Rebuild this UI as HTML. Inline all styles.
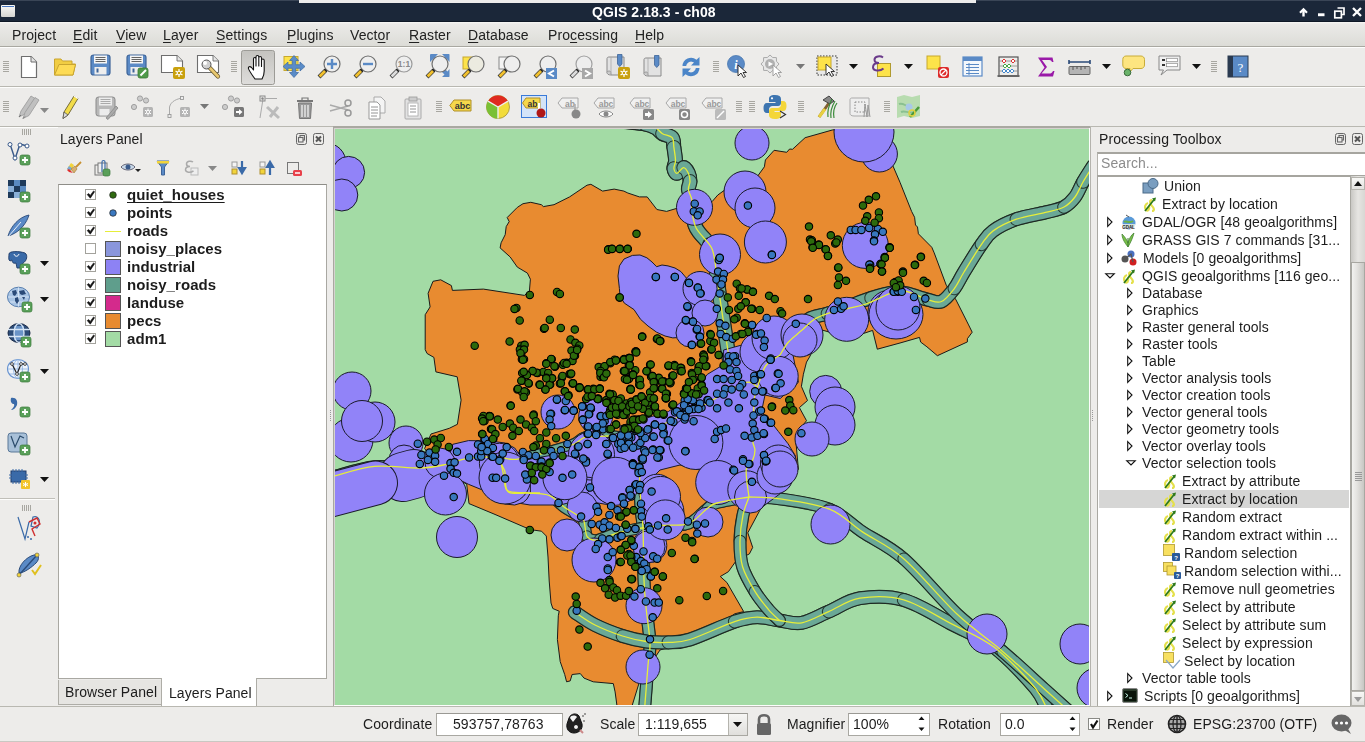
<!DOCTYPE html>
<html><head><meta charset="utf-8">
<style>
*{box-sizing:border-box;margin:0;padding:0}
html,body{width:1365px;height:742px;overflow:hidden;background:#edecea;font-family:"Liberation Sans",sans-serif;font-size:14px;color:#1c1c1c}
.a,.t,.i{position:absolute}
.t{white-space:nowrap;line-height:16px;letter-spacing:0.08px;will-change:transform}
svg.i{overflow:visible}
#map svg{position:absolute}
.u{text-decoration:underline;text-underline-offset:2px}
</style></head><body>
<div class="a" style="left:0;top:0;width:1365px;height:22px;background:#1b2739"></div>
<div class="a" style="left:0;top:21px;width:1365px;height:1px;background:#0e1726"></div>
<div class="a" style="left:0;top:0;width:299px;height:1px;background:#3a4556"></div>
<div class="a" style="left:976px;top:0;width:389px;height:1px;background:#3a4556"></div>
<div class="a" style="left:299px;top:0;width:677px;height:3px;background:#edeceb"></div>
<div class="a" style="left:1px;top:5px;width:14px;height:12px;background:linear-gradient(#fafaf8,#d4d4d0);border-radius:1px"></div>
<div class="a" style="left:2px;top:6px;width:12px;height:1px;background:#4a78c0"></div>
<div class="t" style="left:592px;top:4px;font-weight:bold;color:#fff;font-size:14px">QGIS 2.18.3 - ch08</div>
<svg class="i" style="left:1299px;top:8px" width="9" height="9" viewBox="0 0 9 9"><path d="M1,4.8 L4.5,1.3 L8,4.8" stroke="#fff" stroke-width="2.2" fill="none"/><path d="M4.5,2 V8.5" stroke="#fff" stroke-width="2.4"/></svg>
<svg class="i" style="left:1318px;top:13px" width="7" height="4" viewBox="0 0 7 4"><rect x="0" y="0.3" width="6.5" height="2.9" fill="#fff"/></svg>
<svg class="i" style="left:1333px;top:6px" width="13" height="13" viewBox="0 0 13 13"><path d="M4.5,2 H11 V8.5 H9" fill="none" stroke="#fff" stroke-width="1.7"/><rect x="1.8" y="5.2" width="6.6" height="6.6" fill="#1b2739" stroke="#fff" stroke-width="1.7"/></svg>
<svg class="i" style="left:1352px;top:7px" width="10" height="10" viewBox="0 0 10 10"><path d="M1,1 L9,9 M9,1 L1,9" stroke="#fff" stroke-width="2.3"/></svg>
<div class="a" style="left:0;top:22px;width:1365px;height:24px;background:linear-gradient(#f7f7f5 0px,#ebeae8 2px,#dcdcd7 100%)"></div>
<div class="a" style="left:0;top:46px;width:1365px;height:1px;background:#a9a8a1"></div>
<div class="a" style="left:0;top:47px;width:1365px;height:1px;background:#fdfdfc"></div>
<div class="t" style="left:12px;top:27px;font-size:14px;color:#222">Pro<span class="u">j</span>ect</div>
<div class="t" style="left:73px;top:27px;font-size:14px;color:#222"><span class="u">E</span>dit</div>
<div class="t" style="left:116px;top:27px;font-size:14px;color:#222"><span class="u">V</span>iew</div>
<div class="t" style="left:163px;top:27px;font-size:14px;color:#222"><span class="u">L</span>ayer</div>
<div class="t" style="left:216px;top:27px;font-size:14px;color:#222"><span class="u">S</span>ettings</div>
<div class="t" style="left:287px;top:27px;font-size:14px;color:#222"><span class="u">P</span>lugins</div>
<div class="t" style="left:350px;top:27px;font-size:14px;color:#222">Vect<span class="u">o</span>r</div>
<div class="t" style="left:409px;top:27px;font-size:14px;color:#222"><span class="u">R</span>aster</div>
<div class="t" style="left:468px;top:27px;font-size:14px;color:#222"><span class="u">D</span>atabase</div>
<div class="t" style="left:548px;top:27px;font-size:14px;color:#222">Pro<span class="u">c</span>essing</div>
<div class="t" style="left:635px;top:27px;font-size:14px;color:#222"><span class="u">H</span>elp</div>
<div class="a" style="left:0;top:48px;width:1365px;height:38px;background:#edecea"></div>
<div class="a" style="left:0;top:86px;width:1365px;height:1px;background:#b9b8b1"></div>
<div class="a" style="left:0;top:87px;width:1365px;height:1px;background:#fdfdfc"></div>
<div class="a" style="left:0;top:126px;width:1365px;height:1px;background:#b9b8b1"></div>
<div class="a" style="left:0;top:127px;width:58px;height:1px;background:#fdfdfc"></div>
<svg class="i" style="left:3px;top:61px" width="6" height="12" viewBox="0 0 6 12"><rect x="0" y="0" width="6" height="1" fill="#a8a7a1"/><rect x="0" y="2" width="6" height="1" fill="#a8a7a1"/><rect x="0" y="4" width="6" height="1" fill="#a8a7a1"/><rect x="0" y="6" width="6" height="1" fill="#a8a7a1"/><rect x="0" y="8" width="6" height="1" fill="#a8a7a1"/><rect x="0" y="10" width="6" height="1" fill="#a8a7a1"/></svg>
<svg class="i" style="left:20px;top:55px" width="18" height="24" viewBox="0 0 18 24"><path d="M1.5,1.5 H11 L16.5,7 V22.5 H1.5 Z" fill="#fff" stroke="#6e6e6e" stroke-width="1.2" stroke-linejoin="round"/><path d="M11,1.5 V7 H16.5" fill="#e4e4e4" stroke="#6e6e6e" stroke-width="1"/></svg>
<svg class="i" style="left:53px;top:57px" width="24" height="20" viewBox="0 0 24 20"><path d="M1.5,3 V18 H20 L22.5,7 H6 L3,18" fill="#f7d44a" stroke="#c9a530" stroke-width="1"/><path d="M1.5,18 V2 H8 L9.5,4 H19 V7" fill="#f1cd43" stroke="#c9a530" stroke-width="1"/><path d="M6,7.5 H22.5 L20,18 H1.5 Z" fill="#fddb55" stroke="#c9a530" stroke-width="1"/></svg>
<svg class="i" style="left:90px;top:54px" width="24" height="25" viewBox="0 0 24 25"><rect x="1" y="1" width="19" height="20" rx="2.5" fill="#5b8ac6" stroke="#3e6498" stroke-width="1.2"/><rect x="4" y="1.5" width="13" height="8" fill="#f4f4f4"/><path d="M5.5,3.5 H15.5 M5.5,5.5 H15.5 M5.5,7.5 H15.5" stroke="#555" stroke-width="0.9"/><rect x="4.5" y="13" width="12" height="7.5" fill="#eee"/><rect x="6.5" y="14.5" width="2" height="4" fill="#3e6498"/></svg>
<svg class="i" style="left:126px;top:54px" width="24" height="25" viewBox="0 0 24 25"><rect x="1" y="1" width="19" height="20" rx="2.5" fill="#5b8ac6" stroke="#3e6498" stroke-width="1.2"/><rect x="4" y="1.5" width="13" height="8" fill="#f4f4f4"/><path d="M5.5,3.5 H15.5 M5.5,5.5 H15.5 M5.5,7.5 H15.5" stroke="#555" stroke-width="0.9"/><rect x="4.5" y="13" width="12" height="7.5" fill="#eee"/><rect x="6.5" y="14.5" width="2" height="4" fill="#3e6498"/><rect x="12" y="14" width="10" height="10" rx="2" fill="#4f9a4a" stroke="#3a7a36" stroke-width="0.8"/><path d="M14.5,21.5 L20,16" stroke="#fff" stroke-width="2"/></svg>
<svg class="i" style="left:160px;top:54px" width="26" height="26" viewBox="0 0 26 26"><path d="M1.5,1.5 H17 L22.5,7 V18.5 H1.5 Z" fill="#fff" stroke="#6e6e6e" stroke-width="1.1"/><path d="M17,1.5 V7 H22.5" fill="#e6e6e6" stroke="#6e6e6e" stroke-width="0.9"/><rect x="13" y="13" width="12" height="12" rx="2" fill="#c9a10e"/><g stroke="#fff" stroke-width="1.2"><path d="M19,15 V23 M15.5,17 L22.5,21 M15.5,21 L22.5,17"/></g><circle cx="19" cy="19" r="1.8" fill="#c9a10e" stroke="#fff" stroke-width="1"/></svg>
<svg class="i" style="left:196px;top:54px" width="26" height="26" viewBox="0 0 26 26"><path d="M1.5,1.5 H17 L22.5,7 V18.5 H1.5 Z" fill="#fff" stroke="#6e6e6e" stroke-width="1.1"/><path d="M17,1.5 V7 H22.5" fill="#e6e6e6" stroke="#6e6e6e" stroke-width="0.9"/><path d="M13,13 L22,22.5" stroke="#6a5a30" stroke-width="4.2" stroke-linecap="round"/><path d="M13,13 L22,22.5" stroke="#e8c870" stroke-width="2.6" stroke-linecap="round"/><circle cx="10.5" cy="10.5" r="4.5" fill="#d0d0d0" stroke="#555" stroke-width="1"/><circle cx="9" cy="9" r="2" fill="#fff"/></svg>
<svg class="i" style="left:231px;top:61px" width="6" height="12" viewBox="0 0 6 12"><rect x="0" y="0" width="6" height="1" fill="#a8a7a1"/><rect x="0" y="2" width="6" height="1" fill="#a8a7a1"/><rect x="0" y="4" width="6" height="1" fill="#a8a7a1"/><rect x="0" y="6" width="6" height="1" fill="#a8a7a1"/><rect x="0" y="8" width="6" height="1" fill="#a8a7a1"/><rect x="0" y="10" width="6" height="1" fill="#a8a7a1"/></svg>
<svg class="i" style="left:241px;top:50px" width="34" height="35" viewBox="0 0 34 35"><defs><linearGradient id="pg" x1="0" y1="0" x2="0" y2="1"><stop offset="0" stop-color="#c4c3bf"/><stop offset="1" stop-color="#dedddb"/></linearGradient></defs><rect x="0.5" y="0.5" width="33" height="34" rx="2" fill="url(#pg)" stroke="#9c9b96"/><path d="M14,29 C12,26 8,21 7.5,18.5 C7,16.5 9,16 10.5,17.5 L12.5,20 V9 C12.5,7 15,7 15,9 V16 V7 C15,5 17.8,5 17.8,7 V16 V8 C17.8,6 20.5,6 20.5,8 V16.5 V10.5 C20.5,8.5 23.2,8.5 23.2,10.5 V21 C23.2,25 22,27 21,29 Z" fill="#fff" stroke="#111" stroke-width="1.1" stroke-linejoin="round"/></svg>
<svg class="i" style="left:282px;top:54px" width="24" height="25" viewBox="0 0 24 25"><rect x="2" y="2.5" width="14" height="14" fill="#fde34a" stroke="#c8a82c"/><path d="M12,1.5 L16.5,6.5 H13.8 V10.7 H18 V8.0 L23,12.5 L18,17.0 V14.3 H13.8 V18.5 H16.5 L12,23.5 L7.5,18.5 H10.2 V14.3 H6 V17.0 L1,12.5 L6,8.0 V10.7 H10.2 V6.5 H7.5 Z" fill="#5a8cc8" stroke="#3e6aa0" stroke-width="0.7"/></svg>
<svg class="i" style="left:317px;top:55px" width="26" height="24" viewBox="0 0 26 24"><path d="M2,22 L9,15" stroke="#333" stroke-width="4" stroke-linecap="butt"/><path d="M2.6,21.4 L8,16" stroke="#f2c12e" stroke-width="2.8"/><path d="M8.5,15.5 L10.5,13.5" stroke="#111" stroke-width="3"/><circle cx="15" cy="9" r="8" fill="#eeeeee" stroke="#6f6f6f" stroke-width="1.2"/><path d="M15,4 V14 M10,9 H20" stroke="#5a8ac6" stroke-width="2.4"/></svg>
<svg class="i" style="left:353px;top:55px" width="26" height="24" viewBox="0 0 26 24"><path d="M2,22 L9,15" stroke="#333" stroke-width="4" stroke-linecap="butt"/><path d="M2.6,21.4 L8,16" stroke="#f2c12e" stroke-width="2.8"/><path d="M8.5,15.5 L10.5,13.5" stroke="#111" stroke-width="3"/><circle cx="15" cy="9" r="8" fill="#eeeeee" stroke="#6f6f6f" stroke-width="1.2"/><path d="M10,9 H20" stroke="#5a8ac6" stroke-width="2.4"/></svg>
<svg class="i" style="left:389px;top:55px" width="26" height="24" viewBox="0 0 26 24"><path d="M2,22 L9,15" stroke="#333" stroke-width="4" stroke-linecap="butt"/><path d="M2.6,21.4 L8,16" stroke="#dddddd" stroke-width="2.8"/><path d="M8.5,15.5 L10.5,13.5" stroke="#111" stroke-width="3"/><circle cx="15" cy="9" r="8" fill="#eeeeee" stroke="#9a9a9a" stroke-width="1.2"/><text x="15" y="12.3" font-size="8.5" font-weight="bold" text-anchor="middle" fill="#8a8a8a" font-family="Liberation Sans">1:1</text></svg>
<svg class="i" style="left:425px;top:53px" width="26" height="26" viewBox="0 0 26 26"><path d="M6,1 H13 L10.5,3.5 L13,6 L10,9 L7.5,6.5 L5,9 V1.5 Z" fill="#5a8ac6"/><path d="M24,1 H17 L19.5,3.5 L17,6 L20,9 L22.5,6.5 L24.5,9 V1.5 Z" fill="#5a8ac6"/><path d="M24,24 H17 L19.5,21.5 L17,19 L20,16 L22.5,18.5 L24.5,16 V23.5 Z" fill="#5a8ac6"/><g transform="translate(0,2)"><path d="M2,22 L9,15" stroke="#333" stroke-width="4" stroke-linecap="butt"/><path d="M2.6,21.4 L8,16" stroke="#f2c12e" stroke-width="2.8"/><path d="M8.5,15.5 L10.5,13.5" stroke="#111" stroke-width="3"/><circle cx="15" cy="9" r="8" fill="#eeeeee" stroke="#6f6f6f" stroke-width="1.2"/></g></svg>
<svg class="i" style="left:461px;top:55px" width="26" height="24" viewBox="0 0 26 24"><rect x="2" y="2" width="10" height="12" fill="#fde34a" stroke="#c8a82c"/><path d="M2,22 L9,15" stroke="#333" stroke-width="4" stroke-linecap="butt"/><path d="M2.6,21.4 L8,16" stroke="#f2c12e" stroke-width="2.8"/><path d="M8.5,15.5 L10.5,13.5" stroke="#111" stroke-width="3"/><circle cx="15" cy="9" r="8" fill="#ecebe0" stroke="#6f6f6f" stroke-width="1.2"/></svg>
<svg class="i" style="left:497px;top:55px" width="26" height="24" viewBox="0 0 26 24"><rect x="2" y="2" width="10" height="12" fill="#f4f4f4" stroke="#888"/><path d="M2,22 L9,15" stroke="#333" stroke-width="4" stroke-linecap="butt"/><path d="M2.6,21.4 L8,16" stroke="#f2c12e" stroke-width="2.8"/><path d="M8.5,15.5 L10.5,13.5" stroke="#111" stroke-width="3"/><circle cx="15" cy="9" r="8" fill="#eeeeee" stroke="#6f6f6f" stroke-width="1.2"/></svg>
<svg class="i" style="left:533px;top:55px" width="26" height="26" viewBox="0 0 26 26"><path d="M2,22 L9,15" stroke="#333" stroke-width="4" stroke-linecap="butt"/><path d="M2.6,21.4 L8,16" stroke="#f2c12e" stroke-width="2.8"/><path d="M8.5,15.5 L10.5,13.5" stroke="#111" stroke-width="3"/><circle cx="15" cy="9" r="8" fill="#eeeeee" stroke="#6f6f6f" stroke-width="1.2"/><rect x="13" y="13" width="11" height="11" fill="#5a8ac6"/><path d="M21,15.5 L16,18.5 L21,21.5" stroke="#fff" stroke-width="2" fill="none"/></svg>
<svg class="i" style="left:569px;top:55px" width="26" height="26" viewBox="0 0 26 26"><path d="M2,22 L9,15" stroke="#333" stroke-width="4" stroke-linecap="butt"/><path d="M2.6,21.4 L8,16" stroke="#dddddd" stroke-width="2.8"/><path d="M8.5,15.5 L10.5,13.5" stroke="#111" stroke-width="3"/><circle cx="15" cy="9" r="8" fill="#eeeeee" stroke="#a0a0a0" stroke-width="1.2"/><rect x="13" y="13" width="11" height="11" fill="#a8a8a8"/><path d="M16,15.5 L21,18.5 L16,21.5" stroke="#fff" stroke-width="2" fill="none"/></svg>
<svg class="i" style="left:605px;top:54px" width="26" height="26" viewBox="0 0 26 26"><path d="M4,3 H19 V21 H6 C3,21 2,19.5 2,18.5 V4.5 C2,3.5 3,3 4,3 Z" fill="#e2e2e2" stroke="#8a8a8a"/><path d="M2,18.5 C2,16.5 6,16.5 6,18.5 V21" fill="#c8c8c8" stroke="#8a8a8a" stroke-width="0.8"/><path d="M6,3 V18" stroke="#aaa" stroke-width="0.8"/><path d="M12.5,0.5 H17 V10 L14.75,12.5 L12.5,10 Z" fill="#5a8ac6" stroke="#3e6498" stroke-width="0.8"/><rect x="13" y="13" width="12" height="12" rx="2" fill="#c9a10e"/><g stroke="#fff" stroke-width="1.2"><path d="M19,15 V23 M15.5,17 L22.5,21 M15.5,21 L22.5,17"/></g><circle cx="19" cy="19" r="1.8" fill="#c9a10e" stroke="#fff" stroke-width="1"/></svg>
<svg class="i" style="left:642px;top:55px" width="24" height="24" viewBox="0 0 24 24"><path d="M4,3 H19 V21 H6 C3,21 2,19.5 2,18.5 V4.5 C2,3.5 3,3 4,3 Z" fill="#e2e2e2" stroke="#8a8a8a"/><path d="M2,18.5 C2,16.5 6,16.5 6,18.5 V21" fill="#c8c8c8" stroke="#8a8a8a" stroke-width="0.8"/><path d="M6,3 V18" stroke="#aaa" stroke-width="0.8"/><path d="M12.5,0.5 H17 V10 L14.75,12.5 L12.5,10 Z" fill="#5a8ac6" stroke="#3e6498" stroke-width="0.8"/></svg>
<svg class="i" style="left:679px;top:55px" width="24" height="24" viewBox="0 0 24 24"><path d="M3.5,11 A8.5,8.5 0 0 1 17.5,4.8 L20.5,2 V10.5 H12 L15,7.5 A5,5 0 0 0 7.2,11 Z" fill="#4b85c8"/><path d="M20.5,13 A8.5,8.5 0 0 1 6.5,19.2 L3.5,22 V13.5 H12 L9,16.5 A5,5 0 0 0 16.8,13 Z" fill="#4b85c8"/></svg>
<svg class="i" style="left:713px;top:61px" width="6" height="12" viewBox="0 0 6 12"><rect x="0" y="0" width="6" height="1" fill="#a8a7a1"/><rect x="0" y="2" width="6" height="1" fill="#a8a7a1"/><rect x="0" y="4" width="6" height="1" fill="#a8a7a1"/><rect x="0" y="6" width="6" height="1" fill="#a8a7a1"/><rect x="0" y="8" width="6" height="1" fill="#a8a7a1"/><rect x="0" y="10" width="6" height="1" fill="#a8a7a1"/></svg>
<svg class="i" style="left:727px;top:55px" width="26" height="26" viewBox="0 0 26 26"><circle cx="9" cy="9" r="8.5" fill="#5a8ac6" stroke="#4a78b0" stroke-width="0.8"/><text x="9" y="14" font-size="12" font-style="italic" font-weight="bold" text-anchor="middle" fill="#fff" font-family="Liberation Serif">i</text><path d="M11,10 L11,21 L14,18 L16.5,22.5 L18.5,21.5 L16,17.5 H19.5 Z" fill="#fff" stroke="#222" stroke-width="0.9" stroke-linejoin="round"/></svg>
<svg class="i" style="left:761px;top:55px" width="24" height="26" viewBox="0 0 24 26"><polygon points="18.0,9.0 15.5,11.7 15.4,15.4 11.7,15.5 9.0,18.0 6.3,15.5 2.6,15.4 2.5,11.7 0.0,9.0 2.5,6.3 2.6,2.6 6.3,2.5 9.0,0.0 11.7,2.5 15.4,2.6 15.5,6.3" fill="#e8e8e8" stroke="#aaa"/><circle cx="9" cy="9" r="5" fill="#b0b0b0"/><path d="M7.5,6.5 L12,9 L7.5,11.5 Z" fill="#fff"/><path d="M12,10 L12,21 L15,18 L17.5,22.5 L19.5,21.5 L17,17.5 H20.5 Z" fill="#fff" stroke="#999" stroke-width="0.9" stroke-linejoin="round"/></svg>
<svg class="i" style="left:796px;top:64px" width="10" height="6" viewBox="0 0 10 6"><path d="M0,0 H9 L4.5,5 Z" fill="#777"/></svg>
<svg class="i" style="left:816px;top:55px" width="26" height="26" viewBox="0 0 26 26"><rect x="1" y="1" width="20" height="19" fill="#e8e8e8" stroke="#333" stroke-dasharray="1.5,1.5"/><rect x="2" y="2" width="13" height="13" fill="#fde34a" stroke="#c8a82c"/><path d="M10,9 L10,20 L13,17 L15.5,21.5 L17.5,20.5 L15,16.5 H18.5 Z" fill="#fff" stroke="#222" stroke-width="0.9" stroke-linejoin="round"/></svg>
<svg class="i" style="left:849px;top:64px" width="10" height="6" viewBox="0 0 10 6"><path d="M0,0 H9 L4.5,5 Z" fill="#111"/></svg>
<svg class="i" style="left:871px;top:55px" width="22" height="24" viewBox="0 0 22 24"><rect x="6.5" y="8.5" width="13" height="13" fill="#fde34a" stroke="#b09a30"/><path d="M12,2.5 C9.5,0.5 3.5,1 3.5,4.8 C3.5,6.8 5.5,8 8,8 C4.5,8 2,9.5 2,12.2 C2,16 9,16.5 12.5,13.5" fill="none" stroke="#6a3a8a" stroke-width="2"/></svg>
<svg class="i" style="left:904px;top:64px" width="10" height="6" viewBox="0 0 10 6"><path d="M0,0 H9 L4.5,5 Z" fill="#111"/></svg>
<svg class="i" style="left:926px;top:55px" width="24" height="24" viewBox="0 0 24 24"><rect x="1" y="1" width="13" height="13" fill="#fde34a" stroke="#c8a82c"/><rect x="12" y="12" width="11" height="11" rx="2" fill="#dd2a2a"/><circle cx="17.5" cy="17.5" r="3.5" fill="none" stroke="#fff" stroke-width="1.3"/><path d="M15,20 L20,15" stroke="#fff" stroke-width="1.3"/></svg>
<svg class="i" style="left:962px;top:56px" width="22" height="22" viewBox="0 0 22 22"><rect x="1" y="1" width="19" height="19" fill="#f4f8fc" stroke="#5a8ac6" stroke-width="1.2"/><rect x="1" y="1" width="19" height="4" fill="#5a8ac6"/><path d="M4,8.5 H17 M4,11.5 H17 M4,14.5 H17 M4,17.5 H17 M7,7 V19" stroke="#5a8ac6" stroke-width="1"/></svg>
<svg class="i" style="left:997px;top:56px" width="24" height="22" viewBox="0 0 24 22"><rect x="2" y="1" width="19" height="19" fill="none" stroke="#555" stroke-width="1.2"/><rect x="0.5" y="19" width="22" height="2" fill="#666"/><path d="M2,5 H21 M2,10 H21 M2,15 H21" stroke="#888" stroke-width="0.8"/><g fill="#fff" stroke-width="1"><path d="M7,3 L9,5 L7,7 L5,5 Z M16,3 L18,5 L16,7 L14,5 Z" stroke="#d33"/><path d="M8,8 L10,10 L8,12 L6,10 Z M12,8 L14,10 L12,12 L10,10 Z" stroke="#4a4"/><path d="M7,13 L9,15 L7,17 L5,15 Z M11,13 L13,15 L11,17 L9,15 Z M15,13 L17,15 L15,17 L13,15 Z" stroke="#48c"/></g></svg>
<svg class="i" style="left:1037px;top:56px" width="18" height="22" viewBox="0 0 18 22"><path d="M1,1.5 H15.5 L16.5,6 L15,6 C14,4 13,4 11,4 H5 L10,11 L4.5,17.5 H12 C14,17.5 15,17 16,15 L17.5,15 L16,20.5 H1 L7.5,11.5 Z" fill="#9a1aa8"/></svg>
<svg class="i" style="left:1068px;top:59px" width="24" height="18" viewBox="0 0 24 18"><path d="M1,3 H22 M1,1 V5 M22,1 V5" stroke="#2a4a78" stroke-width="1.6"/><rect x="1" y="7.5" width="21" height="8" rx="1" fill="#b4b4b4" stroke="#666"/><path d="M5,7.5 V11 M9,7.5 V10 M13,7.5 V11 M17,7.5 V10" stroke="#555"/></svg>
<svg class="i" style="left:1102px;top:64px" width="10" height="6" viewBox="0 0 10 6"><path d="M0,0 H9 L4.5,5 Z" fill="#111"/></svg>
<svg class="i" style="left:1122px;top:55px" width="24" height="24" viewBox="0 0 24 24"><path d="M4,1 H19 C21,1 22.5,2.5 22.5,4.5 V10 C22.5,12 21,13.5 19,13.5 H11 L7,18 L8,13.5 H4 C2,13.5 0.8,12 0.8,10 V4.5 C0.8,2.5 2,1 4,1 Z" fill="#fde580" stroke="#c8ac38"/><circle cx="5.5" cy="17.5" r="3.3" fill="#6ab36a" stroke="#3a6a3a"/></svg>
<svg class="i" style="left:1158px;top:55px" width="24" height="24" viewBox="0 0 24 24"><path d="M1,1 H22 V15 H9 L3,20 L5.5,15 H1 Z" fill="#f0f0f0" stroke="#888"/><rect x="4" y="4" width="3" height="2" fill="#333"/><rect x="4" y="9" width="3" height="2" fill="#333"/><rect x="8.5" y="3.3" width="11" height="3.4" fill="#fff" stroke="#888" stroke-width="0.7"/><rect x="8.5" y="8.3" width="11" height="3.4" fill="#fff" stroke="#888" stroke-width="0.7"/></svg>
<svg class="i" style="left:1192px;top:64px" width="10" height="6" viewBox="0 0 10 6"><path d="M0,0 H9 L4.5,5 Z" fill="#111"/></svg>
<svg class="i" style="left:1211px;top:61px" width="6" height="12" viewBox="0 0 6 12"><rect x="0" y="0" width="6" height="1" fill="#a8a7a1"/><rect x="0" y="2" width="6" height="1" fill="#a8a7a1"/><rect x="0" y="4" width="6" height="1" fill="#a8a7a1"/><rect x="0" y="6" width="6" height="1" fill="#a8a7a1"/><rect x="0" y="8" width="6" height="1" fill="#a8a7a1"/><rect x="0" y="10" width="6" height="1" fill="#a8a7a1"/></svg>
<svg class="i" style="left:1227px;top:55px" width="22" height="24" viewBox="0 0 22 24"><rect x="1" y="1" width="20" height="21" fill="#5a8ac6" stroke="#2a3a50"/><rect x="1" y="1" width="5" height="21" fill="#2a3a50"/><text x="13.5" y="16.5" font-size="13" text-anchor="middle" fill="#fff" font-family="Liberation Serif">?</text></svg>
<svg class="i" style="left:3px;top:101px" width="6" height="12" viewBox="0 0 6 12"><rect x="0" y="0" width="6" height="1" fill="#a8a7a1"/><rect x="0" y="2" width="6" height="1" fill="#a8a7a1"/><rect x="0" y="4" width="6" height="1" fill="#a8a7a1"/><rect x="0" y="6" width="6" height="1" fill="#a8a7a1"/><rect x="0" y="8" width="6" height="1" fill="#a8a7a1"/><rect x="0" y="10" width="6" height="1" fill="#a8a7a1"/></svg>
<svg class="i" style="left:17px;top:94px" width="24" height="26" viewBox="0 0 24 26"><g fill="#c0c0c0" stroke="#999" stroke-width="0.8"><path d="M2,23 L4,17 L14,2 L18,4.5 L8,20 Z"/><path d="M6,24.5 L8,18.5 L18,3.5 L22,6 L12,21.5 Z"/></g><path d="M2,23 L4,21 M6,24.5 L8,22.5" stroke="#777"/></svg>
<svg class="i" style="left:40px;top:108px" width="10" height="6" viewBox="0 0 10 6"><path d="M0,0 H9 L4.5,5 Z" fill="#888"/></svg>
<svg class="i" style="left:61px;top:94px" width="18" height="26" viewBox="0 0 18 26"><path d="M2,24.5 L3,18 L13,2 L17,4.5 L7,21 Z" fill="#f2dc4a" stroke="#6a6030" stroke-width="0.9"/><path d="M2,24.5 L3,18 L7,21 Z" fill="#ddd" stroke="#555" stroke-width="0.8"/><path d="M13,2 L17,4.5" stroke="#fff" stroke-width="1.2"/></svg>
<svg class="i" style="left:95px;top:96px" width="24" height="24" viewBox="0 0 24 24"><rect x="1" y="1" width="19" height="19" rx="2.5" fill="#b8b8b8" stroke="#8a8a8a" stroke-width="1"/><rect x="4" y="1.5" width="13" height="8" fill="#ececec"/><path d="M5.5,3.5 H15.5 M5.5,5.5 H15.5 M5.5,7.5 H15.5" stroke="#999" stroke-width="0.8"/><rect x="4.5" y="13" width="10" height="6.5" fill="#ececec"/><path d="M11,22 L21,10 L23,12 L13,23.5 Z" fill="#aaa" stroke="#888" stroke-width="0.8"/></svg>
<svg class="i" style="left:130px;top:95px" width="24" height="24" viewBox="0 0 24 24"><g fill="#ccc" stroke="#999" stroke-width="0.9"><circle cx="4" cy="12" r="2.6"/><circle cx="10" cy="3.5" r="2.6"/><circle cx="16" cy="5.5" r="2.6"/></g><rect x="13" y="12" width="10" height="10" rx="1.5" fill="#b4b4b4"/><g stroke="#fff" stroke-width="1"><path d="M18,13.5 V20.5 M15,15.2 L21,18.8 M15,18.8 L21,15.2"/></g><circle cx="18" cy="17" r="1.6" fill="#b4b4b4" stroke="#fff" stroke-width="0.9"/></svg>
<svg class="i" style="left:167px;top:95px" width="24" height="24" viewBox="0 0 24 24"><path d="M2.5,21 V12 C4,6 10,4 15,3" fill="none" stroke="#aaa" stroke-width="1"/><g fill="#eee" stroke="#999" stroke-width="0.9"><rect x="1" y="19.5" width="3" height="3"/><rect x="13.5" y="1.5" width="3" height="3"/></g><rect x="13" y="12" width="10" height="10" rx="1.5" fill="#b4b4b4"/><g stroke="#fff" stroke-width="1"><path d="M18,13.5 V20.5 M15,15.2 L21,18.8 M15,18.8 L21,15.2"/></g><circle cx="18" cy="17" r="1.6" fill="#b4b4b4" stroke="#fff" stroke-width="0.9"/></svg>
<svg class="i" style="left:200px;top:104px" width="10" height="6" viewBox="0 0 10 6"><path d="M0,0 H9 L4.5,5 Z" fill="#777"/></svg>
<svg class="i" style="left:221px;top:95px" width="24" height="24" viewBox="0 0 24 24"><g fill="#ccc" stroke="#999" stroke-width="0.9"><circle cx="4" cy="12" r="2.6"/><circle cx="10" cy="3.5" r="2.6"/><circle cx="16" cy="5.5" r="2.6"/></g><rect x="13" y="12" width="10" height="10" rx="1.5" fill="#777"/><path d="M15,16 H18 V14 L21.5,17 L18,20 V18 H15 Z" fill="#fff"/></svg>
<svg class="i" style="left:257px;top:95px" width="26" height="24" viewBox="0 0 26 24"><path d="M3,23 L6,4" stroke="#aaa" stroke-width="1"/><rect x="3" y="1" width="5" height="5" fill="none" stroke="#888"/><circle cx="5.5" cy="3.5" r="1.2" fill="#888"/><path d="M8,3.5 H20" stroke="#aaa"/><path d="M10,12 L22,23 M13,22 L21,12" stroke="#bbb" stroke-width="3"/></svg>
<svg class="i" style="left:296px;top:96px" width="18" height="24" viewBox="0 0 18 24"><path d="M1,5 H17" stroke="#777" stroke-width="2"/><path d="M6,4.5 V2 H12 V4.5" fill="none" stroke="#777" stroke-width="1.2"/><path d="M2.5,7 H15.5 L14.5,22.5 H3.5 Z" fill="#9a9a9a" stroke="#777"/><path d="M6,9 V21 M9,9 V21 M12,9 V21" stroke="#fff" stroke-width="1.1"/></svg>
<svg class="i" style="left:329px;top:98px" width="24" height="20" viewBox="0 0 24 20"><path d="M1,7 L19,12 M1,13 L19,8" stroke="#aaa" stroke-width="1.5"/><circle cx="19" cy="5" r="3" fill="none" stroke="#999" stroke-width="1.5"/><circle cx="19" cy="15" r="3" fill="none" stroke="#999" stroke-width="1.5"/></svg>
<svg class="i" style="left:368px;top:96px" width="18" height="24" viewBox="0 0 18 24"><path d="M6,1 H13 L17,5 V17 H6 Z" fill="#f4f4f4" stroke="#aaa"/><path d="M1,6 H9 L12,9 V23 H1 Z" fill="#fff" stroke="#999"/><path d="M3,11 H10 M3,14 H10 M3,17 H10 M3,20 H9" stroke="#888" stroke-width="0.9"/></svg>
<svg class="i" style="left:404px;top:96px" width="18" height="24" viewBox="0 0 18 24"><rect x="1" y="3" width="16" height="20" rx="1" fill="#e2e2e2" stroke="#aaa"/><rect x="5" y="1" width="8" height="4" fill="#ccc" stroke="#999" stroke-width="0.8"/><rect x="4" y="7" width="10" height="13" fill="#fff" stroke="#aaa" stroke-width="0.8"/><path d="M6,10 H12 M6,13 H12 M6,16 H12" stroke="#888" stroke-width="0.9"/></svg>
<svg class="i" style="left:436px;top:101px" width="6" height="12" viewBox="0 0 6 12"><rect x="0" y="0" width="6" height="1" fill="#a8a7a1"/><rect x="0" y="2" width="6" height="1" fill="#a8a7a1"/><rect x="0" y="4" width="6" height="1" fill="#a8a7a1"/><rect x="0" y="6" width="6" height="1" fill="#a8a7a1"/><rect x="0" y="8" width="6" height="1" fill="#a8a7a1"/><rect x="0" y="10" width="6" height="1" fill="#a8a7a1"/></svg>
<svg class="i" style="left:449px;top:99px" width="24" height="14" viewBox="0 0 24 14"><path d="M5,1 H22 V12 H5 L0.8,6.5 Z" fill="#f6d84a" stroke="#b0902a"/><text x="13.5" y="10" font-size="9" font-weight="bold" text-anchor="middle" fill="#333" font-family="Liberation Sans">abc</text></svg>
<svg class="i" style="left:485px;top:94px" width="26" height="26" viewBox="0 0 26 26"><circle cx="13" cy="13" r="11.5" fill="#f2dc3a" stroke="#a09040" stroke-width="0.8"/><path d="M13,13 L13,24.5 A11.5,11.5 0 0 1 3,7.2 Z" fill="#7ac035"/><path d="M13,13 L3,7.2 A11.5,11.5 0 0 1 23,7.2 Z" fill="#e02a20"/><path d="M13,13 L13,24.5 M13,13 L3,7.2 M13,13 L23,7.2" stroke="#eee" stroke-width="1.4"/></svg>
<svg class="i" style="left:521px;top:95px" width="26" height="24" viewBox="0 0 26 24"><rect x="0.5" y="0.5" width="25" height="22" fill="#d4e4f8" stroke="#3a7ad8"/><path d="M5,3 H19 V13 H5 L1.5,8 Z" fill="#f6d84a" stroke="#b0902a"/><text x="11.5" y="11.5" font-size="8.5" font-weight="bold" text-anchor="middle" fill="#333" font-family="Liberation Sans">ab</text><path d="M18,8 V15" stroke="#fff" stroke-width="2"/><circle cx="20" cy="18" r="4.5" fill="#b01818"/></svg>
<svg class="i" style="left:557px;top:95px" width="26" height="26" viewBox="0 0 26 26"><path d="M5,3 H21 V13 H5 L1,8 Z" fill="#f0f0f0" stroke="#a8a8a8"/><text x="13" y="11.5" font-size="8.5" font-weight="bold" text-anchor="middle" fill="#999" font-family="Liberation Sans">ab</text><path d="M18,9 V15" stroke="#aaa" stroke-width="1.5"/><circle cx="19" cy="19" r="4.5" fill="#888"/></svg>
<svg class="i" style="left:593px;top:95px" width="26" height="26" viewBox="0 0 26 26"><path d="M5,3 H21 V13 H5 L1,8 Z" fill="#f0f0f0" stroke="#a8a8a8"/><text x="13" y="11.5" font-size="8.5" font-weight="bold" text-anchor="middle" fill="#999" font-family="Liberation Sans">abc</text><path d="M6,19 C9,15 17,15 20,19 C17,23 9,23 6,19 Z" fill="#fff" stroke="#888"/><circle cx="13" cy="19" r="2.5" fill="#888"/></svg>
<svg class="i" style="left:629px;top:95px" width="26" height="26" viewBox="0 0 26 26"><path d="M5,3 H21 V13 H5 L1,8 Z" fill="#f0f0f0" stroke="#a8a8a8"/><text x="13" y="11.5" font-size="8.5" font-weight="bold" text-anchor="middle" fill="#999" font-family="Liberation Sans">abc</text><rect x="14" y="14" width="11" height="11" rx="1.5" fill="#888"/><path d="M16,18 H19 V16 L23,19.5 L19,23 V21 H16 Z" fill="#fff"/></svg>
<svg class="i" style="left:665px;top:95px" width="26" height="26" viewBox="0 0 26 26"><path d="M5,3 H21 V13 H5 L1,8 Z" fill="#f0f0f0" stroke="#a8a8a8"/><text x="13" y="11.5" font-size="8.5" font-weight="bold" text-anchor="middle" fill="#999" font-family="Liberation Sans">abc</text><rect x="14" y="14" width="11" height="11" rx="1.5" fill="#888"/><circle cx="19.5" cy="19.5" r="3" fill="none" stroke="#fff" stroke-width="1.5"/></svg>
<svg class="i" style="left:701px;top:95px" width="26" height="26" viewBox="0 0 26 26"><path d="M5,3 H21 V13 H5 L1,8 Z" fill="#f0f0f0" stroke="#a8a8a8"/><text x="13" y="11.5" font-size="8.5" font-weight="bold" text-anchor="middle" fill="#999" font-family="Liberation Sans">abc</text><rect x="14" y="14" width="11" height="11" rx="1.5" fill="#bbb"/><path d="M16,23 L23,16" stroke="#fff" stroke-width="1.5"/></svg>
<svg class="i" style="left:736px;top:101px" width="6" height="12" viewBox="0 0 6 12"><rect x="0" y="0" width="6" height="1" fill="#a8a7a1"/><rect x="0" y="2" width="6" height="1" fill="#a8a7a1"/><rect x="0" y="4" width="6" height="1" fill="#a8a7a1"/><rect x="0" y="6" width="6" height="1" fill="#a8a7a1"/><rect x="0" y="8" width="6" height="1" fill="#a8a7a1"/><rect x="0" y="10" width="6" height="1" fill="#a8a7a1"/></svg>
<svg class="i" style="left:749px;top:101px" width="6" height="12" viewBox="0 0 6 12"><rect x="0" y="0" width="6" height="1" fill="#a8a7a1"/><rect x="0" y="2" width="6" height="1" fill="#a8a7a1"/><rect x="0" y="4" width="6" height="1" fill="#a8a7a1"/><rect x="0" y="6" width="6" height="1" fill="#a8a7a1"/><rect x="0" y="8" width="6" height="1" fill="#a8a7a1"/><rect x="0" y="10" width="6" height="1" fill="#a8a7a1"/></svg>
<svg class="i" style="left:763px;top:94px" width="26" height="26" viewBox="0 0 26 26"><path d="M12,1 C7,1 6,3 6,5 V8 H12.5 V9 H4 C1.5,9 0.5,11 0.5,14 C0.5,17.5 1.5,19 4,19 H6 V15.5 C6,13.5 7.5,12 9.5,12 H15 C17,12 18,10.5 18,9 V5 C18,2.5 16,1 12,1 Z" fill="#3d75b0"/><circle cx="9" cy="4.3" r="1.1" fill="#fff"/><path d="M12,25 C17,25 18,23 18,21 V18 H11.5 V17 H20 C22.5,17 23.5,15 23.5,12 C23.5,8.5 22.5,7 20,7 H18 V10.5 C18,12.5 16.5,14 14.5,14 H9 C7,14 6,15.5 6,17 V21 C6,23.5 8,25 12,25 Z" fill="#f4d63a"/><path d="M17,17 L22.5,20.5 L17,24" stroke="#333" stroke-width="1.2" fill="none"/></svg>
<svg class="i" style="left:798px;top:101px" width="6" height="12" viewBox="0 0 6 12"><rect x="0" y="0" width="6" height="1" fill="#a8a7a1"/><rect x="0" y="2" width="6" height="1" fill="#a8a7a1"/><rect x="0" y="4" width="6" height="1" fill="#a8a7a1"/><rect x="0" y="6" width="6" height="1" fill="#a8a7a1"/><rect x="0" y="8" width="6" height="1" fill="#a8a7a1"/><rect x="0" y="10" width="6" height="1" fill="#a8a7a1"/></svg>
<svg class="i" style="left:815px;top:95px" width="24" height="24" viewBox="0 0 24 24"><path d="M4,22 L14,8" stroke="#806030" stroke-width="3"/><path d="M4,22 L10,14" stroke="#e8d040" stroke-width="3"/><path d="M8,5 L14,1 L19,6 L15,9 Z" fill="#888" stroke="#444"/><path d="M13,22 C12,15 14,10 17,4 M16,23 C15,16 17,11 20,6 M19,23 C18,17 19,12 22,8" stroke="#3a8a3a" stroke-width="1.2" fill="none"/></svg>
<svg class="i" style="left:848px;top:95px" width="24" height="24" viewBox="0 0 24 24"><path d="M4,3 H21 V21 H6 C3,21 2,19.5 2,18.5 V4.5 C2,3.5 3,3 4,3 Z" fill="#eee" stroke="#aaa"/><rect x="7" y="7" width="10" height="10" fill="none" stroke="#888" stroke-dasharray="1.5,1.5"/><path d="M16,22 L17,9 L19,22 L20,10 L22,22" stroke="#999" fill="none"/></svg>
<svg class="i" style="left:884px;top:101px" width="6" height="12" viewBox="0 0 6 12"><rect x="0" y="0" width="6" height="1" fill="#a8a7a1"/><rect x="0" y="2" width="6" height="1" fill="#a8a7a1"/><rect x="0" y="4" width="6" height="1" fill="#a8a7a1"/><rect x="0" y="6" width="6" height="1" fill="#a8a7a1"/><rect x="0" y="8" width="6" height="1" fill="#a8a7a1"/><rect x="0" y="10" width="6" height="1" fill="#a8a7a1"/></svg>
<svg class="i" style="left:896px;top:94px" width="26" height="26" viewBox="0 0 26 26"><path d="M1,3 L8,1 L16,3 L24,1 V22 L16,24 L8,22 L1,24 Z" fill="#b8dcb0"/><path d="M3,10 C8,8 10,14 15,12 M5,18 C9,16 12,20 20,18" stroke="#8ac090" stroke-width="2" fill="none"/><circle cx="13" cy="13" r="3.5" fill="#a8c8e8"/><path d="M14,23 L23,13" stroke="#4a9a3a" stroke-width="2.5"/><circle cx="16" cy="19" r="3" fill="none" stroke="#e0d040" stroke-width="1.5"/></svg>
<div class="a" style="left:0;top:498px;width:55px;height:1px;background:#c0bfb9"></div>
<div class="a" style="left:0;top:499px;width:55px;height:1px;background:#fdfdfc"></div>
<svg class="i" style="left:22px;top:129px" width="10" height="6" viewBox="0 0 10 6"><rect x="0" y="0" width="1" height="6" fill="#a8a7a1"/><rect x="2" y="0" width="1" height="6" fill="#a8a7a1"/><rect x="4" y="0" width="1" height="6" fill="#a8a7a1"/><rect x="6" y="0" width="1" height="6" fill="#a8a7a1"/><rect x="8" y="0" width="1" height="6" fill="#a8a7a1"/></svg>
<svg class="i" style="left:7px;top:142px" width="24" height="24" viewBox="0 0 24 24"><path d="M3,2 L8,17 L13,2 M13,2 L20,4" stroke="#3a5a8a" stroke-width="1.4" fill="none"/><circle cx="3" cy="2.5" r="2" fill="#fff" stroke="#3a5a8a"/><circle cx="13" cy="3" r="2" fill="#fff" stroke="#3a5a8a"/><circle cx="20" cy="4" r="2" fill="#fff" stroke="#3a5a8a"/><circle cx="8" cy="16" r="2" fill="#fff" stroke="#3a5a8a"/><rect x="13" y="13" width="10" height="10" rx="2" fill="#5aa05a" stroke="#3a7a3a" stroke-width="0.7"/><path d="M18,15 V21 M15,18 H21" stroke="#fff" stroke-width="1.8"/></svg>
<svg class="i" style="left:7px;top:179px" width="24" height="24" viewBox="0 0 24 24"><rect x="1" y="1" width="6" height="6" fill="#1e3a5a"/><rect x="7" y="1" width="6" height="6" fill="#5a8ac0"/><rect x="13" y="1" width="6" height="6" fill="#1e3a5a"/><rect x="1" y="7" width="6" height="6" fill="#8ab0d8"/><rect x="7" y="7" width="6" height="6" fill="#1e3a5a"/><rect x="13" y="7" width="6" height="6" fill="#5a8ac0"/><rect x="1" y="13" width="6" height="6" fill="#1e3a5a"/><rect x="7" y="13" width="6" height="6" fill="#8ab0d8"/><rect x="13" y="13" width="6" height="6" fill="#5a8ac0"/><rect x="13" y="13" width="10" height="10" rx="2" fill="#5aa05a" stroke="#3a7a3a" stroke-width="0.7"/><path d="M18,15 V21 M15,18 H21" stroke="#fff" stroke-width="1.8"/></svg>
<svg class="i" style="left:7px;top:214px" width="24" height="26" viewBox="0 0 24 26"><path d="M1,22 C4,12 12,3 22,1 C20,8 14,17 4,21 Z" fill="#5a8ac6" stroke="#2a4a78" stroke-width="0.9"/><path d="M1,23 L14,8" stroke="#e8eef8" stroke-width="1"/><rect x="13" y="14" width="10" height="10" rx="2" fill="#5aa05a" stroke="#3a7a3a" stroke-width="0.7"/><path d="M18,16 V22 M15,19 H21" stroke="#fff" stroke-width="1.8"/></svg>
<svg class="i" style="left:7px;top:251px" width="24" height="24" viewBox="0 0 24 24"><path d="M2,3 C2,0 12,0 18,2 C21,4 20,10 16,12 L14,17 H10 L9,12 C6,13 5,11 5,9 L3,10 C1,9 2,5 2,3 Z" fill="#3a6aa8" stroke="#1e3a68" stroke-width="0.9"/><path d="M7,3 C8,6 11,6 12,3" stroke="#fff" fill="none"/><rect x="13" y="13" width="10" height="10" rx="2" fill="#5aa05a" stroke="#3a7a3a" stroke-width="0.7"/><path d="M18,15 V21 M15,18 H21" stroke="#fff" stroke-width="1.8"/></svg>
<svg class="i" style="left:40px;top:261px" width="10" height="6" viewBox="0 0 10 6"><path d="M0,0 H9 L4.5,5 Z" fill="#111"/></svg>
<svg class="i" style="left:7px;top:287px" width="26" height="26" viewBox="0 0 26 26"><ellipse cx="11.5" cy="10" rx="11" ry="9.8" fill="#a8c4e4" stroke="#5a80b0" stroke-width="1"/><path d="M1,10 H22 M11.5,0.5 V19.5 M3,5 H20 M3,15 H20" stroke="#dce8f6" stroke-width="0.8"/><path d="M5,4 L9,3 L10,6 L8,9 L6,8 Z M12,4 L17,3 L19,7 L15,8 L13,7 Z M8,11 L11,10 L12,14 L10,17 L8,14 Z M15,10 L18,10 L17,13 Z" fill="#2a4a78"/><rect x="15" y="15" width="10" height="10" rx="2" fill="#5aa05a" stroke="#3a7a3a" stroke-width="0.7"/><path d="M20,17 V23 M17,20 H23" stroke="#fff" stroke-width="1.8"/></svg>
<svg class="i" style="left:40px;top:297px" width="10" height="6" viewBox="0 0 10 6"><path d="M0,0 H9 L4.5,5 Z" fill="#111"/></svg>
<svg class="i" style="left:7px;top:323px" width="26" height="24" viewBox="0 0 26 24"><ellipse cx="12" cy="10" rx="11" ry="9.5" fill="#2c4c78" stroke="#1a2a48"/><rect x="7" y="3" width="10" height="14" fill="#6a94c8"/><path d="M1,6.5 H23 M1,13.5 H23" stroke="#d8e6f6" stroke-width="1.6"/><ellipse cx="12" cy="10" rx="5" ry="9.5" fill="none" stroke="#d8e6f6" stroke-width="1.3"/><rect x="14" y="14" width="10" height="10" rx="2" fill="#5aa05a" stroke="#3a7a3a" stroke-width="0.7"/><path d="M19,16 V22 M16,19 H22" stroke="#fff" stroke-width="1.8"/></svg>
<svg class="i" style="left:7px;top:359px" width="24" height="24" viewBox="0 0 24 24"><ellipse cx="11" cy="10" rx="10.5" ry="9.5" fill="#eef4fb" stroke="#6a94d0" stroke-width="1.1"/><path d="M1,10 H21 M11,1 V19 M3,5 H19 M3,15 H19" stroke="#8ab0e0" stroke-width="0.8"/><ellipse cx="11" cy="10" rx="4.5" ry="9.5" fill="none" stroke="#8ab0e0" stroke-width="0.8"/><path d="M5,5 L10,15 L14,5 L18,5" stroke="#222" stroke-width="1.2" fill="none"/><circle cx="5" cy="5" r="1.4" fill="#fff" stroke="#222" stroke-width="0.8"/><circle cx="14" cy="5" r="1.4" fill="#fff" stroke="#222" stroke-width="0.8"/><circle cx="18" cy="5" r="1.4" fill="#fff" stroke="#222" stroke-width="0.8"/><circle cx="10" cy="15" r="1.4" fill="#fff" stroke="#222" stroke-width="0.8"/><rect x="13" y="13" width="10" height="10" rx="2" fill="#5aa05a" stroke="#3a7a3a" stroke-width="0.7"/><path d="M18,15 V21 M15,18 H21" stroke="#fff" stroke-width="1.8"/></svg>
<svg class="i" style="left:40px;top:369px" width="10" height="6" viewBox="0 0 10 6"><path d="M0,0 H9 L4.5,5 Z" fill="#111"/></svg>
<svg class="i" style="left:9px;top:396px" width="22" height="22" viewBox="0 0 22 22"><path d="M2,2 C7,1 9,5 8,9 C7,12 4,14 2,14 C4,12 6,10 5,8 C3,8 1,6 2,2 Z" fill="#3a6aa8"/><rect x="11" y="11" width="10" height="10" rx="2" fill="#5aa05a" stroke="#3a7a3a" stroke-width="0.7"/><path d="M16,13 V19 M13,16 H19" stroke="#fff" stroke-width="1.8"/></svg>
<svg class="i" style="left:7px;top:432px" width="24" height="24" viewBox="0 0 24 24"><rect x="1" y="1" width="19" height="19" rx="3" fill="#a8c0d8" stroke="#5a7898"/><path d="M4,4 L8,15 L13,4 L17,6" stroke="#2a4a6a" stroke-width="1.2" fill="none"/><rect x="13" y="13" width="10" height="10" rx="2" fill="#5aa05a" stroke="#3a7a3a" stroke-width="0.7"/><path d="M18,15 V21 M15,18 H21" stroke="#fff" stroke-width="1.8"/></svg>
<svg class="i" style="left:8px;top:467px" width="24" height="24" viewBox="0 0 24 24"><rect x="3" y="4" width="15" height="11" fill="#3a6aa8" stroke="#1e3a68"/><path d="M5,2 V17 M8,2 V17 M11,2 V17 M14,2 V17 M1,8 H20 M1,11 H20" stroke="#3a6aa8" stroke-width="1"/><rect x="5" y="6" width="11" height="7" fill="#3a6aa8"/><rect x="13" y="13" width="9" height="9" rx="1" fill="#f2c42a"/><path d="M17.5,15 V20 M15,16.5 L20,18.5 M15,18.5 L20,16.5" stroke="#fff" stroke-width="1"/></svg>
<svg class="i" style="left:40px;top:477px" width="10" height="6" viewBox="0 0 10 6"><path d="M0,0 H9 L4.5,5 Z" fill="#111"/></svg>
<svg class="i" style="left:22px;top:505px" width="10" height="6" viewBox="0 0 10 6"><rect x="0" y="0" width="1" height="6" fill="#a8a7a1"/><rect x="2" y="0" width="1" height="6" fill="#a8a7a1"/><rect x="4" y="0" width="1" height="6" fill="#a8a7a1"/><rect x="6" y="0" width="1" height="6" fill="#a8a7a1"/><rect x="8" y="0" width="1" height="6" fill="#a8a7a1"/></svg>
<svg class="i" style="left:16px;top:514px" width="26" height="28" viewBox="0 0 26 28"><path d="M2,3 L9,25 L13,8 M17,3 C24,1 25,9 21,14 L15,12 Z" stroke="#3a6aa8" stroke-width="1.2" fill="none"/><path d="M13,8 L21,4 L24,10 L16,15 L19,22" stroke="#d03030" stroke-width="1.4" fill="none"/><circle cx="19" cy="9" r="1.5" fill="#d03030"/><circle cx="12" cy="23" r="1" fill="#3a6aa8"/><circle cx="15" cy="25" r="1" fill="#3a6aa8"/></svg>
<svg class="i" style="left:16px;top:551px" width="26" height="28" viewBox="0 0 26 28"><path d="M3,22 C2,15 10,6 18,4 C23,3 24,8 20,12 C16,16 8,22 3,22 Z" fill="#5a8ac6" stroke="#2a4a78"/><path d="M3,24 L21,4" stroke="#2a4a78" stroke-width="1.3"/><circle cx="3" cy="24" r="2" fill="#f2d43a" stroke="#555" stroke-width="0.6"/><circle cx="21" cy="4" r="2" fill="#f2d43a" stroke="#555" stroke-width="0.6"/><path d="M16,19 L19,23 L25,14" stroke="#e0c020" stroke-width="2" fill="none"/></svg>
<div class="t" style="left:60px;top:131px;">Layers Panel</div>
<svg class="i" style="left:296px;top:133px" width="11" height="12" viewBox="0 0 11 12"><rect x="0.5" y="0.5" width="10" height="11" rx="2" fill="none" stroke="#666"/><rect x="4" y="2.5" width="4.5" height="4.5" fill="none" stroke="#666" stroke-width="1.1"/><rect x="2.5" y="4.5" width="4.5" height="4.5" fill="#edecea" stroke="#666" stroke-width="1.1"/></svg>
<svg class="i" style="left:313px;top:133px" width="11" height="12" viewBox="0 0 11 12"><rect x="0.5" y="0.5" width="10" height="11" rx="2" fill="none" stroke="#666"/><path d="M3,3.5 L8,8.5 M8,3.5 L3,8.5" stroke="#555" stroke-width="2"/></svg>
<svg class="i" style="left:66px;top:161px" width="16" height="14" viewBox="0 0 16 14"><path d="M1,8 L5,2 L8,4 L5,10 Z" fill="#f2d43a"/><path d="M1,8 L3,5 L6,7 L4,10 Z" fill="#7aa8d8"/><path d="M1,9 L3,11 L7,12 L3,8 Z" fill="#e03030"/><path d="M5,8 L9,5 L11,8 L8,12 Z" fill="#d8b070" stroke="#a07830" stroke-width="0.6"/><path d="M10,6 L15,1" stroke="#c89030" stroke-width="1.8"/></svg>
<svg class="i" style="left:94px;top:160px" width="16" height="16" viewBox="0 0 16 16"><rect x="1" y="5" width="9" height="10" fill="none" stroke="#777"/><rect x="4" y="3" width="9" height="10" fill="#f0f0f0" stroke="#777"/><path d="M8,12 V2 C8,0 11,0 11,2 V10" stroke="#3a6aa8" stroke-width="1.2" fill="none"/><rect x="9" y="9" width="7" height="7" rx="2" fill="#5aa05a" stroke="#3a7a3a" stroke-width="0.7"/><path d="M14,11 V17 M11,14 H17" stroke="#fff" stroke-width="0"/></svg>
<svg class="i" style="left:120px;top:162px" width="22" height="12" viewBox="0 0 22 12"><path d="M1,5 C4,1 12,1 15,5 C12,9 4,9 1,5 Z" fill="#c8d8e8" stroke="#667"/><circle cx="8" cy="5" r="2.5" fill="#3a5a8a"/><path d="M15,7 H21 L18,10 Z" fill="#222"/></svg>
<svg class="i" style="left:156px;top:160px" width="14" height="16" viewBox="0 0 14 16"><path d="M1,1 H13 L8.5,7 V15 H5.5 V7 Z" fill="#5a8ac6" stroke="#3e6498"/><rect x="1" y="1" width="12" height="2.5" fill="#f2d43a"/></svg>
<svg class="i" style="left:184px;top:160px" width="16" height="16" viewBox="0 0 16 16"><rect x="7" y="8" width="7" height="7" fill="#eee" stroke="#bbb"/><path d="M9,2 C7,0.5 2.5,1 2.5,4 C2.5,5.5 4,6.5 6,6.5 C3.5,6.5 1.5,7.5 1.5,9.8 C1.5,12.5 6.5,13 9.5,10.8" fill="none" stroke="#aaa" stroke-width="1.5"/></svg>
<svg class="i" style="left:208px;top:166px" width="10" height="6" viewBox="0 0 10 6"><path d="M0,0 H9 L4.5,5 Z" fill="#888"/></svg>
<svg class="i" style="left:231px;top:160px" width="16" height="16" viewBox="0 0 16 16"><rect x="1" y="2" width="5" height="5" fill="#f4f4f4" stroke="#999"/><rect x="1" y="9" width="5" height="5" fill="#f2d43a" stroke="#b09030"/><path d="M11,1 V10 M8,8 L11,13 L14,8 Z" stroke="#3a6aa8" stroke-width="2.2" fill="#3a6aa8"/></svg>
<svg class="i" style="left:259px;top:160px" width="16" height="16" viewBox="0 0 16 16"><rect x="1" y="2" width="5" height="5" fill="#f4f4f4" stroke="#999"/><rect x="1" y="9" width="5" height="5" fill="#f2d43a" stroke="#b09030"/><path d="M11,15 V6 M8,7 L11,2 L14,7 Z" stroke="#3a6aa8" stroke-width="2.2" fill="#3a6aa8"/></svg>
<svg class="i" style="left:287px;top:162px" width="15" height="14" viewBox="0 0 15 14"><rect x="0.5" y="0.5" width="11" height="11" fill="none" stroke="#777"/><rect x="6" y="8" width="9" height="6" rx="1.5" fill="#e8404a"/><path d="M8,11 H13" stroke="#fff" stroke-width="1.5"/></svg>
<div class="a" style="left:58px;top:184px;width:269px;height:495px;background:#fff;border:1px solid #a9a8a2;border-top-color:#8e8d88"></div>
<div class="a" style="left:85px;top:189px;width:11px;height:11px;background:#fff;border:1px solid #a3a29c"></div>
<svg class="i" style="left:86px;top:190px" width="9" height="9" viewBox="0 0 9 9"><path d="M1.2,4.6 L2.8,3.6 L4.2,5.4 L7.6,0.9 L8.6,1.7 L4.3,8.2 Z" fill="#111" stroke="#111" stroke-width="0.6" stroke-linejoin="round"/></svg>
<svg class="i" style="left:109px;top:191px" width="8" height="8" viewBox="0 0 8 8"><circle cx="4" cy="4" r="3.3" fill="#2f6a10" stroke="#222" stroke-width="0.7"/></svg>
<div class="t" style="left:127px;top:187px;font-weight:bold;font-size:15px;text-decoration:underline;text-underline-offset:2px;text-decoration-skip-ink:none">quiet_houses</div>
<div class="a" style="left:85px;top:207px;width:11px;height:11px;background:#fff;border:1px solid #a3a29c"></div>
<svg class="i" style="left:86px;top:208px" width="9" height="9" viewBox="0 0 9 9"><path d="M1.2,4.6 L2.8,3.6 L4.2,5.4 L7.6,0.9 L8.6,1.7 L4.3,8.2 Z" fill="#111" stroke="#111" stroke-width="0.6" stroke-linejoin="round"/></svg>
<svg class="i" style="left:109px;top:209px" width="8" height="8" viewBox="0 0 8 8"><circle cx="4" cy="4" r="3.3" fill="#3a78c0" stroke="#222" stroke-width="0.7"/></svg>
<div class="t" style="left:127px;top:205px;font-weight:bold;font-size:15px">points</div>
<div class="a" style="left:85px;top:225px;width:11px;height:11px;background:#fff;border:1px solid #a3a29c"></div>
<svg class="i" style="left:86px;top:226px" width="9" height="9" viewBox="0 0 9 9"><path d="M1.2,4.6 L2.8,3.6 L4.2,5.4 L7.6,0.9 L8.6,1.7 L4.3,8.2 Z" fill="#111" stroke="#111" stroke-width="0.6" stroke-linejoin="round"/></svg>
<div class="a" style="left:105px;top:231px;width:16px;height:1px;background:#e6ee3a"></div>
<div class="t" style="left:127px;top:223px;font-weight:bold;font-size:15px">roads</div>
<div class="a" style="left:85px;top:243px;width:11px;height:11px;background:#fff;border:1px solid #a3a29c"></div>
<div class="a" style="left:105px;top:241px;width:16px;height:16px;background:#8a96dc;border:1px solid #555"></div>
<div class="t" style="left:127px;top:241px;font-weight:bold;font-size:15px">noisy_places</div>
<div class="a" style="left:85px;top:261px;width:11px;height:11px;background:#fff;border:1px solid #a3a29c"></div>
<svg class="i" style="left:86px;top:262px" width="9" height="9" viewBox="0 0 9 9"><path d="M1.2,4.6 L2.8,3.6 L4.2,5.4 L7.6,0.9 L8.6,1.7 L4.3,8.2 Z" fill="#111" stroke="#111" stroke-width="0.6" stroke-linejoin="round"/></svg>
<div class="a" style="left:105px;top:259px;width:16px;height:16px;background:#8d82f4;border:1px solid #555"></div>
<div class="t" style="left:127px;top:259px;font-weight:bold;font-size:15px">industrial</div>
<div class="a" style="left:85px;top:279px;width:11px;height:11px;background:#fff;border:1px solid #a3a29c"></div>
<svg class="i" style="left:86px;top:280px" width="9" height="9" viewBox="0 0 9 9"><path d="M1.2,4.6 L2.8,3.6 L4.2,5.4 L7.6,0.9 L8.6,1.7 L4.3,8.2 Z" fill="#111" stroke="#111" stroke-width="0.6" stroke-linejoin="round"/></svg>
<div class="a" style="left:105px;top:277px;width:16px;height:16px;background:#5f9e8c;border:1px solid #555"></div>
<div class="t" style="left:127px;top:277px;font-weight:bold;font-size:15px">noisy_roads</div>
<div class="a" style="left:85px;top:297px;width:11px;height:11px;background:#fff;border:1px solid #a3a29c"></div>
<svg class="i" style="left:86px;top:298px" width="9" height="9" viewBox="0 0 9 9"><path d="M1.2,4.6 L2.8,3.6 L4.2,5.4 L7.6,0.9 L8.6,1.7 L4.3,8.2 Z" fill="#111" stroke="#111" stroke-width="0.6" stroke-linejoin="round"/></svg>
<div class="a" style="left:105px;top:295px;width:16px;height:16px;background:#d42a8c;border:1px solid #555"></div>
<div class="t" style="left:127px;top:295px;font-weight:bold;font-size:15px">landuse</div>
<div class="a" style="left:85px;top:315px;width:11px;height:11px;background:#fff;border:1px solid #a3a29c"></div>
<svg class="i" style="left:86px;top:316px" width="9" height="9" viewBox="0 0 9 9"><path d="M1.2,4.6 L2.8,3.6 L4.2,5.4 L7.6,0.9 L8.6,1.7 L4.3,8.2 Z" fill="#111" stroke="#111" stroke-width="0.6" stroke-linejoin="round"/></svg>
<div class="a" style="left:105px;top:313px;width:16px;height:16px;background:#e88b30;border:1px solid #555"></div>
<div class="t" style="left:127px;top:313px;font-weight:bold;font-size:15px">pecs</div>
<div class="a" style="left:85px;top:333px;width:11px;height:11px;background:#fff;border:1px solid #a3a29c"></div>
<svg class="i" style="left:86px;top:334px" width="9" height="9" viewBox="0 0 9 9"><path d="M1.2,4.6 L2.8,3.6 L4.2,5.4 L7.6,0.9 L8.6,1.7 L4.3,8.2 Z" fill="#111" stroke="#111" stroke-width="0.6" stroke-linejoin="round"/></svg>
<div class="a" style="left:105px;top:331px;width:16px;height:16px;background:#a3dba5;border:1px solid #555"></div>
<div class="t" style="left:127px;top:331px;font-weight:bold;font-size:15px">adm1</div>
<div class="a" style="left:58px;top:680px;width:104px;height:25px;background:#e6e5e2;border:1px solid #aeada7;border-top:none"></div>
<div class="t" style="left:65px;top:684px;">Browser Panel</div>
<div class="a" style="left:161px;top:678px;width:96px;height:29px;background:#fff;border:1px solid #aeada7;border-top:none"></div>
<div class="t" style="left:169px;top:685px;">Layers Panel</div>
<div class="a" style="left:330px;top:410px;width:1px;height:12px;background:repeating-linear-gradient(#999 0 1px,transparent 1px 2px)"></div>
<div class="a" style="left:1090px;top:127px;width:1px;height:580px;background:#b4b3ad"></div>
<div class="a" style="left:1092px;top:410px;width:1px;height:12px;background:repeating-linear-gradient(#999 0 1px,transparent 1px 2px)"></div>
<div class="a" style="left:333px;top:126px;width:757px;height:580px;background:#fdfdfc;border-left:1px solid #a9a8a1;border-top:2px solid #a9a8a1"></div>
<div class="a" style="left:334px;top:128px;width:755px;height:577px;background:#d5d2cf"></div>
<div id="map" class="a" style="left:335px;top:129px;width:754px;height:576px;background:#a3dba5;overflow:hidden"><!--MAP--><svg width="754" height="576" viewBox="0 0 754 576" style="left:0;top:0">
<rect width="754" height="576" fill="#a3dba5"/>
<path d="M525.0,-2.0 L497.3,1.0 L470.1,8.7 L457.5,20.3 L454.6,20.0 L451.7,23.3 L439.1,21.3 L430.4,31.0 L429.4,37.8 L421.6,48.5 L395.4,51.4 L391.6,57.2 L389.6,61.1 L382.8,66.0 L377.0,72.7 L341.3,79.5 L331.6,82.4 L321.9,80.5 L312.2,67.9 L304.4,67.9 L292.8,64.0 L288.9,62.1 L279.2,60.1 L267.6,62.1 L255.9,55.3 L252.0,56.2 L234.6,67.9 L219.0,75.7 L208.4,77.6 L206.4,75.7 L195.8,73.3 L188.0,74.7 L182.3,78.4 L172.2,88.5 L174.2,92.6 L171.2,97.6 L170.2,105.7 L166.1,113.8 L165.1,118.9 L175.2,128.0 L182.3,138.1 L192.4,144.1 L195.4,150.2 L194.4,162.3 L189.4,166.4 L148.4,160.1 L117.4,161.4 L116.4,156.6 L105.7,150.8 L98.0,152.3 L93.1,164.3 L95.1,177.9 L90.2,185.7 L90.2,220.6 L92.1,224.5 L98.9,228.4 L100.9,242.9 L122.2,247.8 L126.1,271.1 L122.4,295.3 L114.3,299.3 L96.0,305.0 L89.6,319.5 L105.0,341.0 L131.7,355.1 L134.0,374.6 L159.0,385.0 L195.2,400.6 L206.5,402.2 L211.3,407.0 L213.0,428.0 L214.2,452.0 L216.0,474.0 L217.8,479.5 L224.2,482.2 L223.3,486.8 L222.4,510.6 L225.2,532.6 L229.7,545.5 L231.6,552.8 L235.2,551.9 L237.1,545.5 L245.3,544.6 L249.0,549.1 L258.2,552.8 L278.3,554.6 L280.1,562.9 L282.0,577.0 L297.0,577.0 L305.0,551.0 L325.0,521.0 L365.0,509.0 L399.7,484.8 L408.7,482.6 L391.9,453.5 L385.3,447.5 L393.4,442.7 L401.5,431.3 L414.4,424.9 L417.7,418.4 L412.8,403.8 L425.0,381.0 L455.0,351.0 L463.4,340.2 L461.4,318.0 L460.4,305.8 L471.5,291.7 L464.4,278.6 L472.5,271.5 L466.4,257.4 L468.4,245.2 L471.5,233.1 L474.5,228.1 L483.0,211.0 L487.0,201.0 L515.0,209.0 L537.6,201.4 L542.3,220.2 L565.0,214.0 L584.5,208.4 L585.7,213.1 L591.9,217.8 L602.4,226.7 L632.4,212.9 L632.4,209.7 L637.2,203.2 L633.2,195.1 L621.0,170.9 L611.3,156.3 L599.2,123.9 L596.8,118.3 L583.4,104.8 L582.5,98.0 L580.5,96.0 L579.6,88.3 L576.6,82.4 L565.0,53.3 L557.5,35.9 L545.0,11.0 L535.0,-2.0 Z" fill="#e88b30" stroke="#1a1a1a" stroke-width="1"/>
<path d="M255.0,-12.0 C260.0,-11.3 275.8,-9.2 285.0,-8.0 C294.2,-6.8 304.0,-6.2 310.0,-5.0 C316.0,-3.8 318.1,-2.6 321.0,-1.0 C323.9,0.6 324.8,3.1 327.5,4.7 C330.2,6.3 335.3,6.4 337.2,8.7 C339.1,11.0 338.3,14.6 338.9,18.4 C339.4,22.2 340.5,27.9 340.5,31.4 C340.5,34.9 338.6,37.4 338.9,39.5 C339.2,41.6 340.5,44.5 342.1,44.3 C343.7,44.2 346.7,38.6 348.6,38.6 C350.5,38.6 352.3,42.0 353.4,44.3 C354.5,46.6 355.0,49.7 355.0,52.4 C355.0,55.1 353.1,57.5 353.4,60.5 C353.7,63.5 356.2,67.0 356.7,70.2 C357.3,73.4 356.2,75.6 356.7,79.9 C357.2,84.2 358.6,92.0 359.9,96.1 C361.2,100.1 362.3,101.0 364.7,104.2 C367.1,107.4 372.0,111.7 374.4,115.5 C376.8,119.3 377.3,118.3 379.0,127.0 C380.7,135.7 382.9,155.4 384.7,167.6 C386.5,179.8 388.0,189.4 389.6,200.0 C391.2,210.6 393.6,225.8 394.4,231.0" fill="none" stroke="#1e2a24" stroke-width="15" stroke-linecap="round" stroke-linejoin="round"/>
<path d="M255.0,-12.0 C260.0,-11.3 275.8,-9.2 285.0,-8.0 C294.2,-6.8 304.0,-6.2 310.0,-5.0 C316.0,-3.8 318.1,-2.6 321.0,-1.0 C323.9,0.6 324.8,3.1 327.5,4.7 C330.2,6.3 335.3,6.4 337.2,8.7 C339.1,11.0 338.3,14.6 338.9,18.4 C339.4,22.2 340.5,27.9 340.5,31.4 C340.5,34.9 338.6,37.4 338.9,39.5 C339.2,41.6 340.5,44.5 342.1,44.3 C343.7,44.2 346.7,38.6 348.6,38.6 C350.5,38.6 352.3,42.0 353.4,44.3 C354.5,46.6 355.0,49.7 355.0,52.4 C355.0,55.1 353.1,57.5 353.4,60.5 C353.7,63.5 356.2,67.0 356.7,70.2 C357.3,73.4 356.2,75.6 356.7,79.9 C357.2,84.2 358.6,92.0 359.9,96.1 C361.2,100.1 362.3,101.0 364.7,104.2 C367.1,107.4 372.0,111.7 374.4,115.5 C376.8,119.3 377.3,118.3 379.0,127.0 C380.7,135.7 382.9,155.4 384.7,167.6 C386.5,179.8 388.0,189.4 389.6,200.0 C391.2,210.6 393.6,225.8 394.4,231.0" fill="none" stroke="#6aa896" stroke-width="13" stroke-linecap="round" stroke-linejoin="round"/>
<path d="M255.0,-12.0 C260.0,-11.3 275.8,-9.2 285.0,-8.0 M285.0,-8.0 C294.2,-6.8 304.0,-6.2 310.0,-5.0" fill="none" stroke="#1e2a24" stroke-width="14.6" stroke-linecap="round" opacity="0.9"/>
<path d="M255.0,-12.0 C260.0,-11.3 275.8,-9.2 285.0,-8.0 M285.0,-8.0 C294.2,-6.8 304.0,-6.2 310.0,-5.0" fill="none" stroke="#6aa896" stroke-width="12.6" stroke-linecap="round"/>
<path d="M310.0,-5.0 C316.0,-3.8 318.1,-2.6 321.0,-1.0 M321.0,-1.0 C323.9,0.6 324.8,3.1 327.5,4.7" fill="none" stroke="#1e2a24" stroke-width="14.6" stroke-linecap="round" opacity="0.9"/>
<path d="M310.0,-5.0 C316.0,-3.8 318.1,-2.6 321.0,-1.0 M321.0,-1.0 C323.9,0.6 324.8,3.1 327.5,4.7" fill="none" stroke="#6aa896" stroke-width="12.6" stroke-linecap="round"/>
<path d="M327.5,4.7 C330.2,6.3 335.3,6.4 337.2,8.7 M337.2,8.7 C339.1,11.0 338.3,14.6 338.9,18.4" fill="none" stroke="#1e2a24" stroke-width="14.6" stroke-linecap="round" opacity="0.9"/>
<path d="M327.5,4.7 C330.2,6.3 335.3,6.4 337.2,8.7 M337.2,8.7 C339.1,11.0 338.3,14.6 338.9,18.4" fill="none" stroke="#6aa896" stroke-width="12.6" stroke-linecap="round"/>
<path d="M338.9,18.4 C339.4,22.2 340.5,27.9 340.5,31.4 M340.5,31.4 C340.5,34.9 338.6,37.4 338.9,39.5" fill="none" stroke="#1e2a24" stroke-width="14.6" stroke-linecap="round" opacity="0.9"/>
<path d="M338.9,18.4 C339.4,22.2 340.5,27.9 340.5,31.4 M340.5,31.4 C340.5,34.9 338.6,37.4 338.9,39.5" fill="none" stroke="#6aa896" stroke-width="12.6" stroke-linecap="round"/>
<path d="M338.9,39.5 C339.2,41.6 340.5,44.5 342.1,44.3 M342.1,44.3 C343.7,44.2 346.7,38.6 348.6,38.6" fill="none" stroke="#1e2a24" stroke-width="14.6" stroke-linecap="round" opacity="0.9"/>
<path d="M338.9,39.5 C339.2,41.6 340.5,44.5 342.1,44.3 M342.1,44.3 C343.7,44.2 346.7,38.6 348.6,38.6" fill="none" stroke="#6aa896" stroke-width="12.6" stroke-linecap="round"/>
<path d="M348.6,38.6 C350.5,38.6 352.3,42.0 353.4,44.3 M353.4,44.3 C354.5,46.6 355.0,49.7 355.0,52.4" fill="none" stroke="#1e2a24" stroke-width="14.6" stroke-linecap="round" opacity="0.9"/>
<path d="M348.6,38.6 C350.5,38.6 352.3,42.0 353.4,44.3 M353.4,44.3 C354.5,46.6 355.0,49.7 355.0,52.4" fill="none" stroke="#6aa896" stroke-width="12.6" stroke-linecap="round"/>
<path d="M355.0,52.4 C355.0,55.1 353.1,57.5 353.4,60.5 M353.4,60.5 C353.7,63.5 356.2,67.0 356.7,70.2" fill="none" stroke="#1e2a24" stroke-width="14.6" stroke-linecap="round" opacity="0.9"/>
<path d="M355.0,52.4 C355.0,55.1 353.1,57.5 353.4,60.5 M353.4,60.5 C353.7,63.5 356.2,67.0 356.7,70.2" fill="none" stroke="#6aa896" stroke-width="12.6" stroke-linecap="round"/>
<path d="M356.7,70.2 C357.3,73.4 356.2,75.6 356.7,79.9 M356.7,79.9 C357.2,84.2 358.6,92.0 359.9,96.1" fill="none" stroke="#1e2a24" stroke-width="14.6" stroke-linecap="round" opacity="0.9"/>
<path d="M356.7,70.2 C357.3,73.4 356.2,75.6 356.7,79.9 M356.7,79.9 C357.2,84.2 358.6,92.0 359.9,96.1" fill="none" stroke="#6aa896" stroke-width="12.6" stroke-linecap="round"/>
<path d="M359.9,96.1 C361.2,100.1 362.3,101.0 364.7,104.2 M364.7,104.2 C367.1,107.4 372.0,111.7 374.4,115.5" fill="none" stroke="#1e2a24" stroke-width="14.6" stroke-linecap="round" opacity="0.9"/>
<path d="M359.9,96.1 C361.2,100.1 362.3,101.0 364.7,104.2 M364.7,104.2 C367.1,107.4 372.0,111.7 374.4,115.5" fill="none" stroke="#6aa896" stroke-width="12.6" stroke-linecap="round"/>
<path d="M374.4,115.5 C376.8,119.3 377.3,118.3 379.0,127.0 M379.0,127.0 C380.7,135.7 382.9,155.4 384.7,167.6" fill="none" stroke="#1e2a24" stroke-width="14.6" stroke-linecap="round" opacity="0.9"/>
<path d="M374.4,115.5 C376.8,119.3 377.3,118.3 379.0,127.0 M379.0,127.0 C380.7,135.7 382.9,155.4 384.7,167.6" fill="none" stroke="#6aa896" stroke-width="12.6" stroke-linecap="round"/>
<path d="M384.7,167.6 C386.5,179.8 388.0,189.4 389.6,200.0 M389.6,200.0 C391.2,210.6 393.6,225.8 394.4,231.0" fill="none" stroke="#1e2a24" stroke-width="14.6" stroke-linecap="round" opacity="0.9"/>
<path d="M384.7,167.6 C386.5,179.8 388.0,189.4 389.6,200.0 M389.6,200.0 C391.2,210.6 393.6,225.8 394.4,231.0" fill="none" stroke="#6aa896" stroke-width="12.6" stroke-linecap="round"/>
<path d="M439.0,227.5 C441.4,225.1 448.9,217.3 453.5,213.0 C458.1,208.7 463.1,205.4 466.5,201.6 C469.9,197.8 469.7,192.8 474.0,190.0 C478.3,187.2 486.1,186.6 492.4,184.6 C498.7,182.6 504.5,180.6 511.8,178.0 C519.1,175.4 528.0,171.5 536.0,169.0 C544.0,166.5 554.5,163.8 560.0,163.0 C565.5,162.2 566.4,163.5 569.3,164.0 C572.2,164.5 573.4,164.8 577.4,166.0 C581.4,167.2 588.6,169.8 593.5,170.9 C598.4,172.0 602.2,174.4 606.5,172.5 C610.8,170.6 615.6,164.4 619.4,159.5 C623.1,154.6 624.5,150.3 629.0,143.0 C633.5,135.7 641.6,122.2 646.5,115.4 C651.4,108.6 652.3,106.1 658.1,101.9 C663.9,97.7 672.7,93.3 681.4,90.2 C690.1,87.1 702.6,85.4 710.5,83.4 C718.4,81.4 724.1,80.6 729.0,78.0 C733.9,75.4 736.8,72.2 740.0,68.0 C743.2,63.8 745.0,58.2 748.0,53.0 C751.0,47.8 756.3,39.7 758.0,37.0" fill="none" stroke="#1e2a24" stroke-width="14" stroke-linecap="round" stroke-linejoin="round"/>
<path d="M439.0,227.5 C441.4,225.1 448.9,217.3 453.5,213.0 C458.1,208.7 463.1,205.4 466.5,201.6 C469.9,197.8 469.7,192.8 474.0,190.0 C478.3,187.2 486.1,186.6 492.4,184.6 C498.7,182.6 504.5,180.6 511.8,178.0 C519.1,175.4 528.0,171.5 536.0,169.0 C544.0,166.5 554.5,163.8 560.0,163.0 C565.5,162.2 566.4,163.5 569.3,164.0 C572.2,164.5 573.4,164.8 577.4,166.0 C581.4,167.2 588.6,169.8 593.5,170.9 C598.4,172.0 602.2,174.4 606.5,172.5 C610.8,170.6 615.6,164.4 619.4,159.5 C623.1,154.6 624.5,150.3 629.0,143.0 C633.5,135.7 641.6,122.2 646.5,115.4 C651.4,108.6 652.3,106.1 658.1,101.9 C663.9,97.7 672.7,93.3 681.4,90.2 C690.1,87.1 702.6,85.4 710.5,83.4 C718.4,81.4 724.1,80.6 729.0,78.0 C733.9,75.4 736.8,72.2 740.0,68.0 C743.2,63.8 745.0,58.2 748.0,53.0 C751.0,47.8 756.3,39.7 758.0,37.0" fill="none" stroke="#6aa896" stroke-width="12" stroke-linecap="round" stroke-linejoin="round"/>
<path d="M439.0,227.5 C441.4,225.1 448.9,217.3 453.5,213.0 M453.5,213.0 C458.1,208.7 463.1,205.4 466.5,201.6" fill="none" stroke="#1e2a24" stroke-width="13.6" stroke-linecap="round" opacity="0.9"/>
<path d="M439.0,227.5 C441.4,225.1 448.9,217.3 453.5,213.0 M453.5,213.0 C458.1,208.7 463.1,205.4 466.5,201.6" fill="none" stroke="#6aa896" stroke-width="11.6" stroke-linecap="round"/>
<path d="M466.5,201.6 C469.9,197.8 469.7,192.8 474.0,190.0 M474.0,190.0 C478.3,187.2 486.1,186.6 492.4,184.6" fill="none" stroke="#1e2a24" stroke-width="13.6" stroke-linecap="round" opacity="0.9"/>
<path d="M466.5,201.6 C469.9,197.8 469.7,192.8 474.0,190.0 M474.0,190.0 C478.3,187.2 486.1,186.6 492.4,184.6" fill="none" stroke="#6aa896" stroke-width="11.6" stroke-linecap="round"/>
<path d="M492.4,184.6 C498.7,182.6 504.5,180.6 511.8,178.0 M511.8,178.0 C519.1,175.4 528.0,171.5 536.0,169.0" fill="none" stroke="#1e2a24" stroke-width="13.6" stroke-linecap="round" opacity="0.9"/>
<path d="M492.4,184.6 C498.7,182.6 504.5,180.6 511.8,178.0 M511.8,178.0 C519.1,175.4 528.0,171.5 536.0,169.0" fill="none" stroke="#6aa896" stroke-width="11.6" stroke-linecap="round"/>
<path d="M536.0,169.0 C544.0,166.5 554.5,163.8 560.0,163.0 M560.0,163.0 C565.5,162.2 566.4,163.5 569.3,164.0" fill="none" stroke="#1e2a24" stroke-width="13.6" stroke-linecap="round" opacity="0.9"/>
<path d="M536.0,169.0 C544.0,166.5 554.5,163.8 560.0,163.0 M560.0,163.0 C565.5,162.2 566.4,163.5 569.3,164.0" fill="none" stroke="#6aa896" stroke-width="11.6" stroke-linecap="round"/>
<path d="M569.3,164.0 C572.2,164.5 573.4,164.8 577.4,166.0 M577.4,166.0 C581.4,167.2 588.6,169.8 593.5,170.9" fill="none" stroke="#1e2a24" stroke-width="13.6" stroke-linecap="round" opacity="0.9"/>
<path d="M569.3,164.0 C572.2,164.5 573.4,164.8 577.4,166.0 M577.4,166.0 C581.4,167.2 588.6,169.8 593.5,170.9" fill="none" stroke="#6aa896" stroke-width="11.6" stroke-linecap="round"/>
<path d="M593.5,170.9 C598.4,172.0 602.2,174.4 606.5,172.5 M606.5,172.5 C610.8,170.6 615.6,164.4 619.4,159.5" fill="none" stroke="#1e2a24" stroke-width="13.6" stroke-linecap="round" opacity="0.9"/>
<path d="M593.5,170.9 C598.4,172.0 602.2,174.4 606.5,172.5 M606.5,172.5 C610.8,170.6 615.6,164.4 619.4,159.5" fill="none" stroke="#6aa896" stroke-width="11.6" stroke-linecap="round"/>
<path d="M619.4,159.5 C623.1,154.6 624.5,150.3 629.0,143.0 M629.0,143.0 C633.5,135.7 641.6,122.2 646.5,115.4" fill="none" stroke="#1e2a24" stroke-width="13.6" stroke-linecap="round" opacity="0.9"/>
<path d="M619.4,159.5 C623.1,154.6 624.5,150.3 629.0,143.0 M629.0,143.0 C633.5,135.7 641.6,122.2 646.5,115.4" fill="none" stroke="#6aa896" stroke-width="11.6" stroke-linecap="round"/>
<path d="M646.5,115.4 C651.4,108.6 652.3,106.1 658.1,101.9 M658.1,101.9 C663.9,97.7 672.7,93.3 681.4,90.2" fill="none" stroke="#1e2a24" stroke-width="13.6" stroke-linecap="round" opacity="0.9"/>
<path d="M646.5,115.4 C651.4,108.6 652.3,106.1 658.1,101.9 M658.1,101.9 C663.9,97.7 672.7,93.3 681.4,90.2" fill="none" stroke="#6aa896" stroke-width="11.6" stroke-linecap="round"/>
<path d="M681.4,90.2 C690.1,87.1 702.6,85.4 710.5,83.4 M710.5,83.4 C718.4,81.4 724.1,80.6 729.0,78.0" fill="none" stroke="#1e2a24" stroke-width="13.6" stroke-linecap="round" opacity="0.9"/>
<path d="M681.4,90.2 C690.1,87.1 702.6,85.4 710.5,83.4 M710.5,83.4 C718.4,81.4 724.1,80.6 729.0,78.0" fill="none" stroke="#6aa896" stroke-width="11.6" stroke-linecap="round"/>
<path d="M729.0,78.0 C733.9,75.4 736.8,72.2 740.0,68.0 M740.0,68.0 C743.2,63.8 745.0,58.2 748.0,53.0" fill="none" stroke="#1e2a24" stroke-width="13.6" stroke-linecap="round" opacity="0.9"/>
<path d="M729.0,78.0 C733.9,75.4 736.8,72.2 740.0,68.0 M740.0,68.0 C743.2,63.8 745.0,58.2 748.0,53.0" fill="none" stroke="#6aa896" stroke-width="11.6" stroke-linecap="round"/>
<path d="M748.0,53.0 C751.0,47.8 756.3,39.7 758.0,37.0" fill="none" stroke="#1e2a24" stroke-width="13.6" stroke-linecap="round" opacity="0.9"/>
<path d="M748.0,53.0 C751.0,47.8 756.3,39.7 758.0,37.0" fill="none" stroke="#6aa896" stroke-width="11.6" stroke-linecap="round"/>
<path d="M304.0,331.0 C304.3,339.0 305.3,367.7 306.0,379.0 C306.7,390.3 307.5,387.0 308.0,399.0 C308.5,411.0 308.5,437.8 309.0,451.0 C309.5,464.2 310.0,467.5 311.0,478.0 C312.0,488.5 314.7,504.3 315.0,514.0 C315.3,523.7 313.9,524.8 313.0,536.0 C312.1,547.2 310.1,573.5 309.5,581.0" fill="none" stroke="#1e2a24" stroke-width="13" stroke-linecap="round" stroke-linejoin="round"/>
<path d="M304.0,331.0 C304.3,339.0 305.3,367.7 306.0,379.0 C306.7,390.3 307.5,387.0 308.0,399.0 C308.5,411.0 308.5,437.8 309.0,451.0 C309.5,464.2 310.0,467.5 311.0,478.0 C312.0,488.5 314.7,504.3 315.0,514.0 C315.3,523.7 313.9,524.8 313.0,536.0 C312.1,547.2 310.1,573.5 309.5,581.0" fill="none" stroke="#6aa896" stroke-width="11" stroke-linecap="round" stroke-linejoin="round"/>
<path d="M304.0,331.0 C304.3,339.0 305.3,367.7 306.0,379.0 M306.0,379.0 C306.7,390.3 307.5,387.0 308.0,399.0" fill="none" stroke="#1e2a24" stroke-width="12.6" stroke-linecap="round" opacity="0.9"/>
<path d="M304.0,331.0 C304.3,339.0 305.3,367.7 306.0,379.0 M306.0,379.0 C306.7,390.3 307.5,387.0 308.0,399.0" fill="none" stroke="#6aa896" stroke-width="10.6" stroke-linecap="round"/>
<path d="M308.0,399.0 C308.5,411.0 308.5,437.8 309.0,451.0 M309.0,451.0 C309.5,464.2 310.0,467.5 311.0,478.0" fill="none" stroke="#1e2a24" stroke-width="12.6" stroke-linecap="round" opacity="0.9"/>
<path d="M308.0,399.0 C308.5,411.0 308.5,437.8 309.0,451.0 M309.0,451.0 C309.5,464.2 310.0,467.5 311.0,478.0" fill="none" stroke="#6aa896" stroke-width="10.6" stroke-linecap="round"/>
<path d="M311.0,478.0 C312.0,488.5 314.7,504.3 315.0,514.0 M315.0,514.0 C315.3,523.7 313.9,524.8 313.0,536.0" fill="none" stroke="#1e2a24" stroke-width="12.6" stroke-linecap="round" opacity="0.9"/>
<path d="M311.0,478.0 C312.0,488.5 314.7,504.3 315.0,514.0 M315.0,514.0 C315.3,523.7 313.9,524.8 313.0,536.0" fill="none" stroke="#6aa896" stroke-width="10.6" stroke-linecap="round"/>
<path d="M313.0,536.0 C312.1,547.2 310.1,573.5 309.5,581.0" fill="none" stroke="#1e2a24" stroke-width="12.6" stroke-linecap="round" opacity="0.9"/>
<path d="M313.0,536.0 C312.1,547.2 310.1,573.5 309.5,581.0" fill="none" stroke="#6aa896" stroke-width="10.6" stroke-linecap="round"/>
<path d="M239.8,483.2 C243.2,485.3 252.0,492.0 260.0,496.0 C267.9,500.0 278.9,504.2 287.5,507.0 C296.1,509.8 303.7,511.4 311.3,512.5 C318.9,513.6 326.0,513.7 333.3,513.4 C340.6,513.1 343.9,514.0 355.0,510.5 C366.1,507.0 388.5,496.3 399.7,492.6 C410.9,488.9 414.6,488.4 422.1,488.2 C429.6,488.0 437.1,490.6 444.5,491.5 C451.9,492.4 458.6,495.3 466.8,493.8 C475.0,492.3 484.0,486.7 493.7,482.6 C503.4,478.5 512.5,471.2 525.0,469.2 C537.5,467.3 553.2,466.5 568.7,470.9 C584.2,475.3 603.0,487.8 618.1,495.7 C633.2,503.6 645.5,507.7 659.3,518.3 C673.0,528.9 691.6,548.7 700.6,559.5 C709.5,570.3 710.9,579.1 713.0,583.0" fill="none" stroke="#1e2a24" stroke-width="14" stroke-linecap="round" stroke-linejoin="round"/>
<path d="M239.8,483.2 C243.2,485.3 252.0,492.0 260.0,496.0 C267.9,500.0 278.9,504.2 287.5,507.0 C296.1,509.8 303.7,511.4 311.3,512.5 C318.9,513.6 326.0,513.7 333.3,513.4 C340.6,513.1 343.9,514.0 355.0,510.5 C366.1,507.0 388.5,496.3 399.7,492.6 C410.9,488.9 414.6,488.4 422.1,488.2 C429.6,488.0 437.1,490.6 444.5,491.5 C451.9,492.4 458.6,495.3 466.8,493.8 C475.0,492.3 484.0,486.7 493.7,482.6 C503.4,478.5 512.5,471.2 525.0,469.2 C537.5,467.3 553.2,466.5 568.7,470.9 C584.2,475.3 603.0,487.8 618.1,495.7 C633.2,503.6 645.5,507.7 659.3,518.3 C673.0,528.9 691.6,548.7 700.6,559.5 C709.5,570.3 710.9,579.1 713.0,583.0" fill="none" stroke="#6aa896" stroke-width="12" stroke-linecap="round" stroke-linejoin="round"/>
<path d="M239.8,483.2 C243.2,485.3 252.0,492.0 260.0,496.0 M260.0,496.0 C267.9,500.0 278.9,504.2 287.5,507.0" fill="none" stroke="#1e2a24" stroke-width="13.6" stroke-linecap="round" opacity="0.9"/>
<path d="M239.8,483.2 C243.2,485.3 252.0,492.0 260.0,496.0 M260.0,496.0 C267.9,500.0 278.9,504.2 287.5,507.0" fill="none" stroke="#6aa896" stroke-width="11.6" stroke-linecap="round"/>
<path d="M287.5,507.0 C296.1,509.8 303.7,511.4 311.3,512.5 M311.3,512.5 C318.9,513.6 326.0,513.7 333.3,513.4" fill="none" stroke="#1e2a24" stroke-width="13.6" stroke-linecap="round" opacity="0.9"/>
<path d="M287.5,507.0 C296.1,509.8 303.7,511.4 311.3,512.5 M311.3,512.5 C318.9,513.6 326.0,513.7 333.3,513.4" fill="none" stroke="#6aa896" stroke-width="11.6" stroke-linecap="round"/>
<path d="M333.3,513.4 C340.6,513.1 343.9,514.0 355.0,510.5 M355.0,510.5 C366.1,507.0 388.5,496.3 399.7,492.6" fill="none" stroke="#1e2a24" stroke-width="13.6" stroke-linecap="round" opacity="0.9"/>
<path d="M333.3,513.4 C340.6,513.1 343.9,514.0 355.0,510.5 M355.0,510.5 C366.1,507.0 388.5,496.3 399.7,492.6" fill="none" stroke="#6aa896" stroke-width="11.6" stroke-linecap="round"/>
<path d="M399.7,492.6 C410.9,488.9 414.6,488.4 422.1,488.2 M422.1,488.2 C429.6,488.0 437.1,490.6 444.5,491.5" fill="none" stroke="#1e2a24" stroke-width="13.6" stroke-linecap="round" opacity="0.9"/>
<path d="M399.7,492.6 C410.9,488.9 414.6,488.4 422.1,488.2 M422.1,488.2 C429.6,488.0 437.1,490.6 444.5,491.5" fill="none" stroke="#6aa896" stroke-width="11.6" stroke-linecap="round"/>
<path d="M444.5,491.5 C451.9,492.4 458.6,495.3 466.8,493.8 M466.8,493.8 C475.0,492.3 484.0,486.7 493.7,482.6" fill="none" stroke="#1e2a24" stroke-width="13.6" stroke-linecap="round" opacity="0.9"/>
<path d="M444.5,491.5 C451.9,492.4 458.6,495.3 466.8,493.8 M466.8,493.8 C475.0,492.3 484.0,486.7 493.7,482.6" fill="none" stroke="#6aa896" stroke-width="11.6" stroke-linecap="round"/>
<path d="M493.7,482.6 C503.4,478.5 512.5,471.2 525.0,469.2 M525.0,469.2 C537.5,467.3 553.2,466.5 568.7,470.9" fill="none" stroke="#1e2a24" stroke-width="13.6" stroke-linecap="round" opacity="0.9"/>
<path d="M493.7,482.6 C503.4,478.5 512.5,471.2 525.0,469.2 M525.0,469.2 C537.5,467.3 553.2,466.5 568.7,470.9" fill="none" stroke="#6aa896" stroke-width="11.6" stroke-linecap="round"/>
<path d="M568.7,470.9 C584.2,475.3 603.0,487.8 618.1,495.7 M618.1,495.7 C633.2,503.6 645.5,507.7 659.3,518.3" fill="none" stroke="#1e2a24" stroke-width="13.6" stroke-linecap="round" opacity="0.9"/>
<path d="M568.7,470.9 C584.2,475.3 603.0,487.8 618.1,495.7 M618.1,495.7 C633.2,503.6 645.5,507.7 659.3,518.3" fill="none" stroke="#6aa896" stroke-width="11.6" stroke-linecap="round"/>
<path d="M659.3,518.3 C673.0,528.9 691.6,548.7 700.6,559.5 M700.6,559.5 C709.5,570.3 710.9,579.1 713.0,583.0" fill="none" stroke="#1e2a24" stroke-width="13.6" stroke-linecap="round" opacity="0.9"/>
<path d="M659.3,518.3 C673.0,528.9 691.6,548.7 700.6,559.5 M700.6,559.5 C709.5,570.3 710.9,579.1 713.0,583.0" fill="none" stroke="#6aa896" stroke-width="11.6" stroke-linecap="round"/>
<path d="M414.0,368.0 C413.0,371.0 409.5,378.7 408.0,386.0 C406.5,393.3 405.1,403.4 405.0,412.0 C404.9,420.6 405.1,429.4 407.6,437.8 C410.1,446.2 415.6,455.3 419.9,462.4 C424.2,469.5 429.2,475.4 433.3,480.3 C437.4,485.1 442.6,489.6 444.5,491.5" fill="none" stroke="#1e2a24" stroke-width="13" stroke-linecap="round" stroke-linejoin="round"/>
<path d="M414.0,368.0 C413.0,371.0 409.5,378.7 408.0,386.0 C406.5,393.3 405.1,403.4 405.0,412.0 C404.9,420.6 405.1,429.4 407.6,437.8 C410.1,446.2 415.6,455.3 419.9,462.4 C424.2,469.5 429.2,475.4 433.3,480.3 C437.4,485.1 442.6,489.6 444.5,491.5" fill="none" stroke="#6aa896" stroke-width="11" stroke-linecap="round" stroke-linejoin="round"/>
<path d="M414.0,368.0 C413.0,371.0 409.5,378.7 408.0,386.0 M408.0,386.0 C406.5,393.3 405.1,403.4 405.0,412.0" fill="none" stroke="#1e2a24" stroke-width="12.6" stroke-linecap="round" opacity="0.9"/>
<path d="M414.0,368.0 C413.0,371.0 409.5,378.7 408.0,386.0 M408.0,386.0 C406.5,393.3 405.1,403.4 405.0,412.0" fill="none" stroke="#6aa896" stroke-width="10.6" stroke-linecap="round"/>
<path d="M405.0,412.0 C404.9,420.6 405.1,429.4 407.6,437.8 M407.6,437.8 C410.1,446.2 415.6,455.3 419.9,462.4" fill="none" stroke="#1e2a24" stroke-width="12.6" stroke-linecap="round" opacity="0.9"/>
<path d="M405.0,412.0 C404.9,420.6 405.1,429.4 407.6,437.8 M407.6,437.8 C410.1,446.2 415.6,455.3 419.9,462.4" fill="none" stroke="#6aa896" stroke-width="10.6" stroke-linecap="round"/>
<path d="M419.9,462.4 C424.2,469.5 429.2,475.4 433.3,480.3 M433.3,480.3 C437.4,485.1 442.6,489.6 444.5,491.5" fill="none" stroke="#1e2a24" stroke-width="12.6" stroke-linecap="round" opacity="0.9"/>
<path d="M419.9,462.4 C424.2,469.5 429.2,475.4 433.3,480.3 M433.3,480.3 C437.4,485.1 442.6,489.6 444.5,491.5" fill="none" stroke="#6aa896" stroke-width="10.6" stroke-linecap="round"/>
<path d="M414.0,368.0 C419.2,368.3 431.6,367.9 445.0,369.9 C458.4,371.9 480.8,374.7 494.5,380.2 C508.2,385.7 515.0,394.6 527.4,402.9 C539.8,411.1 552.9,416.0 568.7,429.7 C584.5,443.4 605.7,469.8 622.2,485.3 C638.7,500.7 653.2,510.0 667.6,522.4 C682.0,534.8 697.6,549.4 708.8,559.5 C720.0,569.6 730.6,579.1 735.0,583.0" fill="none" stroke="#1e2a24" stroke-width="13" stroke-linecap="round" stroke-linejoin="round"/>
<path d="M414.0,368.0 C419.2,368.3 431.6,367.9 445.0,369.9 C458.4,371.9 480.8,374.7 494.5,380.2 C508.2,385.7 515.0,394.6 527.4,402.9 C539.8,411.1 552.9,416.0 568.7,429.7 C584.5,443.4 605.7,469.8 622.2,485.3 C638.7,500.7 653.2,510.0 667.6,522.4 C682.0,534.8 697.6,549.4 708.8,559.5 C720.0,569.6 730.6,579.1 735.0,583.0" fill="none" stroke="#6aa896" stroke-width="11" stroke-linecap="round" stroke-linejoin="round"/>
<path d="M414.0,368.0 C419.2,368.3 431.6,367.9 445.0,369.9 M445.0,369.9 C458.4,371.9 480.8,374.7 494.5,380.2" fill="none" stroke="#1e2a24" stroke-width="12.6" stroke-linecap="round" opacity="0.9"/>
<path d="M414.0,368.0 C419.2,368.3 431.6,367.9 445.0,369.9 M445.0,369.9 C458.4,371.9 480.8,374.7 494.5,380.2" fill="none" stroke="#6aa896" stroke-width="10.6" stroke-linecap="round"/>
<path d="M494.5,380.2 C508.2,385.7 515.0,394.6 527.4,402.9 M527.4,402.9 C539.8,411.1 552.9,416.0 568.7,429.7" fill="none" stroke="#1e2a24" stroke-width="12.6" stroke-linecap="round" opacity="0.9"/>
<path d="M494.5,380.2 C508.2,385.7 515.0,394.6 527.4,402.9 M527.4,402.9 C539.8,411.1 552.9,416.0 568.7,429.7" fill="none" stroke="#6aa896" stroke-width="10.6" stroke-linecap="round"/>
<path d="M568.7,429.7 C584.5,443.4 605.7,469.8 622.2,485.3 M622.2,485.3 C638.7,500.7 653.2,510.0 667.6,522.4" fill="none" stroke="#1e2a24" stroke-width="12.6" stroke-linecap="round" opacity="0.9"/>
<path d="M568.7,429.7 C584.5,443.4 605.7,469.8 622.2,485.3 M622.2,485.3 C638.7,500.7 653.2,510.0 667.6,522.4" fill="none" stroke="#6aa896" stroke-width="10.6" stroke-linecap="round"/>
<path d="M667.6,522.4 C682.0,534.8 697.6,549.4 708.8,559.5 M708.8,559.5 C720.0,569.6 730.6,579.1 735.0,583.0" fill="none" stroke="#1e2a24" stroke-width="12.6" stroke-linecap="round" opacity="0.9"/>
<path d="M667.6,522.4 C682.0,534.8 697.6,549.4 708.8,559.5 M708.8,559.5 C720.0,569.6 730.6,579.1 735.0,583.0" fill="none" stroke="#6aa896" stroke-width="10.6" stroke-linecap="round"/>
<path d="M307.0,399.0 C310.3,398.6 319.9,397.1 327.0,396.5 C334.1,395.9 344.3,396.6 349.7,395.7 C355.1,394.8 355.6,393.7 359.4,391.0 C363.2,388.3 368.6,382.3 372.4,379.5 C376.2,376.7 375.1,375.9 382.0,374.0 C388.9,372.1 408.7,369.0 414.0,368.0" fill="none" stroke="#1e2a24" stroke-width="12" stroke-linecap="round" stroke-linejoin="round"/>
<path d="M307.0,399.0 C310.3,398.6 319.9,397.1 327.0,396.5 C334.1,395.9 344.3,396.6 349.7,395.7 C355.1,394.8 355.6,393.7 359.4,391.0 C363.2,388.3 368.6,382.3 372.4,379.5 C376.2,376.7 375.1,375.9 382.0,374.0 C388.9,372.1 408.7,369.0 414.0,368.0" fill="none" stroke="#6aa896" stroke-width="10" stroke-linecap="round" stroke-linejoin="round"/>
<path d="M307.0,399.0 C310.3,398.6 319.9,397.1 327.0,396.5 M327.0,396.5 C334.1,395.9 344.3,396.6 349.7,395.7" fill="none" stroke="#1e2a24" stroke-width="11.6" stroke-linecap="round" opacity="0.9"/>
<path d="M307.0,399.0 C310.3,398.6 319.9,397.1 327.0,396.5 M327.0,396.5 C334.1,395.9 344.3,396.6 349.7,395.7" fill="none" stroke="#6aa896" stroke-width="9.6" stroke-linecap="round"/>
<path d="M349.7,395.7 C355.1,394.8 355.6,393.7 359.4,391.0 M359.4,391.0 C363.2,388.3 368.6,382.3 372.4,379.5" fill="none" stroke="#1e2a24" stroke-width="11.6" stroke-linecap="round" opacity="0.9"/>
<path d="M349.7,395.7 C355.1,394.8 355.6,393.7 359.4,391.0 M359.4,391.0 C363.2,388.3 368.6,382.3 372.4,379.5" fill="none" stroke="#6aa896" stroke-width="9.6" stroke-linecap="round"/>
<path d="M372.4,379.5 C376.2,376.7 375.1,375.9 382.0,374.0 M382.0,374.0 C388.9,372.1 408.7,369.0 414.0,368.0" fill="none" stroke="#1e2a24" stroke-width="11.6" stroke-linecap="round" opacity="0.9"/>
<path d="M372.4,379.5 C376.2,376.7 375.1,375.9 382.0,374.0 M382.0,374.0 C388.9,372.1 408.7,369.0 414.0,368.0" fill="none" stroke="#6aa896" stroke-width="9.6" stroke-linecap="round"/>
<path d="M174.0,363.4 C177.2,363.5 186.7,363.7 193.5,364.2 C200.3,364.7 208.7,364.3 214.6,366.6 C220.5,368.9 224.5,374.8 229.1,378.0 C233.7,381.2 238.8,383.8 242.0,386.0 C245.2,388.2 247.0,387.5 248.6,391.0 C250.2,394.5 250.2,403.7 251.8,407.0 C253.4,410.3 256.1,410.4 258.3,411.0 C260.4,411.6 260.1,411.6 264.7,410.3 C269.3,409.0 278.7,404.9 285.8,403.0 C292.8,401.1 303.5,399.7 307.0,399.0" fill="none" stroke="#1e2a24" stroke-width="12" stroke-linecap="round" stroke-linejoin="round"/>
<path d="M174.0,363.4 C177.2,363.5 186.7,363.7 193.5,364.2 C200.3,364.7 208.7,364.3 214.6,366.6 C220.5,368.9 224.5,374.8 229.1,378.0 C233.7,381.2 238.8,383.8 242.0,386.0 C245.2,388.2 247.0,387.5 248.6,391.0 C250.2,394.5 250.2,403.7 251.8,407.0 C253.4,410.3 256.1,410.4 258.3,411.0 C260.4,411.6 260.1,411.6 264.7,410.3 C269.3,409.0 278.7,404.9 285.8,403.0 C292.8,401.1 303.5,399.7 307.0,399.0" fill="none" stroke="#6aa896" stroke-width="10" stroke-linecap="round" stroke-linejoin="round"/>
<path d="M174.0,363.4 C177.2,363.5 186.7,363.7 193.5,364.2 M193.5,364.2 C200.3,364.7 208.7,364.3 214.6,366.6" fill="none" stroke="#1e2a24" stroke-width="11.6" stroke-linecap="round" opacity="0.9"/>
<path d="M174.0,363.4 C177.2,363.5 186.7,363.7 193.5,364.2 M193.5,364.2 C200.3,364.7 208.7,364.3 214.6,366.6" fill="none" stroke="#6aa896" stroke-width="9.6" stroke-linecap="round"/>
<path d="M214.6,366.6 C220.5,368.9 224.5,374.8 229.1,378.0 M229.1,378.0 C233.7,381.2 238.8,383.8 242.0,386.0" fill="none" stroke="#1e2a24" stroke-width="11.6" stroke-linecap="round" opacity="0.9"/>
<path d="M214.6,366.6 C220.5,368.9 224.5,374.8 229.1,378.0 M229.1,378.0 C233.7,381.2 238.8,383.8 242.0,386.0" fill="none" stroke="#6aa896" stroke-width="9.6" stroke-linecap="round"/>
<path d="M242.0,386.0 C245.2,388.2 247.0,387.5 248.6,391.0 M248.6,391.0 C250.2,394.5 250.2,403.7 251.8,407.0" fill="none" stroke="#1e2a24" stroke-width="11.6" stroke-linecap="round" opacity="0.9"/>
<path d="M242.0,386.0 C245.2,388.2 247.0,387.5 248.6,391.0 M248.6,391.0 C250.2,394.5 250.2,403.7 251.8,407.0" fill="none" stroke="#6aa896" stroke-width="9.6" stroke-linecap="round"/>
<path d="M251.8,407.0 C253.4,410.3 256.1,410.4 258.3,411.0 M258.3,411.0 C260.4,411.6 260.1,411.6 264.7,410.3" fill="none" stroke="#1e2a24" stroke-width="11.6" stroke-linecap="round" opacity="0.9"/>
<path d="M251.8,407.0 C253.4,410.3 256.1,410.4 258.3,411.0 M258.3,411.0 C260.4,411.6 260.1,411.6 264.7,410.3" fill="none" stroke="#6aa896" stroke-width="9.6" stroke-linecap="round"/>
<path d="M264.7,410.3 C269.3,409.0 278.7,404.9 285.8,403.0 M285.8,403.0 C292.8,401.1 303.5,399.7 307.0,399.0" fill="none" stroke="#1e2a24" stroke-width="11.6" stroke-linecap="round" opacity="0.9"/>
<path d="M264.7,410.3 C269.3,409.0 278.7,404.9 285.8,403.0 M285.8,403.0 C292.8,401.1 303.5,399.7 307.0,399.0" fill="none" stroke="#6aa896" stroke-width="9.6" stroke-linecap="round"/>
<path d="M-1.0,347.0 C5.8,345.4 26.0,338.6 39.5,337.3 C53.0,336.0 67.9,339.3 80.0,339.0 C92.1,338.7 104.2,337.0 112.3,335.7 C120.4,334.4 121.9,332.4 128.4,331.0 C134.8,329.6 141.8,327.9 151.0,327.6 C160.2,327.3 169.7,331.2 183.8,329.4 C197.9,327.5 224.6,320.0 235.6,316.5 C246.6,313.0 243.5,310.0 250.0,308.4 C256.5,306.8 267.6,307.1 274.4,307.0 C281.2,306.9 284.2,309.3 291.0,308.0 C297.8,306.7 308.3,301.3 315.0,299.0 C321.7,296.7 326.0,296.0 331.0,294.0 C336.0,292.0 338.7,290.0 345.0,287.0 C351.3,284.0 362.8,279.2 369.0,276.0 C375.2,272.8 375.0,271.8 382.0,268.0 C389.0,264.2 406.2,255.5 411.0,253.0" fill="none" stroke="#1e2a24" stroke-width="12" stroke-linecap="round" stroke-linejoin="round"/>
<path d="M-1.0,347.0 C5.8,345.4 26.0,338.6 39.5,337.3 C53.0,336.0 67.9,339.3 80.0,339.0 C92.1,338.7 104.2,337.0 112.3,335.7 C120.4,334.4 121.9,332.4 128.4,331.0 C134.8,329.6 141.8,327.9 151.0,327.6 C160.2,327.3 169.7,331.2 183.8,329.4 C197.9,327.5 224.6,320.0 235.6,316.5 C246.6,313.0 243.5,310.0 250.0,308.4 C256.5,306.8 267.6,307.1 274.4,307.0 C281.2,306.9 284.2,309.3 291.0,308.0 C297.8,306.7 308.3,301.3 315.0,299.0 C321.7,296.7 326.0,296.0 331.0,294.0 C336.0,292.0 338.7,290.0 345.0,287.0 C351.3,284.0 362.8,279.2 369.0,276.0 C375.2,272.8 375.0,271.8 382.0,268.0 C389.0,264.2 406.2,255.5 411.0,253.0" fill="none" stroke="#6aa896" stroke-width="10" stroke-linecap="round" stroke-linejoin="round"/>
<path d="M-1.0,347.0 C5.8,345.4 26.0,338.6 39.5,337.3 M39.5,337.3 C53.0,336.0 67.9,339.3 80.0,339.0" fill="none" stroke="#1e2a24" stroke-width="11.6" stroke-linecap="round" opacity="0.9"/>
<path d="M-1.0,347.0 C5.8,345.4 26.0,338.6 39.5,337.3 M39.5,337.3 C53.0,336.0 67.9,339.3 80.0,339.0" fill="none" stroke="#6aa896" stroke-width="9.6" stroke-linecap="round"/>
<path d="M80.0,339.0 C92.1,338.7 104.2,337.0 112.3,335.7 M112.3,335.7 C120.4,334.4 121.9,332.4 128.4,331.0" fill="none" stroke="#1e2a24" stroke-width="11.6" stroke-linecap="round" opacity="0.9"/>
<path d="M80.0,339.0 C92.1,338.7 104.2,337.0 112.3,335.7 M112.3,335.7 C120.4,334.4 121.9,332.4 128.4,331.0" fill="none" stroke="#6aa896" stroke-width="9.6" stroke-linecap="round"/>
<path d="M128.4,331.0 C134.8,329.6 141.8,327.9 151.0,327.6 M151.0,327.6 C160.2,327.3 169.7,331.2 183.8,329.4" fill="none" stroke="#1e2a24" stroke-width="11.6" stroke-linecap="round" opacity="0.9"/>
<path d="M128.4,331.0 C134.8,329.6 141.8,327.9 151.0,327.6 M151.0,327.6 C160.2,327.3 169.7,331.2 183.8,329.4" fill="none" stroke="#6aa896" stroke-width="9.6" stroke-linecap="round"/>
<path d="M183.8,329.4 C197.9,327.5 224.6,320.0 235.6,316.5 M235.6,316.5 C246.6,313.0 243.5,310.0 250.0,308.4" fill="none" stroke="#1e2a24" stroke-width="11.6" stroke-linecap="round" opacity="0.9"/>
<path d="M183.8,329.4 C197.9,327.5 224.6,320.0 235.6,316.5 M235.6,316.5 C246.6,313.0 243.5,310.0 250.0,308.4" fill="none" stroke="#6aa896" stroke-width="9.6" stroke-linecap="round"/>
<path d="M250.0,308.4 C256.5,306.8 267.6,307.1 274.4,307.0 M274.4,307.0 C281.2,306.9 284.2,309.3 291.0,308.0" fill="none" stroke="#1e2a24" stroke-width="11.6" stroke-linecap="round" opacity="0.9"/>
<path d="M250.0,308.4 C256.5,306.8 267.6,307.1 274.4,307.0 M274.4,307.0 C281.2,306.9 284.2,309.3 291.0,308.0" fill="none" stroke="#6aa896" stroke-width="9.6" stroke-linecap="round"/>
<path d="M291.0,308.0 C297.8,306.7 308.3,301.3 315.0,299.0 M315.0,299.0 C321.7,296.7 326.0,296.0 331.0,294.0" fill="none" stroke="#1e2a24" stroke-width="11.6" stroke-linecap="round" opacity="0.9"/>
<path d="M291.0,308.0 C297.8,306.7 308.3,301.3 315.0,299.0 M315.0,299.0 C321.7,296.7 326.0,296.0 331.0,294.0" fill="none" stroke="#6aa896" stroke-width="9.6" stroke-linecap="round"/>
<path d="M331.0,294.0 C336.0,292.0 338.7,290.0 345.0,287.0 M345.0,287.0 C351.3,284.0 362.8,279.2 369.0,276.0" fill="none" stroke="#1e2a24" stroke-width="11.6" stroke-linecap="round" opacity="0.9"/>
<path d="M331.0,294.0 C336.0,292.0 338.7,290.0 345.0,287.0 M345.0,287.0 C351.3,284.0 362.8,279.2 369.0,276.0" fill="none" stroke="#6aa896" stroke-width="9.6" stroke-linecap="round"/>
<path d="M369.0,276.0 C375.2,272.8 375.0,271.8 382.0,268.0 M382.0,268.0 C389.0,264.2 406.2,255.5 411.0,253.0" fill="none" stroke="#1e2a24" stroke-width="11.6" stroke-linecap="round" opacity="0.9"/>
<path d="M369.0,276.0 C375.2,272.8 375.0,271.8 382.0,268.0 M382.0,268.0 C389.0,264.2 406.2,255.5 411.0,253.0" fill="none" stroke="#6aa896" stroke-width="9.6" stroke-linecap="round"/>
<path d="M285.0,297.0 L317.4,287.3 L333.5,282.5 L346.5,272.8 L361.0,259.8 L372.4,245.3 L388.6,235.6 L388.6,221.0 L425.0,211.0 L455.0,211.0 L463.4,253.3 L445.2,269.5 L430.0,266.0 L426.4,283.0 L436.0,293.0 L443.4,302.5 L453.0,314.7 L460.4,326.8 L461.6,341.0 L450.0,361.0 L430.0,376.0 L405.0,376.0 L380.0,361.0 L365.0,341.0 L345.0,336.0 L325.0,341.0 L305.0,361.0 L275.0,376.0 L245.0,371.0 L225.0,376.0 L195.0,376.0 L165.0,371.0 L143.0,356.0 L143.0,336.0 L165.0,329.0 L184.0,332.0 L218.0,326.0 L240.0,320.0 L265.0,312.0 L285.0,303.0 Z" fill="#9183f8" stroke="#1a1a2a" stroke-width="1"/>
<path d="M284.4,136.9 L289.0,130.0 L297.4,126.4 L305.0,126.0 L311.9,128.8 L317.0,133.0 L321.6,137.7 L327.0,136.0 L333.0,136.9 L340.0,139.0 L345.9,142.6 L353.0,151.0 L359.0,166.0 L363.0,181.0 L362.0,195.0 L357.0,204.0 L350.8,208.0 L337.8,208.9 L330.0,207.0 L321.6,203.2 L313.0,197.0 L305.5,190.3 L299.0,180.6 L289.3,174.1 L285.0,167.0 L284.4,159.5 L283.0,147.0 Z" fill="#9183f8" stroke="#1a1a2a" stroke-width="1"/>
<path d="M117.8,315.3 L133.5,311.6 L155.0,312.0 L170.0,314.0 L179.7,319.0 L185.7,327.4 L191.0,336.0 L194.2,345.6 L195.4,356.0 L195.4,363.8 L192.0,370.0 L188.2,373.5 L179.7,376.0 L170.0,375.0 L162.7,371.0 L155.4,363.8 L145.0,360.0 L133.5,355.3 L123.8,350.5 L117.0,343.0 L113.0,331.0 Z" fill="#9183f8" stroke="#1a1a2a" stroke-width="1"/>
<circle cx="-9.0" cy="34.0" r="20" fill="#9183f8" stroke="#1a1a2a" stroke-width="1"/>
<circle cx="-17.0" cy="37.0" r="13" fill="#9183f8" stroke="#1a1a2a" stroke-width="1"/>
<circle cx="13.6" cy="43.4" r="16" fill="#9183f8" stroke="#1a1a2a" stroke-width="1"/>
<circle cx="6.8" cy="66.0" r="16" fill="#9183f8" stroke="#1a1a2a" stroke-width="1"/>
<circle cx="16.0" cy="311.0" r="22" fill="#9183f8" stroke="#1a1a2a" stroke-width="1"/>
<circle cx="40.0" cy="293.0" r="20" fill="#9183f8" stroke="#1a1a2a" stroke-width="1"/>
<circle cx="17.0" cy="262.0" r="19" fill="#9183f8" stroke="#1a1a2a" stroke-width="1"/>
<circle cx="27.0" cy="292.0" r="20.5" fill="#9183f8" stroke="#1a1a2a" stroke-width="1"/>
<circle cx="71.0" cy="314.0" r="17" fill="#9183f8" stroke="#1a1a2a" stroke-width="1"/>
<circle cx="69.0" cy="331.0" r="15" fill="#9183f8" stroke="#1a1a2a" stroke-width="1"/>
<path d="M68.0,348.0 L79.0,345.0" stroke="#1a1a2a" stroke-width="50" stroke-linecap="round"/>
<path d="M68.0,348.0 L79.0,345.0" stroke="#9183f8" stroke-width="48" stroke-linecap="round"/>
<path d="M-35.0,374.0 L40.5,354.0" stroke="#1a1a2a" stroke-width="45" stroke-linecap="round"/>
<path d="M-35.0,374.0 L40.5,354.0" stroke="#9183f8" stroke-width="43" stroke-linecap="round"/>
<circle cx="105.0" cy="334.0" r="15" fill="#9183f8" stroke="#1a1a2a" stroke-width="1"/>
<circle cx="110.5" cy="365.0" r="21" fill="#9183f8" stroke="#1a1a2a" stroke-width="1"/>
<circle cx="122.0" cy="408.0" r="20.5" fill="#9183f8" stroke="#1a1a2a" stroke-width="1"/>
<circle cx="164.4" cy="334.3" r="20" fill="#9183f8" stroke="#1a1a2a" stroke-width="1"/>
<circle cx="170.0" cy="349.0" r="26" fill="#9183f8" stroke="#1a1a2a" stroke-width="1"/>
<circle cx="223.0" cy="283.0" r="17" fill="#9183f8" stroke="#1a1a2a" stroke-width="1"/>
<circle cx="260.7" cy="287.3" r="17" fill="#9183f8" stroke="#1a1a2a" stroke-width="1"/>
<circle cx="240.5" cy="350.4" r="18" fill="#9183f8" stroke="#1a1a2a" stroke-width="1"/>
<circle cx="255.0" cy="331.0" r="20" fill="#9183f8" stroke="#1a1a2a" stroke-width="1"/>
<circle cx="277.7" cy="353.7" r="21" fill="#9183f8" stroke="#1a1a2a" stroke-width="1"/>
<circle cx="247.0" cy="378.0" r="15" fill="#9183f8" stroke="#1a1a2a" stroke-width="1"/>
<circle cx="256.5" cy="325.6" r="23" fill="#9183f8" stroke="#1a1a2a" stroke-width="1"/>
<circle cx="229.9" cy="348.7" r="22" fill="#9183f8" stroke="#1a1a2a" stroke-width="1"/>
<circle cx="280.8" cy="352.3" r="24" fill="#9183f8" stroke="#1a1a2a" stroke-width="1"/>
<circle cx="232.0" cy="406.0" r="16" fill="#9183f8" stroke="#1a1a2a" stroke-width="1"/>
<circle cx="259.0" cy="431.0" r="22" fill="#9183f8" stroke="#1a1a2a" stroke-width="1"/>
<circle cx="322.0" cy="363.2" r="18" fill="#9183f8" stroke="#1a1a2a" stroke-width="1"/>
<circle cx="326.9" cy="382.6" r="22" fill="#9183f8" stroke="#1a1a2a" stroke-width="1"/>
<circle cx="314.8" cy="416.6" r="17" fill="#9183f8" stroke="#1a1a2a" stroke-width="1"/>
<circle cx="314.0" cy="417.6" r="16" fill="#9183f8" stroke="#1a1a2a" stroke-width="1"/>
<circle cx="325.5" cy="367.4" r="20" fill="#9183f8" stroke="#1a1a2a" stroke-width="1"/>
<circle cx="330.3" cy="390.9" r="20" fill="#9183f8" stroke="#1a1a2a" stroke-width="1"/>
<circle cx="360.9" cy="313.5" r="27" fill="#9183f8" stroke="#1a1a2a" stroke-width="1"/>
<circle cx="382.7" cy="353.5" r="22" fill="#9183f8" stroke="#1a1a2a" stroke-width="1"/>
<circle cx="411.8" cy="360.8" r="19" fill="#9183f8" stroke="#1a1a2a" stroke-width="1"/>
<circle cx="415.5" cy="368.0" r="16" fill="#9183f8" stroke="#1a1a2a" stroke-width="1"/>
<circle cx="373.0" cy="393.0" r="15" fill="#9183f8" stroke="#1a1a2a" stroke-width="1"/>
<circle cx="440.0" cy="347.0" r="18" fill="#9183f8" stroke="#1a1a2a" stroke-width="1"/>
<circle cx="443.4" cy="334.0" r="18" fill="#9183f8" stroke="#1a1a2a" stroke-width="1"/>
<circle cx="309.0" cy="476.7" r="18" fill="#9183f8" stroke="#1a1a2a" stroke-width="1"/>
<circle cx="308.0" cy="538.0" r="17" fill="#9183f8" stroke="#1a1a2a" stroke-width="1"/>
<circle cx="417.0" cy="14.0" r="17" fill="#9183f8" stroke="#1a1a2a" stroke-width="1"/>
<circle cx="410.0" cy="63.0" r="21" fill="#9183f8" stroke="#1a1a2a" stroke-width="1"/>
<circle cx="420.0" cy="79.0" r="20" fill="#9183f8" stroke="#1a1a2a" stroke-width="1"/>
<circle cx="430.4" cy="113.0" r="21" fill="#9183f8" stroke="#1a1a2a" stroke-width="1"/>
<circle cx="544.4" cy="25.0" r="18" fill="#9183f8" stroke="#1a1a2a" stroke-width="1"/>
<circle cx="529.0" cy="3.0" r="30" fill="#9183f8" stroke="#1a1a2a" stroke-width="1"/>
<circle cx="530.3" cy="116.4" r="23" fill="#9183f8" stroke="#1a1a2a" stroke-width="1"/>
<circle cx="359.5" cy="78.3" r="18" fill="#9183f8" stroke="#1a1a2a" stroke-width="1"/>
<circle cx="385.0" cy="125.5" r="20.5" fill="#9183f8" stroke="#1a1a2a" stroke-width="1"/>
<circle cx="365.0" cy="159.5" r="17" fill="#9183f8" stroke="#1a1a2a" stroke-width="1"/>
<circle cx="370.0" cy="184.0" r="13" fill="#9183f8" stroke="#1a1a2a" stroke-width="1"/>
<circle cx="355.0" cy="204.0" r="14" fill="#9183f8" stroke="#1a1a2a" stroke-width="1"/>
<circle cx="425.0" cy="223.0" r="20" fill="#9183f8" stroke="#1a1a2a" stroke-width="1"/>
<circle cx="439.0" cy="209.0" r="22" fill="#9183f8" stroke="#1a1a2a" stroke-width="1"/>
<circle cx="467.0" cy="206.0" r="21" fill="#9183f8" stroke="#1a1a2a" stroke-width="1"/>
<circle cx="511.7" cy="190.3" r="22" fill="#9183f8" stroke="#1a1a2a" stroke-width="1"/>
<circle cx="555.0" cy="183.0" r="22" fill="#9183f8" stroke="#1a1a2a" stroke-width="1"/>
<ellipse cx="561.0" cy="185.5" rx="27" ry="24.5" fill="#9183f8" stroke="#1a1a2a" stroke-width="1"/>
<circle cx="563.0" cy="179.0" r="22" fill="#9183f8" stroke="#1a1a2a" stroke-width="1"/>
<circle cx="443.2" cy="247.3" r="20" fill="#9183f8" stroke="#1a1a2a" stroke-width="1"/>
<circle cx="465.0" cy="211.0" r="17" fill="#9183f8" stroke="#1a1a2a" stroke-width="1"/>
<circle cx="490.7" cy="262.4" r="16" fill="#9183f8" stroke="#1a1a2a" stroke-width="1"/>
<circle cx="500.0" cy="278.0" r="20" fill="#9183f8" stroke="#1a1a2a" stroke-width="1"/>
<circle cx="500.0" cy="296.0" r="20" fill="#9183f8" stroke="#1a1a2a" stroke-width="1"/>
<circle cx="477.0" cy="310.0" r="17" fill="#9183f8" stroke="#1a1a2a" stroke-width="1"/>
<circle cx="445.0" cy="340.0" r="18" fill="#9183f8" stroke="#1a1a2a" stroke-width="1"/>
<circle cx="495.5" cy="395.5" r="19.5" fill="#9183f8" stroke="#1a1a2a" stroke-width="1"/>
<circle cx="652.0" cy="505.0" r="20" fill="#9183f8" stroke="#1a1a2a" stroke-width="1"/>
<circle cx="745.0" cy="515.0" r="20" fill="#9183f8" stroke="#1a1a2a" stroke-width="1"/>
<circle cx="762.0" cy="559.0" r="20" fill="#9183f8" stroke="#1a1a2a" stroke-width="1"/>
<path d="M255.0,-12.0 C260.0,-11.3 275.8,-9.2 285.0,-8.0 C294.2,-6.8 304.0,-6.2 310.0,-5.0 C316.0,-3.8 318.1,-2.6 321.0,-1.0 C323.9,0.6 324.8,3.1 327.5,4.7 C330.2,6.3 335.3,6.4 337.2,8.7 C339.1,11.0 338.3,14.6 338.9,18.4 C339.4,22.2 340.5,27.9 340.5,31.4 C340.5,34.9 338.6,37.4 338.9,39.5 C339.2,41.6 340.5,44.5 342.1,44.3 C343.7,44.2 346.7,38.6 348.6,38.6 C350.5,38.6 352.3,42.0 353.4,44.3 C354.5,46.6 355.0,49.7 355.0,52.4 C355.0,55.1 353.1,57.5 353.4,60.5 C353.7,63.5 356.2,67.0 356.7,70.2 C357.3,73.4 356.2,75.6 356.7,79.9 C357.2,84.2 358.6,92.0 359.9,96.1 C361.2,100.1 362.3,101.0 364.7,104.2 C367.1,107.4 372.0,111.7 374.4,115.5 C376.8,119.3 377.3,118.3 379.0,127.0 C380.7,135.7 382.9,155.4 384.7,167.6 C386.5,179.8 388.0,189.4 389.6,200.0 C391.2,210.6 393.6,225.8 394.4,231.0" fill="none" stroke="#e6ee3a" stroke-width="1.3"/>
<path d="M445.0,226.0 C446.4,223.8 449.9,217.1 453.5,213.0 C457.1,208.9 462.2,205.4 466.5,201.6 C470.8,197.8 475.1,193.1 479.4,190.3 C483.7,187.5 487.0,186.4 492.4,184.6 C497.8,182.9 505.4,181.4 511.8,179.8 C518.2,178.2 523.2,177.8 531.0,175.0 C538.8,172.2 552.3,165.0 558.7,162.8 C565.1,160.6 566.2,161.7 569.3,162.0 C572.4,162.3 573.4,162.9 577.4,164.4 C581.4,165.9 588.6,169.5 593.5,170.9 C598.4,172.2 602.2,174.4 606.5,172.5 C610.8,170.6 615.6,164.4 619.4,159.5 C623.1,154.6 624.5,150.3 629.0,143.0 C633.5,135.7 641.6,122.2 646.5,115.4 C651.4,108.6 652.3,106.1 658.1,101.9 C663.9,97.7 672.7,93.3 681.4,90.2 C690.1,87.1 702.6,85.4 710.5,83.4 C718.4,81.4 724.1,80.6 729.0,78.0 C733.9,75.4 736.8,72.2 740.0,68.0 C743.2,63.8 745.0,58.2 748.0,53.0 C751.0,47.8 756.3,39.7 758.0,37.0" fill="none" stroke="#e6ee3a" stroke-width="1.3"/>
<path d="M445.0,226.0 C442.6,227.8 434.4,231.7 430.6,237.0 C426.9,242.3 424.4,252.6 422.5,258.0 C420.6,263.4 420.0,264.3 419.3,269.5 C418.6,274.7 418.8,282.0 418.5,289.0 C418.2,296.0 417.5,306.3 417.7,311.6 C418.0,316.9 420.0,317.8 420.0,321.0 C420.0,324.2 419.2,327.7 417.7,331.0 C416.2,334.3 411.8,334.8 411.2,341.0 C410.6,347.2 413.5,363.5 414.0,368.0" fill="none" stroke="#e6ee3a" stroke-width="1.3"/>
<path d="M304.0,331.0 C304.3,339.0 305.3,367.7 306.0,379.0 C306.7,390.3 307.5,387.0 308.0,399.0 C308.5,411.0 308.5,437.8 309.0,451.0 C309.5,464.2 310.0,467.5 311.0,478.0 C312.0,488.5 314.7,504.3 315.0,514.0 C315.3,523.7 313.9,524.8 313.0,536.0 C312.1,547.2 310.1,573.5 309.5,581.0" fill="none" stroke="#e6ee3a" stroke-width="1.3"/>
<path d="M239.8,483.2 C243.2,485.3 252.0,492.0 260.0,496.0 C267.9,500.0 278.9,504.2 287.5,507.0 C296.1,509.8 303.7,511.4 311.3,512.5 C318.9,513.6 326.0,513.7 333.3,513.4 C340.6,513.1 343.9,514.0 355.0,510.5 C366.1,507.0 388.5,496.3 399.7,492.6 C410.9,488.9 414.6,488.4 422.1,488.2 C429.6,488.0 437.1,490.6 444.5,491.5 C451.9,492.4 458.6,495.3 466.8,493.8 C475.0,492.3 484.0,486.7 493.7,482.6 C503.4,478.5 512.5,471.2 525.0,469.2 C537.5,467.3 553.2,466.5 568.7,470.9 C584.2,475.3 603.0,487.8 618.1,495.7 C633.2,503.6 645.5,507.7 659.3,518.3 C673.0,528.9 691.6,548.7 700.6,559.5 C709.5,570.3 710.9,579.1 713.0,583.0" fill="none" stroke="#e6ee3a" stroke-width="1.3"/>
<path d="M414.0,368.0 C413.0,371.0 409.5,378.7 408.0,386.0 C406.5,393.3 405.1,403.4 405.0,412.0 C404.9,420.6 405.1,429.4 407.6,437.8 C410.1,446.2 415.6,455.3 419.9,462.4 C424.2,469.5 429.2,475.4 433.3,480.3 C437.4,485.1 442.6,489.6 444.5,491.5" fill="none" stroke="#e6ee3a" stroke-width="1.3"/>
<path d="M414.0,368.0 C419.2,368.3 431.6,367.9 445.0,369.9 C458.4,371.9 480.8,374.7 494.5,380.2 C508.2,385.7 515.0,394.6 527.4,402.9 C539.8,411.1 552.9,416.0 568.7,429.7 C584.5,443.4 605.7,469.8 622.2,485.3 C638.7,500.7 653.2,510.0 667.6,522.4 C682.0,534.8 697.6,549.4 708.8,559.5 C720.0,569.6 730.6,579.1 735.0,583.0" fill="none" stroke="#e6ee3a" stroke-width="1.3"/>
<path d="M307.0,399.0 C310.3,398.6 319.9,397.1 327.0,396.5 C334.1,395.9 344.3,396.6 349.7,395.7 C355.1,394.8 355.6,393.7 359.4,391.0 C363.2,388.3 368.6,382.3 372.4,379.5 C376.2,376.7 375.1,375.9 382.0,374.0 C388.9,372.1 408.7,369.0 414.0,368.0" fill="none" stroke="#e6ee3a" stroke-width="1.3"/>
<path d="M166.0,334.0 C166.7,337.0 168.7,347.1 170.0,352.0 C171.3,356.9 170.1,361.4 174.0,363.4 C177.9,365.4 186.7,363.7 193.5,364.2 C200.3,364.7 208.7,364.3 214.6,366.6 C220.5,368.9 224.5,374.8 229.1,378.0 C233.7,381.2 238.8,383.8 242.0,386.0 C245.2,388.2 247.0,387.5 248.6,391.0 C250.2,394.5 250.2,403.7 251.8,407.0 C253.4,410.3 256.1,410.4 258.3,411.0 C260.4,411.6 260.1,411.6 264.7,410.3 C269.3,409.0 278.7,404.9 285.8,403.0 C292.8,401.1 303.5,399.7 307.0,399.0" fill="none" stroke="#e6ee3a" stroke-width="1.3"/>
<path d="M274.4,307.0 C277.2,307.2 284.2,309.3 291.0,308.0 C297.8,306.7 308.3,301.3 315.0,299.0 C321.7,296.7 326.0,296.0 331.0,294.0 C336.0,292.0 340.5,289.2 345.0,287.0 C349.5,284.8 353.8,282.7 357.8,280.9 C361.8,279.1 365.1,278.1 369.1,276.0 C373.2,273.9 375.1,272.3 382.1,268.5 C389.1,264.7 404.5,255.1 411.2,253.4 C417.9,251.7 420.6,257.4 422.5,258.2" fill="none" stroke="#e6ee3a" stroke-width="1.3"/>
<path d="M-1.0,347.0 C5.8,345.4 25.2,338.6 39.5,337.3 C53.8,336.0 73.0,339.3 85.0,339.0 C97.0,338.7 104.2,336.8 111.7,335.3 C119.2,333.8 123.1,331.0 130.0,329.8 C136.9,328.6 146.9,328.2 153.0,328.0 C159.1,327.8 161.1,328.3 166.3,328.6 C171.6,328.9 172.9,331.8 184.5,329.8 C196.1,327.8 224.7,320.1 235.6,316.5 C246.5,312.9 243.5,310.0 250.0,308.4 C256.5,306.8 270.3,307.2 274.4,307.0" fill="none" stroke="#e6ee3a" stroke-width="1.3"/>
<path d="M166.3,328.6 C166.3,329.6 165.7,332.3 166.3,334.7 C166.9,337.1 169.4,339.6 170.0,343.2 C170.6,346.8 169.2,353.3 170.0,356.5 C170.8,359.7 170.8,361.4 174.8,362.6 C178.8,363.8 189.2,363.6 194.2,363.8 C199.2,364.0 203.2,363.8 205.0,363.8" fill="none" stroke="#e6ee3a" stroke-width="1.3"/>
<circle cx="359.7" cy="74.7" r="3.7" fill="#3877be" stroke="#000" stroke-width="1.1"/>
<circle cx="358.8" cy="82.4" r="3.7" fill="#3877be" stroke="#000" stroke-width="1.1"/>
<circle cx="364.6" cy="82.4" r="3.7" fill="#3877be" stroke="#000" stroke-width="1.1"/>
<circle cx="362.7" cy="86.3" r="3.7" fill="#3877be" stroke="#000" stroke-width="1.1"/>
<circle cx="515.8" cy="100.9" r="3.7" fill="#3877be" stroke="#000" stroke-width="1.1"/>
<circle cx="520.6" cy="100.9" r="3.7" fill="#3877be" stroke="#000" stroke-width="1.1"/>
<circle cx="526.4" cy="100.9" r="3.7" fill="#3877be" stroke="#000" stroke-width="1.1"/>
<circle cx="534.2" cy="98.9" r="3.7" fill="#3877be" stroke="#000" stroke-width="1.1"/>
<circle cx="542.9" cy="99.9" r="3.7" fill="#3877be" stroke="#000" stroke-width="1.1"/>
<circle cx="547.8" cy="102.8" r="3.7" fill="#3877be" stroke="#000" stroke-width="1.1"/>
<circle cx="540.0" cy="105.3" r="3.7" fill="#3877be" stroke="#000" stroke-width="1.1"/>
<circle cx="539.0" cy="111.6" r="3.7" fill="#3877be" stroke="#000" stroke-width="1.1"/>
<circle cx="535.2" cy="135.8" r="3.7" fill="#3877be" stroke="#000" stroke-width="1.1"/>
<circle cx="384.8" cy="129.0" r="3.7" fill="#3877be" stroke="#000" stroke-width="1.1"/>
<circle cx="383.8" cy="131.0" r="3.7" fill="#3877be" stroke="#000" stroke-width="1.1"/>
<circle cx="412.9" cy="76.6" r="3.7" fill="#3877be" stroke="#000" stroke-width="1.1"/>
<circle cx="436.8" cy="125.5" r="3.7" fill="#3877be" stroke="#000" stroke-width="1.1"/>
<circle cx="320.9" cy="147.9" r="3.7" fill="#3877be" stroke="#000" stroke-width="1.1"/>
<circle cx="339.8" cy="147.9" r="3.7" fill="#3877be" stroke="#000" stroke-width="1.1"/>
<circle cx="353.9" cy="153.7" r="3.7" fill="#3877be" stroke="#000" stroke-width="1.1"/>
<circle cx="362.7" cy="158.5" r="3.7" fill="#3877be" stroke="#000" stroke-width="1.1"/>
<circle cx="365.6" cy="164.3" r="3.7" fill="#3877be" stroke="#000" stroke-width="1.1"/>
<circle cx="352.6" cy="177.9" r="3.7" fill="#3877be" stroke="#000" stroke-width="1.1"/>
<circle cx="351.0" cy="191.5" r="3.7" fill="#3877be" stroke="#000" stroke-width="1.1"/>
<circle cx="357.8" cy="192.5" r="3.7" fill="#3877be" stroke="#000" stroke-width="1.1"/>
<circle cx="361.7" cy="200.8" r="3.7" fill="#3877be" stroke="#000" stroke-width="1.1"/>
<circle cx="364.6" cy="207.4" r="3.7" fill="#3877be" stroke="#000" stroke-width="1.1"/>
<circle cx="356.8" cy="215.8" r="3.7" fill="#3877be" stroke="#000" stroke-width="1.1"/>
<circle cx="222.0" cy="270.7" r="3.7" fill="#3877be" stroke="#000" stroke-width="1.1"/>
<circle cx="229.7" cy="281.2" r="3.7" fill="#3877be" stroke="#000" stroke-width="1.1"/>
<circle cx="238.5" cy="281.2" r="3.7" fill="#3877be" stroke="#000" stroke-width="1.1"/>
<circle cx="216.1" cy="284.7" r="3.7" fill="#3877be" stroke="#000" stroke-width="1.1"/>
<circle cx="247.2" cy="277.3" r="3.7" fill="#3877be" stroke="#000" stroke-width="1.1"/>
<circle cx="255.9" cy="279.8" r="3.7" fill="#3877be" stroke="#000" stroke-width="1.1"/>
<circle cx="262.7" cy="270.1" r="3.7" fill="#3877be" stroke="#000" stroke-width="1.1"/>
<circle cx="353.0" cy="271.1" r="3.7" fill="#3877be" stroke="#000" stroke-width="1.1"/>
<circle cx="362.7" cy="275.0" r="3.7" fill="#3877be" stroke="#000" stroke-width="1.1"/>
<circle cx="372.4" cy="271.1" r="3.7" fill="#3877be" stroke="#000" stroke-width="1.1"/>
<circle cx="343.2" cy="282.7" r="3.7" fill="#3877be" stroke="#000" stroke-width="1.1"/>
<circle cx="351.0" cy="279.8" r="3.7" fill="#3877be" stroke="#000" stroke-width="1.1"/>
<circle cx="358.8" cy="278.8" r="3.7" fill="#3877be" stroke="#000" stroke-width="1.1"/>
<circle cx="366.5" cy="278.8" r="3.7" fill="#3877be" stroke="#000" stroke-width="1.1"/>
<circle cx="320.8" cy="147.9" r="3.7" fill="#3877be" stroke="#000" stroke-width="1.1"/>
<circle cx="339.9" cy="147.9" r="3.7" fill="#3877be" stroke="#000" stroke-width="1.1"/>
<circle cx="354.0" cy="153.9" r="3.7" fill="#3877be" stroke="#000" stroke-width="1.1"/>
<circle cx="362.9" cy="158.7" r="3.7" fill="#3877be" stroke="#000" stroke-width="1.1"/>
<circle cx="365.3" cy="164.4" r="3.7" fill="#3877be" stroke="#000" stroke-width="1.1"/>
<circle cx="352.4" cy="177.3" r="3.7" fill="#3877be" stroke="#000" stroke-width="1.1"/>
<circle cx="350.8" cy="191.1" r="3.7" fill="#3877be" stroke="#000" stroke-width="1.1"/>
<circle cx="358.0" cy="192.7" r="3.7" fill="#3877be" stroke="#000" stroke-width="1.1"/>
<circle cx="362.1" cy="200.0" r="3.7" fill="#3877be" stroke="#000" stroke-width="1.1"/>
<circle cx="365.0" cy="207.8" r="3.7" fill="#3877be" stroke="#000" stroke-width="1.1"/>
<circle cx="356.9" cy="215.9" r="3.7" fill="#3877be" stroke="#000" stroke-width="1.1"/>
<circle cx="384.7" cy="128.8" r="3.7" fill="#3877be" stroke="#000" stroke-width="1.1"/>
<circle cx="383.1" cy="142.6" r="3.7" fill="#3877be" stroke="#000" stroke-width="1.1"/>
<circle cx="388.8" cy="145.0" r="3.7" fill="#3877be" stroke="#000" stroke-width="1.1"/>
<circle cx="381.5" cy="150.6" r="3.7" fill="#3877be" stroke="#000" stroke-width="1.1"/>
<circle cx="388.0" cy="150.6" r="3.7" fill="#3877be" stroke="#000" stroke-width="1.1"/>
<circle cx="386.4" cy="155.5" r="3.7" fill="#3877be" stroke="#000" stroke-width="1.1"/>
<circle cx="384.7" cy="164.4" r="3.7" fill="#3877be" stroke="#000" stroke-width="1.1"/>
<circle cx="381.8" cy="179.8" r="3.7" fill="#3877be" stroke="#000" stroke-width="1.1"/>
<circle cx="384.7" cy="194.3" r="3.7" fill="#3877be" stroke="#000" stroke-width="1.1"/>
<circle cx="390.4" cy="196.8" r="3.7" fill="#3877be" stroke="#000" stroke-width="1.1"/>
<circle cx="385.6" cy="204.9" r="3.7" fill="#3877be" stroke="#000" stroke-width="1.1"/>
<circle cx="391.2" cy="208.1" r="3.7" fill="#3877be" stroke="#000" stroke-width="1.1"/>
<circle cx="397.7" cy="209.7" r="3.7" fill="#3877be" stroke="#000" stroke-width="1.1"/>
<circle cx="393.6" cy="227.2" r="3.7" fill="#3877be" stroke="#000" stroke-width="1.1"/>
<circle cx="400.1" cy="227.2" r="3.7" fill="#3877be" stroke="#000" stroke-width="1.1"/>
<circle cx="417.1" cy="196.0" r="3.7" fill="#3877be" stroke="#000" stroke-width="1.1"/>
<circle cx="422.0" cy="204.9" r="3.7" fill="#3877be" stroke="#000" stroke-width="1.1"/>
<circle cx="436.9" cy="125.9" r="3.7" fill="#3877be" stroke="#000" stroke-width="1.1"/>
<circle cx="539.0" cy="112.3" r="3.7" fill="#3877be" stroke="#000" stroke-width="1.1"/>
<circle cx="534.4" cy="135.6" r="3.7" fill="#3877be" stroke="#000" stroke-width="1.1"/>
<circle cx="502.9" cy="172.5" r="3.7" fill="#3877be" stroke="#000" stroke-width="1.1"/>
<circle cx="498.9" cy="180.9" r="3.7" fill="#3877be" stroke="#000" stroke-width="1.1"/>
<circle cx="506.1" cy="179.8" r="3.7" fill="#3877be" stroke="#000" stroke-width="1.1"/>
<circle cx="508.6" cy="177.3" r="3.7" fill="#3877be" stroke="#000" stroke-width="1.1"/>
<circle cx="431.7" cy="189.0" r="3.7" fill="#3877be" stroke="#000" stroke-width="1.1"/>
<circle cx="460.8" cy="194.8" r="3.7" fill="#3877be" stroke="#000" stroke-width="1.1"/>
<circle cx="417.1" cy="196.0" r="3.7" fill="#3877be" stroke="#000" stroke-width="1.1"/>
<circle cx="421.2" cy="205.7" r="3.7" fill="#3877be" stroke="#000" stroke-width="1.1"/>
<circle cx="426.0" cy="204.5" r="3.7" fill="#3877be" stroke="#000" stroke-width="1.1"/>
<circle cx="429.6" cy="211.6" r="3.7" fill="#3877be" stroke="#000" stroke-width="1.1"/>
<circle cx="428.9" cy="218.1" r="3.7" fill="#3877be" stroke="#000" stroke-width="1.1"/>
<circle cx="435.7" cy="229.4" r="3.7" fill="#3877be" stroke="#000" stroke-width="1.1"/>
<circle cx="558.7" cy="162.8" r="3.7" fill="#3877be" stroke="#000" stroke-width="1.1"/>
<circle cx="562.8" cy="162.8" r="3.7" fill="#3877be" stroke="#000" stroke-width="1.1"/>
<circle cx="579.0" cy="168.0" r="3.7" fill="#3877be" stroke="#000" stroke-width="1.1"/>
<circle cx="590.3" cy="169.6" r="3.7" fill="#3877be" stroke="#000" stroke-width="1.1"/>
<circle cx="580.9" cy="180.9" r="3.7" fill="#3877be" stroke="#000" stroke-width="1.1"/>
<circle cx="558.8" cy="162.8" r="3.7" fill="#3877be" stroke="#000" stroke-width="1.1"/>
<circle cx="562.8" cy="162.0" r="3.7" fill="#3877be" stroke="#000" stroke-width="1.1"/>
<circle cx="566.8" cy="162.8" r="3.7" fill="#3877be" stroke="#000" stroke-width="1.1"/>
<circle cx="82.8" cy="314.7" r="3.7" fill="#3877be" stroke="#000" stroke-width="1.1"/>
<circle cx="86.4" cy="326.0" r="3.7" fill="#3877be" stroke="#000" stroke-width="1.1"/>
<circle cx="94.5" cy="323.6" r="3.7" fill="#3877be" stroke="#000" stroke-width="1.1"/>
<circle cx="100.1" cy="326.8" r="3.7" fill="#3877be" stroke="#000" stroke-width="1.1"/>
<circle cx="92.9" cy="330.9" r="3.7" fill="#3877be" stroke="#000" stroke-width="1.1"/>
<circle cx="100.1" cy="332.8" r="3.7" fill="#3877be" stroke="#000" stroke-width="1.1"/>
<circle cx="84.8" cy="334.9" r="3.7" fill="#3877be" stroke="#000" stroke-width="1.1"/>
<circle cx="109.0" cy="346.7" r="3.7" fill="#3877be" stroke="#000" stroke-width="1.1"/>
<circle cx="115.5" cy="334.1" r="3.7" fill="#3877be" stroke="#000" stroke-width="1.1"/>
<circle cx="119.6" cy="333.3" r="3.7" fill="#3877be" stroke="#000" stroke-width="1.1"/>
<circle cx="115.5" cy="339.8" r="3.7" fill="#3877be" stroke="#000" stroke-width="1.1"/>
<circle cx="118.7" cy="343.8" r="3.7" fill="#3877be" stroke="#000" stroke-width="1.1"/>
<circle cx="122.0" cy="344.6" r="3.7" fill="#3877be" stroke="#000" stroke-width="1.1"/>
<circle cx="122.0" cy="322.8" r="3.7" fill="#3877be" stroke="#000" stroke-width="1.1"/>
<circle cx="134.1" cy="328.4" r="3.7" fill="#3877be" stroke="#000" stroke-width="1.1"/>
<circle cx="143.0" cy="327.6" r="3.7" fill="#3877be" stroke="#000" stroke-width="1.1"/>
<circle cx="146.2" cy="327.6" r="3.7" fill="#3877be" stroke="#000" stroke-width="1.1"/>
<circle cx="143.0" cy="315.5" r="3.7" fill="#3877be" stroke="#000" stroke-width="1.1"/>
<circle cx="149.5" cy="310.6" r="3.7" fill="#3877be" stroke="#000" stroke-width="1.1"/>
<circle cx="152.7" cy="315.5" r="3.7" fill="#3877be" stroke="#000" stroke-width="1.1"/>
<circle cx="151.9" cy="322.0" r="3.7" fill="#3877be" stroke="#000" stroke-width="1.1"/>
<circle cx="146.2" cy="322.0" r="3.7" fill="#3877be" stroke="#000" stroke-width="1.1"/>
<circle cx="156.8" cy="327.6" r="3.7" fill="#3877be" stroke="#000" stroke-width="1.1"/>
<circle cx="157.6" cy="348.7" r="3.7" fill="#3877be" stroke="#000" stroke-width="1.1"/>
<circle cx="118.7" cy="368.1" r="3.7" fill="#3877be" stroke="#000" stroke-width="1.1"/>
<circle cx="221.9" cy="270.4" r="3.7" fill="#3877be" stroke="#000" stroke-width="1.1"/>
<circle cx="230.8" cy="272.0" r="3.7" fill="#3877be" stroke="#000" stroke-width="1.1"/>
<circle cx="230.0" cy="280.9" r="3.7" fill="#3877be" stroke="#000" stroke-width="1.1"/>
<circle cx="238.9" cy="281.7" r="3.7" fill="#3877be" stroke="#000" stroke-width="1.1"/>
<circle cx="215.4" cy="284.9" r="3.7" fill="#3877be" stroke="#000" stroke-width="1.1"/>
<circle cx="214.6" cy="290.6" r="3.7" fill="#3877be" stroke="#000" stroke-width="1.1"/>
<circle cx="216.2" cy="297.1" r="3.7" fill="#3877be" stroke="#000" stroke-width="1.1"/>
<circle cx="247.8" cy="277.6" r="3.7" fill="#3877be" stroke="#000" stroke-width="1.1"/>
<circle cx="255.8" cy="279.3" r="3.7" fill="#3877be" stroke="#000" stroke-width="1.1"/>
<circle cx="254.2" cy="284.9" r="3.7" fill="#3877be" stroke="#000" stroke-width="1.1"/>
<circle cx="263.1" cy="269.5" r="3.7" fill="#3877be" stroke="#000" stroke-width="1.1"/>
<circle cx="247.8" cy="290.6" r="3.7" fill="#3877be" stroke="#000" stroke-width="1.1"/>
<circle cx="252.6" cy="297.9" r="3.7" fill="#3877be" stroke="#000" stroke-width="1.1"/>
<circle cx="260.7" cy="298.7" r="3.7" fill="#3877be" stroke="#000" stroke-width="1.1"/>
<circle cx="261.5" cy="305.1" r="3.7" fill="#3877be" stroke="#000" stroke-width="1.1"/>
<circle cx="252.6" cy="305.1" r="3.7" fill="#3877be" stroke="#000" stroke-width="1.1"/>
<circle cx="265.6" cy="287.3" r="3.7" fill="#3877be" stroke="#000" stroke-width="1.1"/>
<circle cx="269.6" cy="292.2" r="3.7" fill="#3877be" stroke="#000" stroke-width="1.1"/>
<circle cx="268.0" cy="300.3" r="3.7" fill="#3877be" stroke="#000" stroke-width="1.1"/>
<circle cx="232.4" cy="314.9" r="3.7" fill="#3877be" stroke="#000" stroke-width="1.1"/>
<circle cx="242.9" cy="318.1" r="3.7" fill="#3877be" stroke="#000" stroke-width="1.1"/>
<circle cx="252.6" cy="314.9" r="3.7" fill="#3877be" stroke="#000" stroke-width="1.1"/>
<circle cx="240.5" cy="325.4" r="3.7" fill="#3877be" stroke="#000" stroke-width="1.1"/>
<circle cx="251.0" cy="331.8" r="3.7" fill="#3877be" stroke="#000" stroke-width="1.1"/>
<circle cx="271.2" cy="314.9" r="3.7" fill="#3877be" stroke="#000" stroke-width="1.1"/>
<circle cx="272.8" cy="325.4" r="3.7" fill="#3877be" stroke="#000" stroke-width="1.1"/>
<circle cx="277.7" cy="308.4" r="3.7" fill="#3877be" stroke="#000" stroke-width="1.1"/>
<circle cx="283.3" cy="314.9" r="3.7" fill="#3877be" stroke="#000" stroke-width="1.1"/>
<circle cx="287.4" cy="313.2" r="3.7" fill="#3877be" stroke="#000" stroke-width="1.1"/>
<circle cx="293.9" cy="314.9" r="3.7" fill="#3877be" stroke="#000" stroke-width="1.1"/>
<circle cx="289.8" cy="308.4" r="3.7" fill="#3877be" stroke="#000" stroke-width="1.1"/>
<circle cx="296.3" cy="308.4" r="3.7" fill="#3877be" stroke="#000" stroke-width="1.1"/>
<circle cx="285.8" cy="319.7" r="3.7" fill="#3877be" stroke="#000" stroke-width="1.1"/>
<circle cx="297.9" cy="334.3" r="3.7" fill="#3877be" stroke="#000" stroke-width="1.1"/>
<circle cx="149.9" cy="310.0" r="3.7" fill="#3877be" stroke="#000" stroke-width="1.1"/>
<circle cx="153.1" cy="314.9" r="3.7" fill="#3877be" stroke="#000" stroke-width="1.1"/>
<circle cx="157.9" cy="318.9" r="3.7" fill="#3877be" stroke="#000" stroke-width="1.1"/>
<circle cx="152.3" cy="322.1" r="3.7" fill="#3877be" stroke="#000" stroke-width="1.1"/>
<circle cx="146.6" cy="318.1" r="3.7" fill="#3877be" stroke="#000" stroke-width="1.1"/>
<circle cx="157.9" cy="327.8" r="3.7" fill="#3877be" stroke="#000" stroke-width="1.1"/>
<circle cx="165.2" cy="330.2" r="3.7" fill="#3877be" stroke="#000" stroke-width="1.1"/>
<circle cx="171.7" cy="318.1" r="3.7" fill="#3877be" stroke="#000" stroke-width="1.1"/>
<circle cx="167.7" cy="324.6" r="3.7" fill="#3877be" stroke="#000" stroke-width="1.1"/>
<circle cx="187.9" cy="322.9" r="3.7" fill="#3877be" stroke="#000" stroke-width="1.1"/>
<circle cx="193.5" cy="326.2" r="3.7" fill="#3877be" stroke="#000" stroke-width="1.1"/>
<circle cx="188.7" cy="329.4" r="3.7" fill="#3877be" stroke="#000" stroke-width="1.1"/>
<circle cx="200.8" cy="327.0" r="3.7" fill="#3877be" stroke="#000" stroke-width="1.1"/>
<circle cx="205.7" cy="332.7" r="3.7" fill="#3877be" stroke="#000" stroke-width="1.1"/>
<circle cx="216.2" cy="322.1" r="3.7" fill="#3877be" stroke="#000" stroke-width="1.1"/>
<circle cx="225.9" cy="321.3" r="3.7" fill="#3877be" stroke="#000" stroke-width="1.1"/>
<circle cx="218.6" cy="327.0" r="3.7" fill="#3877be" stroke="#000" stroke-width="1.1"/>
<circle cx="398.3" cy="227.5" r="3.7" fill="#3877be" stroke="#000" stroke-width="1.1"/>
<circle cx="393.4" cy="233.1" r="3.7" fill="#3877be" stroke="#000" stroke-width="1.1"/>
<circle cx="401.5" cy="233.1" r="3.7" fill="#3877be" stroke="#000" stroke-width="1.1"/>
<circle cx="395.0" cy="240.4" r="3.7" fill="#3877be" stroke="#000" stroke-width="1.1"/>
<circle cx="401.5" cy="242.0" r="3.7" fill="#3877be" stroke="#000" stroke-width="1.1"/>
<circle cx="403.1" cy="246.9" r="3.7" fill="#3877be" stroke="#000" stroke-width="1.1"/>
<circle cx="382.1" cy="250.1" r="3.7" fill="#3877be" stroke="#000" stroke-width="1.1"/>
<circle cx="388.6" cy="250.1" r="3.7" fill="#3877be" stroke="#000" stroke-width="1.1"/>
<circle cx="396.7" cy="250.9" r="3.7" fill="#3877be" stroke="#000" stroke-width="1.1"/>
<circle cx="407.2" cy="255.0" r="3.7" fill="#3877be" stroke="#000" stroke-width="1.1"/>
<circle cx="404.7" cy="258.2" r="3.7" fill="#3877be" stroke="#000" stroke-width="1.1"/>
<circle cx="390.2" cy="259.8" r="3.7" fill="#3877be" stroke="#000" stroke-width="1.1"/>
<circle cx="396.7" cy="260.6" r="3.7" fill="#3877be" stroke="#000" stroke-width="1.1"/>
<circle cx="382.1" cy="264.7" r="3.7" fill="#3877be" stroke="#000" stroke-width="1.1"/>
<circle cx="388.6" cy="265.5" r="3.7" fill="#3877be" stroke="#000" stroke-width="1.1"/>
<circle cx="393.4" cy="273.6" r="3.7" fill="#3877be" stroke="#000" stroke-width="1.1"/>
<circle cx="373.2" cy="271.2" r="3.7" fill="#3877be" stroke="#000" stroke-width="1.1"/>
<circle cx="374.8" cy="273.6" r="3.7" fill="#3877be" stroke="#000" stroke-width="1.1"/>
<circle cx="382.1" cy="279.3" r="3.7" fill="#3877be" stroke="#000" stroke-width="1.1"/>
<circle cx="403.9" cy="279.3" r="3.7" fill="#3877be" stroke="#000" stroke-width="1.1"/>
<circle cx="408.8" cy="265.5" r="3.7" fill="#3877be" stroke="#000" stroke-width="1.1"/>
<circle cx="419.3" cy="246.9" r="3.7" fill="#3877be" stroke="#000" stroke-width="1.1"/>
<circle cx="425.0" cy="245.3" r="3.7" fill="#3877be" stroke="#000" stroke-width="1.1"/>
<circle cx="419.3" cy="250.9" r="3.7" fill="#3877be" stroke="#000" stroke-width="1.1"/>
<circle cx="435.5" cy="230.7" r="3.7" fill="#3877be" stroke="#000" stroke-width="1.1"/>
<circle cx="442.8" cy="244.5" r="3.7" fill="#3877be" stroke="#000" stroke-width="1.1"/>
<circle cx="440.3" cy="259.0" r="3.7" fill="#3877be" stroke="#000" stroke-width="1.1"/>
<circle cx="420.1" cy="262.3" r="3.7" fill="#3877be" stroke="#000" stroke-width="1.1"/>
<circle cx="428.2" cy="262.3" r="3.7" fill="#3877be" stroke="#000" stroke-width="1.1"/>
<circle cx="419.3" cy="273.6" r="3.7" fill="#3877be" stroke="#000" stroke-width="1.1"/>
<circle cx="424.2" cy="282.5" r="3.7" fill="#3877be" stroke="#000" stroke-width="1.1"/>
<circle cx="418.5" cy="286.5" r="3.7" fill="#3877be" stroke="#000" stroke-width="1.1"/>
<circle cx="429.8" cy="289.8" r="3.7" fill="#3877be" stroke="#000" stroke-width="1.1"/>
<circle cx="435.5" cy="293.8" r="3.7" fill="#3877be" stroke="#000" stroke-width="1.1"/>
<circle cx="417.7" cy="294.6" r="3.7" fill="#3877be" stroke="#000" stroke-width="1.1"/>
<circle cx="419.3" cy="301.1" r="3.7" fill="#3877be" stroke="#000" stroke-width="1.1"/>
<circle cx="409.6" cy="306.8" r="3.7" fill="#3877be" stroke="#000" stroke-width="1.1"/>
<circle cx="416.9" cy="308.4" r="3.7" fill="#3877be" stroke="#000" stroke-width="1.1"/>
<circle cx="422.5" cy="306.8" r="3.7" fill="#3877be" stroke="#000" stroke-width="1.1"/>
<circle cx="429.0" cy="305.1" r="3.7" fill="#3877be" stroke="#000" stroke-width="1.1"/>
<circle cx="382.1" cy="302.7" r="3.7" fill="#3877be" stroke="#000" stroke-width="1.1"/>
<circle cx="386.1" cy="301.1" r="3.7" fill="#3877be" stroke="#000" stroke-width="1.1"/>
<circle cx="391.0" cy="299.5" r="3.7" fill="#3877be" stroke="#000" stroke-width="1.1"/>
<circle cx="379.7" cy="310.0" r="3.7" fill="#3877be" stroke="#000" stroke-width="1.1"/>
<circle cx="349.7" cy="271.2" r="3.7" fill="#3877be" stroke="#000" stroke-width="1.1"/>
<circle cx="357.8" cy="271.2" r="3.7" fill="#3877be" stroke="#000" stroke-width="1.1"/>
<circle cx="365.1" cy="274.4" r="3.7" fill="#3877be" stroke="#000" stroke-width="1.1"/>
<circle cx="351.3" cy="278.4" r="3.7" fill="#3877be" stroke="#000" stroke-width="1.1"/>
<circle cx="358.6" cy="280.1" r="3.7" fill="#3877be" stroke="#000" stroke-width="1.1"/>
<circle cx="363.5" cy="280.1" r="3.7" fill="#3877be" stroke="#000" stroke-width="1.1"/>
<circle cx="340.0" cy="283.3" r="3.7" fill="#3877be" stroke="#000" stroke-width="1.1"/>
<circle cx="345.7" cy="285.7" r="3.7" fill="#3877be" stroke="#000" stroke-width="1.1"/>
<circle cx="350.5" cy="285.7" r="3.7" fill="#3877be" stroke="#000" stroke-width="1.1"/>
<circle cx="349.7" cy="290.6" r="3.7" fill="#3877be" stroke="#000" stroke-width="1.1"/>
<circle cx="336.0" cy="291.4" r="3.7" fill="#3877be" stroke="#000" stroke-width="1.1"/>
<circle cx="338.4" cy="293.0" r="3.7" fill="#3877be" stroke="#000" stroke-width="1.1"/>
<circle cx="358.6" cy="292.2" r="3.7" fill="#3877be" stroke="#000" stroke-width="1.1"/>
<circle cx="319.8" cy="295.4" r="3.7" fill="#3877be" stroke="#000" stroke-width="1.1"/>
<circle cx="327.9" cy="297.9" r="3.7" fill="#3877be" stroke="#000" stroke-width="1.1"/>
<circle cx="328.7" cy="303.5" r="3.7" fill="#3877be" stroke="#000" stroke-width="1.1"/>
<circle cx="332.7" cy="311.6" r="3.7" fill="#3877be" stroke="#000" stroke-width="1.1"/>
<circle cx="318.2" cy="307.6" r="3.7" fill="#3877be" stroke="#000" stroke-width="1.1"/>
<circle cx="313.3" cy="300.3" r="3.7" fill="#3877be" stroke="#000" stroke-width="1.1"/>
<circle cx="305.2" cy="301.9" r="3.7" fill="#3877be" stroke="#000" stroke-width="1.1"/>
<circle cx="307.7" cy="308.4" r="3.7" fill="#3877be" stroke="#000" stroke-width="1.1"/>
<circle cx="293.9" cy="308.4" r="3.7" fill="#3877be" stroke="#000" stroke-width="1.1"/>
<circle cx="286.6" cy="313.2" r="3.7" fill="#3877be" stroke="#000" stroke-width="1.1"/>
<circle cx="293.1" cy="314.9" r="3.7" fill="#3877be" stroke="#000" stroke-width="1.1"/>
<circle cx="302.8" cy="316.5" r="3.7" fill="#3877be" stroke="#000" stroke-width="1.1"/>
<circle cx="309.3" cy="321.3" r="3.7" fill="#3877be" stroke="#000" stroke-width="1.1"/>
<circle cx="318.2" cy="320.5" r="3.7" fill="#3877be" stroke="#000" stroke-width="1.1"/>
<circle cx="325.5" cy="321.3" r="3.7" fill="#3877be" stroke="#000" stroke-width="1.1"/>
<circle cx="323.8" cy="328.6" r="3.7" fill="#3877be" stroke="#000" stroke-width="1.1"/>
<circle cx="306.8" cy="329.4" r="3.7" fill="#3877be" stroke="#000" stroke-width="1.1"/>
<circle cx="297.9" cy="335.1" r="3.7" fill="#3877be" stroke="#000" stroke-width="1.1"/>
<circle cx="304.4" cy="337.5" r="3.7" fill="#3877be" stroke="#000" stroke-width="1.1"/>
<circle cx="350.5" cy="322.1" r="3.7" fill="#3877be" stroke="#000" stroke-width="1.1"/>
<circle cx="408.0" cy="330.2" r="3.7" fill="#3877be" stroke="#000" stroke-width="1.1"/>
<circle cx="414.4" cy="335.1" r="3.7" fill="#3877be" stroke="#000" stroke-width="1.1"/>
<circle cx="429.0" cy="326.2" r="3.7" fill="#3877be" stroke="#000" stroke-width="1.1"/>
<circle cx="431.4" cy="331.8" r="3.7" fill="#3877be" stroke="#000" stroke-width="1.1"/>
<circle cx="398.3" cy="340.7" r="3.7" fill="#3877be" stroke="#000" stroke-width="1.1"/>
<circle cx="164.4" cy="331.8" r="3.7" fill="#3877be" stroke="#000" stroke-width="1.1"/>
<circle cx="161.2" cy="348.8" r="3.7" fill="#3877be" stroke="#000" stroke-width="1.1"/>
<circle cx="170.1" cy="349.6" r="3.7" fill="#3877be" stroke="#000" stroke-width="1.1"/>
<circle cx="191.9" cy="350.4" r="3.7" fill="#3877be" stroke="#000" stroke-width="1.1"/>
<circle cx="214.6" cy="343.1" r="3.7" fill="#3877be" stroke="#000" stroke-width="1.1"/>
<circle cx="190.3" cy="345.6" r="3.7" fill="#3877be" stroke="#000" stroke-width="1.1"/>
<circle cx="188.7" cy="331.0" r="3.7" fill="#3877be" stroke="#000" stroke-width="1.1"/>
<circle cx="206.5" cy="332.6" r="3.7" fill="#3877be" stroke="#000" stroke-width="1.1"/>
<circle cx="227.5" cy="348.8" r="3.7" fill="#3877be" stroke="#000" stroke-width="1.1"/>
<circle cx="237.2" cy="345.6" r="3.7" fill="#3877be" stroke="#000" stroke-width="1.1"/>
<circle cx="251.0" cy="333.4" r="3.7" fill="#3877be" stroke="#000" stroke-width="1.1"/>
<circle cx="255.0" cy="358.5" r="3.7" fill="#3877be" stroke="#000" stroke-width="1.1"/>
<circle cx="223.5" cy="373.9" r="3.7" fill="#3877be" stroke="#000" stroke-width="1.1"/>
<circle cx="246.1" cy="387.6" r="3.7" fill="#3877be" stroke="#000" stroke-width="1.1"/>
<circle cx="261.5" cy="377.9" r="3.7" fill="#3877be" stroke="#000" stroke-width="1.1"/>
<circle cx="263.1" cy="382.8" r="3.7" fill="#3877be" stroke="#000" stroke-width="1.1"/>
<circle cx="256.7" cy="394.9" r="3.7" fill="#3877be" stroke="#000" stroke-width="1.1"/>
<circle cx="264.7" cy="395.7" r="3.7" fill="#3877be" stroke="#000" stroke-width="1.1"/>
<circle cx="274.4" cy="386.0" r="3.7" fill="#3877be" stroke="#000" stroke-width="1.1"/>
<circle cx="276.1" cy="377.1" r="3.7" fill="#3877be" stroke="#000" stroke-width="1.1"/>
<circle cx="282.5" cy="381.2" r="3.7" fill="#3877be" stroke="#000" stroke-width="1.1"/>
<circle cx="287.4" cy="368.2" r="3.7" fill="#3877be" stroke="#000" stroke-width="1.1"/>
<circle cx="289.0" cy="374.7" r="3.7" fill="#3877be" stroke="#000" stroke-width="1.1"/>
<circle cx="296.3" cy="367.4" r="3.7" fill="#3877be" stroke="#000" stroke-width="1.1"/>
<circle cx="294.7" cy="360.9" r="3.7" fill="#3877be" stroke="#000" stroke-width="1.1"/>
<circle cx="300.3" cy="356.1" r="3.7" fill="#3877be" stroke="#000" stroke-width="1.1"/>
<circle cx="298.7" cy="335.9" r="3.7" fill="#3877be" stroke="#000" stroke-width="1.1"/>
<circle cx="303.6" cy="341.5" r="3.7" fill="#3877be" stroke="#000" stroke-width="1.1"/>
<circle cx="269.6" cy="393.3" r="3.7" fill="#3877be" stroke="#000" stroke-width="1.1"/>
<circle cx="274.4" cy="396.5" r="3.7" fill="#3877be" stroke="#000" stroke-width="1.1"/>
<circle cx="268.0" cy="399.0" r="3.7" fill="#3877be" stroke="#000" stroke-width="1.1"/>
<circle cx="280.9" cy="399.0" r="3.7" fill="#3877be" stroke="#000" stroke-width="1.1"/>
<circle cx="282.5" cy="408.7" r="3.7" fill="#3877be" stroke="#000" stroke-width="1.1"/>
<circle cx="285.8" cy="407.1" r="3.7" fill="#3877be" stroke="#000" stroke-width="1.1"/>
<circle cx="300.3" cy="399.8" r="3.7" fill="#3877be" stroke="#000" stroke-width="1.1"/>
<circle cx="274.4" cy="410.3" r="3.7" fill="#3877be" stroke="#000" stroke-width="1.1"/>
<circle cx="267.2" cy="409.5" r="3.7" fill="#3877be" stroke="#000" stroke-width="1.1"/>
<circle cx="263.1" cy="415.1" r="3.7" fill="#3877be" stroke="#000" stroke-width="1.1"/>
<circle cx="260.7" cy="420.0" r="3.7" fill="#3877be" stroke="#000" stroke-width="1.1"/>
<circle cx="272.8" cy="428.1" r="3.7" fill="#3877be" stroke="#000" stroke-width="1.1"/>
<circle cx="277.7" cy="423.2" r="3.7" fill="#3877be" stroke="#000" stroke-width="1.1"/>
<circle cx="272.8" cy="439.4" r="3.7" fill="#3877be" stroke="#000" stroke-width="1.1"/>
<circle cx="302.0" cy="429.7" r="3.7" fill="#3877be" stroke="#000" stroke-width="1.1"/>
<circle cx="297.9" cy="335.9" r="3.7" fill="#3877be" stroke="#000" stroke-width="1.1"/>
<circle cx="304.4" cy="338.3" r="3.7" fill="#3877be" stroke="#000" stroke-width="1.1"/>
<circle cx="307.7" cy="331.0" r="3.7" fill="#3877be" stroke="#000" stroke-width="1.1"/>
<circle cx="303.6" cy="343.9" r="3.7" fill="#3877be" stroke="#000" stroke-width="1.1"/>
<circle cx="306.8" cy="343.1" r="3.7" fill="#3877be" stroke="#000" stroke-width="1.1"/>
<circle cx="301.2" cy="355.3" r="3.7" fill="#3877be" stroke="#000" stroke-width="1.1"/>
<circle cx="305.2" cy="356.1" r="3.7" fill="#3877be" stroke="#000" stroke-width="1.1"/>
<circle cx="304.4" cy="360.9" r="3.7" fill="#3877be" stroke="#000" stroke-width="1.1"/>
<circle cx="294.7" cy="360.9" r="3.7" fill="#3877be" stroke="#000" stroke-width="1.1"/>
<circle cx="295.5" cy="366.6" r="3.7" fill="#3877be" stroke="#000" stroke-width="1.1"/>
<circle cx="287.4" cy="369.0" r="3.7" fill="#3877be" stroke="#000" stroke-width="1.1"/>
<circle cx="289.0" cy="374.7" r="3.7" fill="#3877be" stroke="#000" stroke-width="1.1"/>
<circle cx="306.0" cy="374.7" r="3.7" fill="#3877be" stroke="#000" stroke-width="1.1"/>
<circle cx="306.0" cy="382.0" r="3.7" fill="#3877be" stroke="#000" stroke-width="1.1"/>
<circle cx="306.8" cy="387.6" r="3.7" fill="#3877be" stroke="#000" stroke-width="1.1"/>
<circle cx="316.6" cy="362.6" r="3.7" fill="#3877be" stroke="#000" stroke-width="1.1"/>
<circle cx="331.1" cy="389.3" r="3.7" fill="#3877be" stroke="#000" stroke-width="1.1"/>
<circle cx="313.3" cy="397.3" r="3.7" fill="#3877be" stroke="#000" stroke-width="1.1"/>
<circle cx="314.9" cy="400.6" r="3.7" fill="#3877be" stroke="#000" stroke-width="1.1"/>
<circle cx="323.0" cy="396.5" r="3.7" fill="#3877be" stroke="#000" stroke-width="1.1"/>
<circle cx="332.7" cy="400.6" r="3.7" fill="#3877be" stroke="#000" stroke-width="1.1"/>
<circle cx="300.4" cy="399.8" r="3.7" fill="#3877be" stroke="#000" stroke-width="1.1"/>
<circle cx="292.3" cy="399.8" r="3.7" fill="#3877be" stroke="#000" stroke-width="1.1"/>
<circle cx="286.6" cy="407.1" r="3.7" fill="#3877be" stroke="#000" stroke-width="1.1"/>
<circle cx="298.8" cy="416.8" r="3.7" fill="#3877be" stroke="#000" stroke-width="1.1"/>
<circle cx="308.5" cy="422.4" r="3.7" fill="#3877be" stroke="#000" stroke-width="1.1"/>
<circle cx="301.2" cy="428.1" r="3.7" fill="#3877be" stroke="#000" stroke-width="1.1"/>
<circle cx="306.0" cy="432.1" r="3.7" fill="#3877be" stroke="#000" stroke-width="1.1"/>
<circle cx="309.3" cy="434.6" r="3.7" fill="#3877be" stroke="#000" stroke-width="1.1"/>
<circle cx="307.7" cy="441.0" r="3.7" fill="#3877be" stroke="#000" stroke-width="1.1"/>
<circle cx="311.7" cy="440.2" r="3.7" fill="#3877be" stroke="#000" stroke-width="1.1"/>
<circle cx="315.7" cy="447.5" r="3.7" fill="#3877be" stroke="#000" stroke-width="1.1"/>
<circle cx="318.2" cy="427.3" r="3.7" fill="#3877be" stroke="#000" stroke-width="1.1"/>
<circle cx="322.2" cy="429.7" r="3.7" fill="#3877be" stroke="#000" stroke-width="1.1"/>
<circle cx="353.0" cy="392.5" r="3.7" fill="#3877be" stroke="#000" stroke-width="1.1"/>
<circle cx="361.9" cy="395.7" r="3.7" fill="#3877be" stroke="#000" stroke-width="1.1"/>
<circle cx="370.0" cy="394.4" r="3.7" fill="#3877be" stroke="#000" stroke-width="1.1"/>
<circle cx="362.3" cy="404.6" r="3.7" fill="#3877be" stroke="#000" stroke-width="1.1"/>
<circle cx="399.1" cy="341.5" r="3.7" fill="#3877be" stroke="#000" stroke-width="1.1"/>
<circle cx="413.6" cy="335.0" r="3.7" fill="#3877be" stroke="#000" stroke-width="1.1"/>
<circle cx="416.9" cy="352.8" r="3.7" fill="#3877be" stroke="#000" stroke-width="1.1"/>
<circle cx="408.0" cy="331.8" r="3.7" fill="#3877be" stroke="#000" stroke-width="1.1"/>
<circle cx="430.6" cy="332.6" r="3.7" fill="#3877be" stroke="#000" stroke-width="1.1"/>
<circle cx="241.7" cy="481.7" r="3.7" fill="#3877be" stroke="#000" stroke-width="1.1"/>
<circle cx="272.8" cy="441.0" r="3.7" fill="#3877be" stroke="#000" stroke-width="1.1"/>
<circle cx="306.7" cy="441.9" r="3.7" fill="#3877be" stroke="#000" stroke-width="1.1"/>
<circle cx="315.9" cy="447.4" r="3.7" fill="#3877be" stroke="#000" stroke-width="1.1"/>
<circle cx="305.8" cy="460.2" r="3.7" fill="#3877be" stroke="#000" stroke-width="1.1"/>
<circle cx="299.4" cy="467.6" r="3.7" fill="#3877be" stroke="#000" stroke-width="1.1"/>
<circle cx="310.9" cy="472.5" r="3.7" fill="#3877be" stroke="#000" stroke-width="1.1"/>
<circle cx="319.6" cy="473.6" r="3.7" fill="#3877be" stroke="#000" stroke-width="1.1"/>
<circle cx="323.8" cy="473.6" r="3.7" fill="#3877be" stroke="#000" stroke-width="1.1"/>
<circle cx="317.7" cy="488.3" r="3.7" fill="#3877be" stroke="#000" stroke-width="1.1"/>
<circle cx="315.0" cy="510.3" r="3.7" fill="#3877be" stroke="#000" stroke-width="1.1"/>
<circle cx="314.6" cy="525.7" r="3.7" fill="#3877be" stroke="#000" stroke-width="1.1"/>
<circle cx="435.5" cy="230.7" r="3.7" fill="#3877be" stroke="#000" stroke-width="1.1"/>
<circle cx="443.6" cy="244.8" r="3.7" fill="#3877be" stroke="#000" stroke-width="1.1"/>
<circle cx="445.6" cy="254.3" r="3.7" fill="#3877be" stroke="#000" stroke-width="1.1"/>
<circle cx="440.8" cy="259.0" r="3.7" fill="#3877be" stroke="#000" stroke-width="1.1"/>
<circle cx="427.4" cy="262.4" r="3.7" fill="#3877be" stroke="#000" stroke-width="1.1"/>
<circle cx="426.0" cy="245.2" r="3.7" fill="#3877be" stroke="#000" stroke-width="1.1"/>
<circle cx="429.0" cy="289.7" r="3.7" fill="#3877be" stroke="#000" stroke-width="1.1"/>
<circle cx="436.1" cy="293.7" r="3.7" fill="#3877be" stroke="#000" stroke-width="1.1"/>
<circle cx="428.6" cy="304.2" r="3.7" fill="#3877be" stroke="#000" stroke-width="1.1"/>
<circle cx="466.4" cy="304.2" r="3.7" fill="#3877be" stroke="#000" stroke-width="1.1"/>
<circle cx="429.0" cy="326.1" r="3.7" fill="#3877be" stroke="#000" stroke-width="1.1"/>
<circle cx="431.1" cy="331.7" r="3.7" fill="#3877be" stroke="#000" stroke-width="1.1"/>
<circle cx="426.0" cy="281.6" r="3.7" fill="#3877be" stroke="#000" stroke-width="1.1"/>
<circle cx="238.6" cy="281.7" r="3.7" fill="#3877be" stroke="#000" stroke-width="1.1"/>
<circle cx="247.1" cy="277.4" r="3.7" fill="#3877be" stroke="#000" stroke-width="1.1"/>
<circle cx="255.6" cy="278.6" r="3.7" fill="#3877be" stroke="#000" stroke-width="1.1"/>
<circle cx="253.8" cy="285.3" r="3.7" fill="#3877be" stroke="#000" stroke-width="1.1"/>
<circle cx="247.7" cy="290.8" r="3.7" fill="#3877be" stroke="#000" stroke-width="1.1"/>
<circle cx="263.5" cy="270.1" r="3.7" fill="#3877be" stroke="#000" stroke-width="1.1"/>
<circle cx="265.9" cy="287.1" r="3.7" fill="#3877be" stroke="#000" stroke-width="1.1"/>
<circle cx="267.8" cy="294.4" r="3.7" fill="#3877be" stroke="#000" stroke-width="1.1"/>
<circle cx="261.7" cy="298.0" r="3.7" fill="#3877be" stroke="#000" stroke-width="1.1"/>
<circle cx="253.2" cy="297.4" r="3.7" fill="#3877be" stroke="#000" stroke-width="1.1"/>
<circle cx="261.1" cy="305.9" r="3.7" fill="#3877be" stroke="#000" stroke-width="1.1"/>
<circle cx="253.2" cy="304.7" r="3.7" fill="#3877be" stroke="#000" stroke-width="1.1"/>
<circle cx="271.4" cy="287.1" r="3.7" fill="#3877be" stroke="#000" stroke-width="1.1"/>
<circle cx="278.1" cy="309.0" r="3.7" fill="#3877be" stroke="#000" stroke-width="1.1"/>
<circle cx="271.4" cy="315.0" r="3.7" fill="#3877be" stroke="#000" stroke-width="1.1"/>
<circle cx="272.6" cy="324.7" r="3.7" fill="#3877be" stroke="#000" stroke-width="1.1"/>
<circle cx="252.6" cy="315.0" r="3.7" fill="#3877be" stroke="#000" stroke-width="1.1"/>
<circle cx="239.9" cy="324.7" r="3.7" fill="#3877be" stroke="#000" stroke-width="1.1"/>
<circle cx="243.5" cy="317.5" r="3.7" fill="#3877be" stroke="#000" stroke-width="1.1"/>
<circle cx="248.3" cy="329.6" r="3.7" fill="#3877be" stroke="#000" stroke-width="1.1"/>
<circle cx="286.0" cy="313.8" r="3.7" fill="#3877be" stroke="#000" stroke-width="1.1"/>
<circle cx="293.9" cy="315.0" r="3.7" fill="#3877be" stroke="#000" stroke-width="1.1"/>
<circle cx="298.1" cy="318.7" r="3.7" fill="#3877be" stroke="#000" stroke-width="1.1"/>
<circle cx="289.6" cy="318.7" r="3.7" fill="#3877be" stroke="#000" stroke-width="1.1"/>
<circle cx="305.4" cy="313.8" r="3.7" fill="#3877be" stroke="#000" stroke-width="1.1"/>
<circle cx="310.2" cy="309.0" r="3.7" fill="#3877be" stroke="#000" stroke-width="1.1"/>
<circle cx="305.4" cy="304.1" r="3.7" fill="#3877be" stroke="#000" stroke-width="1.1"/>
<circle cx="312.7" cy="300.5" r="3.7" fill="#3877be" stroke="#000" stroke-width="1.1"/>
<circle cx="320.0" cy="295.6" r="3.7" fill="#3877be" stroke="#000" stroke-width="1.1"/>
<circle cx="327.2" cy="298.0" r="3.7" fill="#3877be" stroke="#000" stroke-width="1.1"/>
<circle cx="328.4" cy="305.3" r="3.7" fill="#3877be" stroke="#000" stroke-width="1.1"/>
<circle cx="318.7" cy="307.7" r="3.7" fill="#3877be" stroke="#000" stroke-width="1.1"/>
<circle cx="333.3" cy="311.4" r="3.7" fill="#3877be" stroke="#000" stroke-width="1.1"/>
<circle cx="317.5" cy="321.1" r="3.7" fill="#3877be" stroke="#000" stroke-width="1.1"/>
<circle cx="324.8" cy="321.1" r="3.7" fill="#3877be" stroke="#000" stroke-width="1.1"/>
<circle cx="310.2" cy="323.5" r="3.7" fill="#3877be" stroke="#000" stroke-width="1.1"/>
<circle cx="307.8" cy="329.6" r="3.7" fill="#3877be" stroke="#000" stroke-width="1.1"/>
<circle cx="322.4" cy="328.4" r="3.7" fill="#3877be" stroke="#000" stroke-width="1.1"/>
<circle cx="300.5" cy="301.7" r="3.7" fill="#3877be" stroke="#000" stroke-width="1.1"/>
<circle cx="335.7" cy="292.0" r="3.7" fill="#3877be" stroke="#000" stroke-width="1.1"/>
<circle cx="341.8" cy="282.3" r="3.7" fill="#3877be" stroke="#000" stroke-width="1.1"/>
<circle cx="345.4" cy="285.9" r="3.7" fill="#3877be" stroke="#000" stroke-width="1.1"/>
<circle cx="350.3" cy="288.3" r="3.7" fill="#3877be" stroke="#000" stroke-width="1.1"/>
<circle cx="349.1" cy="276.2" r="3.7" fill="#3877be" stroke="#000" stroke-width="1.1"/>
<circle cx="352.7" cy="270.1" r="3.7" fill="#3877be" stroke="#000" stroke-width="1.1"/>
<circle cx="353.9" cy="281.0" r="3.7" fill="#3877be" stroke="#000" stroke-width="1.1"/>
<circle cx="350.3" cy="322.3" r="3.7" fill="#3877be" stroke="#000" stroke-width="1.1"/>
<circle cx="293.3" cy="306.5" r="3.7" fill="#3877be" stroke="#000" stroke-width="1.1"/>
<circle cx="286.0" cy="306.5" r="3.7" fill="#3877be" stroke="#000" stroke-width="1.1"/>
<circle cx="301.5" cy="104.8" r="3.7" fill="#2c6a0c" stroke="#000" stroke-width="1.1"/>
<circle cx="273.4" cy="120.3" r="3.7" fill="#2c6a0c" stroke="#000" stroke-width="1.1"/>
<circle cx="276.9" cy="119.7" r="3.7" fill="#2c6a0c" stroke="#000" stroke-width="1.1"/>
<circle cx="285.0" cy="119.7" r="3.7" fill="#2c6a0c" stroke="#000" stroke-width="1.1"/>
<circle cx="292.8" cy="119.7" r="3.7" fill="#2c6a0c" stroke="#000" stroke-width="1.1"/>
<circle cx="541.0" cy="67.3" r="3.7" fill="#2c6a0c" stroke="#000" stroke-width="1.1"/>
<circle cx="533.8" cy="70.8" r="3.7" fill="#2c6a0c" stroke="#000" stroke-width="1.1"/>
<circle cx="528.0" cy="76.6" r="3.7" fill="#2c6a0c" stroke="#000" stroke-width="1.1"/>
<circle cx="543.9" cy="83.4" r="3.7" fill="#2c6a0c" stroke="#000" stroke-width="1.1"/>
<circle cx="532.2" cy="87.3" r="3.7" fill="#2c6a0c" stroke="#000" stroke-width="1.1"/>
<circle cx="543.9" cy="89.2" r="3.7" fill="#2c6a0c" stroke="#000" stroke-width="1.1"/>
<circle cx="530.3" cy="91.8" r="3.7" fill="#2c6a0c" stroke="#000" stroke-width="1.1"/>
<circle cx="539.6" cy="93.7" r="3.7" fill="#2c6a0c" stroke="#000" stroke-width="1.1"/>
<circle cx="474.0" cy="97.6" r="3.7" fill="#2c6a0c" stroke="#000" stroke-width="1.1"/>
<circle cx="495.8" cy="106.3" r="3.7" fill="#2c6a0c" stroke="#000" stroke-width="1.1"/>
<circle cx="502.8" cy="110.6" r="3.7" fill="#2c6a0c" stroke="#000" stroke-width="1.1"/>
<circle cx="500.2" cy="114.5" r="3.7" fill="#2c6a0c" stroke="#000" stroke-width="1.1"/>
<circle cx="475.0" cy="110.6" r="3.7" fill="#2c6a0c" stroke="#000" stroke-width="1.1"/>
<circle cx="476.9" cy="111.2" r="3.7" fill="#2c6a0c" stroke="#000" stroke-width="1.1"/>
<circle cx="483.7" cy="115.4" r="3.7" fill="#2c6a0c" stroke="#000" stroke-width="1.1"/>
<circle cx="477.5" cy="118.3" r="3.7" fill="#2c6a0c" stroke="#000" stroke-width="1.1"/>
<circle cx="490.5" cy="120.3" r="3.7" fill="#2c6a0c" stroke="#000" stroke-width="1.1"/>
<circle cx="493.0" cy="126.7" r="3.7" fill="#2c6a0c" stroke="#000" stroke-width="1.1"/>
<circle cx="554.6" cy="118.3" r="3.7" fill="#2c6a0c" stroke="#000" stroke-width="1.1"/>
<circle cx="549.7" cy="128.1" r="3.7" fill="#2c6a0c" stroke="#000" stroke-width="1.1"/>
<circle cx="545.8" cy="134.8" r="3.7" fill="#2c6a0c" stroke="#000" stroke-width="1.1"/>
<circle cx="503.1" cy="138.7" r="3.7" fill="#2c6a0c" stroke="#000" stroke-width="1.1"/>
<circle cx="535.2" cy="138.7" r="3.7" fill="#2c6a0c" stroke="#000" stroke-width="1.1"/>
<circle cx="586.0" cy="127.7" r="3.7" fill="#2c6a0c" stroke="#000" stroke-width="1.1"/>
<circle cx="580.1" cy="135.8" r="3.7" fill="#2c6a0c" stroke="#000" stroke-width="1.1"/>
<circle cx="567.9" cy="142.6" r="3.7" fill="#2c6a0c" stroke="#000" stroke-width="1.1"/>
<circle cx="181.4" cy="178.9" r="3.7" fill="#2c6a0c" stroke="#000" stroke-width="1.1"/>
<circle cx="179.5" cy="179.9" r="3.7" fill="#2c6a0c" stroke="#000" stroke-width="1.1"/>
<circle cx="184.7" cy="191.5" r="3.7" fill="#2c6a0c" stroke="#000" stroke-width="1.1"/>
<circle cx="174.6" cy="212.5" r="3.7" fill="#2c6a0c" stroke="#000" stroke-width="1.1"/>
<circle cx="139.7" cy="216.7" r="3.7" fill="#2c6a0c" stroke="#000" stroke-width="1.1"/>
<circle cx="186.3" cy="216.7" r="3.7" fill="#2c6a0c" stroke="#000" stroke-width="1.1"/>
<circle cx="184.9" cy="220.6" r="3.7" fill="#2c6a0c" stroke="#000" stroke-width="1.1"/>
<circle cx="186.3" cy="224.5" r="3.7" fill="#2c6a0c" stroke="#000" stroke-width="1.1"/>
<circle cx="186.9" cy="230.3" r="3.7" fill="#2c6a0c" stroke="#000" stroke-width="1.1"/>
<circle cx="187.2" cy="243.9" r="3.7" fill="#2c6a0c" stroke="#000" stroke-width="1.1"/>
<circle cx="186.9" cy="251.7" r="3.7" fill="#2c6a0c" stroke="#000" stroke-width="1.1"/>
<circle cx="182.4" cy="260.4" r="3.7" fill="#2c6a0c" stroke="#000" stroke-width="1.1"/>
<circle cx="187.2" cy="263.3" r="3.7" fill="#2c6a0c" stroke="#000" stroke-width="1.1"/>
<circle cx="175.6" cy="276.5" r="3.7" fill="#2c6a0c" stroke="#000" stroke-width="1.1"/>
<circle cx="154.2" cy="287.0" r="3.7" fill="#2c6a0c" stroke="#000" stroke-width="1.1"/>
<circle cx="148.4" cy="287.0" r="3.7" fill="#2c6a0c" stroke="#000" stroke-width="1.1"/>
<circle cx="194.8" cy="165.9" r="3.7" fill="#2c6a0c" stroke="#000" stroke-width="1.1"/>
<circle cx="222.0" cy="163.0" r="3.7" fill="#2c6a0c" stroke="#000" stroke-width="1.1"/>
<circle cx="224.9" cy="164.9" r="3.7" fill="#2c6a0c" stroke="#000" stroke-width="1.1"/>
<circle cx="284.6" cy="168.6" r="3.7" fill="#2c6a0c" stroke="#000" stroke-width="1.1"/>
<circle cx="214.8" cy="190.7" r="3.7" fill="#2c6a0c" stroke="#000" stroke-width="1.1"/>
<circle cx="209.0" cy="199.7" r="3.7" fill="#2c6a0c" stroke="#000" stroke-width="1.1"/>
<circle cx="209.7" cy="198.9" r="3.7" fill="#2c6a0c" stroke="#000" stroke-width="1.1"/>
<circle cx="225.8" cy="198.9" r="3.7" fill="#2c6a0c" stroke="#000" stroke-width="1.1"/>
<circle cx="239.8" cy="200.6" r="3.7" fill="#2c6a0c" stroke="#000" stroke-width="1.1"/>
<circle cx="189.6" cy="215.8" r="3.7" fill="#2c6a0c" stroke="#000" stroke-width="1.1"/>
<circle cx="189.0" cy="220.6" r="3.7" fill="#2c6a0c" stroke="#000" stroke-width="1.1"/>
<circle cx="189.0" cy="230.3" r="3.7" fill="#2c6a0c" stroke="#000" stroke-width="1.1"/>
<circle cx="235.5" cy="210.5" r="3.7" fill="#2c6a0c" stroke="#000" stroke-width="1.1"/>
<circle cx="240.4" cy="213.8" r="3.7" fill="#2c6a0c" stroke="#000" stroke-width="1.1"/>
<circle cx="244.3" cy="216.4" r="3.7" fill="#2c6a0c" stroke="#000" stroke-width="1.1"/>
<circle cx="242.3" cy="219.7" r="3.7" fill="#2c6a0c" stroke="#000" stroke-width="1.1"/>
<circle cx="236.5" cy="221.6" r="3.7" fill="#2c6a0c" stroke="#000" stroke-width="1.1"/>
<circle cx="240.0" cy="226.8" r="3.7" fill="#2c6a0c" stroke="#000" stroke-width="1.1"/>
<circle cx="216.7" cy="230.3" r="3.7" fill="#2c6a0c" stroke="#000" stroke-width="1.1"/>
<circle cx="211.3" cy="234.2" r="3.7" fill="#2c6a0c" stroke="#000" stroke-width="1.1"/>
<circle cx="220.0" cy="237.7" r="3.7" fill="#2c6a0c" stroke="#000" stroke-width="1.1"/>
<circle cx="227.8" cy="235.8" r="3.7" fill="#2c6a0c" stroke="#000" stroke-width="1.1"/>
<circle cx="231.7" cy="233.8" r="3.7" fill="#2c6a0c" stroke="#000" stroke-width="1.1"/>
<circle cx="237.5" cy="231.9" r="3.7" fill="#2c6a0c" stroke="#000" stroke-width="1.1"/>
<circle cx="190.9" cy="245.9" r="3.7" fill="#2c6a0c" stroke="#000" stroke-width="1.1"/>
<circle cx="197.7" cy="242.0" r="3.7" fill="#2c6a0c" stroke="#000" stroke-width="1.1"/>
<circle cx="202.6" cy="243.9" r="3.7" fill="#2c6a0c" stroke="#000" stroke-width="1.1"/>
<circle cx="208.4" cy="242.9" r="3.7" fill="#2c6a0c" stroke="#000" stroke-width="1.1"/>
<circle cx="213.2" cy="243.9" r="3.7" fill="#2c6a0c" stroke="#000" stroke-width="1.1"/>
<circle cx="217.1" cy="249.3" r="3.7" fill="#2c6a0c" stroke="#000" stroke-width="1.1"/>
<circle cx="211.3" cy="248.8" r="3.7" fill="#2c6a0c" stroke="#000" stroke-width="1.1"/>
<circle cx="193.8" cy="254.6" r="3.7" fill="#2c6a0c" stroke="#000" stroke-width="1.1"/>
<circle cx="204.5" cy="255.6" r="3.7" fill="#2c6a0c" stroke="#000" stroke-width="1.1"/>
<circle cx="215.2" cy="255.6" r="3.7" fill="#2c6a0c" stroke="#000" stroke-width="1.1"/>
<circle cx="224.9" cy="254.6" r="3.7" fill="#2c6a0c" stroke="#000" stroke-width="1.1"/>
<circle cx="226.8" cy="248.8" r="3.7" fill="#2c6a0c" stroke="#000" stroke-width="1.1"/>
<circle cx="234.6" cy="244.9" r="3.7" fill="#2c6a0c" stroke="#000" stroke-width="1.1"/>
<circle cx="237.5" cy="254.6" r="3.7" fill="#2c6a0c" stroke="#000" stroke-width="1.1"/>
<circle cx="229.7" cy="262.3" r="3.7" fill="#2c6a0c" stroke="#000" stroke-width="1.1"/>
<circle cx="233.6" cy="266.2" r="3.7" fill="#2c6a0c" stroke="#000" stroke-width="1.1"/>
<circle cx="210.3" cy="260.4" r="3.7" fill="#2c6a0c" stroke="#000" stroke-width="1.1"/>
<circle cx="190.9" cy="263.3" r="3.7" fill="#2c6a0c" stroke="#000" stroke-width="1.1"/>
<circle cx="244.3" cy="259.0" r="3.7" fill="#2c6a0c" stroke="#000" stroke-width="1.1"/>
<circle cx="253.0" cy="260.4" r="3.7" fill="#2c6a0c" stroke="#000" stroke-width="1.1"/>
<circle cx="258.8" cy="260.4" r="3.7" fill="#2c6a0c" stroke="#000" stroke-width="1.1"/>
<circle cx="264.7" cy="259.4" r="3.7" fill="#2c6a0c" stroke="#000" stroke-width="1.1"/>
<circle cx="255.0" cy="267.2" r="3.7" fill="#2c6a0c" stroke="#000" stroke-width="1.1"/>
<circle cx="251.1" cy="270.1" r="3.7" fill="#2c6a0c" stroke="#000" stroke-width="1.1"/>
<circle cx="262.7" cy="270.1" r="3.7" fill="#2c6a0c" stroke="#000" stroke-width="1.1"/>
<circle cx="263.7" cy="238.1" r="3.7" fill="#2c6a0c" stroke="#000" stroke-width="1.1"/>
<circle cx="269.5" cy="237.7" r="3.7" fill="#2c6a0c" stroke="#000" stroke-width="1.1"/>
<circle cx="275.3" cy="234.2" r="3.7" fill="#2c6a0c" stroke="#000" stroke-width="1.1"/>
<circle cx="281.1" cy="231.3" r="3.7" fill="#2c6a0c" stroke="#000" stroke-width="1.1"/>
<circle cx="288.9" cy="230.3" r="3.7" fill="#2c6a0c" stroke="#000" stroke-width="1.1"/>
<circle cx="294.7" cy="229.4" r="3.7" fill="#2c6a0c" stroke="#000" stroke-width="1.1"/>
<circle cx="293.8" cy="236.1" r="3.7" fill="#2c6a0c" stroke="#000" stroke-width="1.1"/>
<circle cx="288.9" cy="242.0" r="3.7" fill="#2c6a0c" stroke="#000" stroke-width="1.1"/>
<circle cx="297.6" cy="245.9" r="3.7" fill="#2c6a0c" stroke="#000" stroke-width="1.1"/>
<circle cx="291.8" cy="250.7" r="3.7" fill="#2c6a0c" stroke="#000" stroke-width="1.1"/>
<circle cx="265.6" cy="247.8" r="3.7" fill="#2c6a0c" stroke="#000" stroke-width="1.1"/>
<circle cx="270.5" cy="244.9" r="3.7" fill="#2c6a0c" stroke="#000" stroke-width="1.1"/>
<circle cx="300.6" cy="222.6" r="3.7" fill="#2c6a0c" stroke="#000" stroke-width="1.1"/>
<circle cx="307.3" cy="207.6" r="3.7" fill="#2c6a0c" stroke="#000" stroke-width="1.1"/>
<circle cx="321.9" cy="210.0" r="3.7" fill="#2c6a0c" stroke="#000" stroke-width="1.1"/>
<circle cx="325.4" cy="211.9" r="3.7" fill="#2c6a0c" stroke="#000" stroke-width="1.1"/>
<circle cx="315.1" cy="235.8" r="3.7" fill="#2c6a0c" stroke="#000" stroke-width="1.1"/>
<circle cx="312.2" cy="242.0" r="3.7" fill="#2c6a0c" stroke="#000" stroke-width="1.1"/>
<circle cx="316.1" cy="247.8" r="3.7" fill="#2c6a0c" stroke="#000" stroke-width="1.1"/>
<circle cx="320.0" cy="253.6" r="3.7" fill="#2c6a0c" stroke="#000" stroke-width="1.1"/>
<circle cx="323.8" cy="248.8" r="3.7" fill="#2c6a0c" stroke="#000" stroke-width="1.1"/>
<circle cx="328.7" cy="252.6" r="3.7" fill="#2c6a0c" stroke="#000" stroke-width="1.1"/>
<circle cx="335.5" cy="253.6" r="3.7" fill="#2c6a0c" stroke="#000" stroke-width="1.1"/>
<circle cx="326.8" cy="259.4" r="3.7" fill="#2c6a0c" stroke="#000" stroke-width="1.1"/>
<circle cx="331.6" cy="265.3" r="3.7" fill="#2c6a0c" stroke="#000" stroke-width="1.1"/>
<circle cx="330.6" cy="269.1" r="3.7" fill="#2c6a0c" stroke="#000" stroke-width="1.1"/>
<circle cx="319.0" cy="259.4" r="3.7" fill="#2c6a0c" stroke="#000" stroke-width="1.1"/>
<circle cx="315.1" cy="263.3" r="3.7" fill="#2c6a0c" stroke="#000" stroke-width="1.1"/>
<circle cx="304.4" cy="251.7" r="3.7" fill="#2c6a0c" stroke="#000" stroke-width="1.1"/>
<circle cx="304.4" cy="255.6" r="3.7" fill="#2c6a0c" stroke="#000" stroke-width="1.1"/>
<circle cx="295.7" cy="260.4" r="3.7" fill="#2c6a0c" stroke="#000" stroke-width="1.1"/>
<circle cx="333.5" cy="237.1" r="3.7" fill="#2c6a0c" stroke="#000" stroke-width="1.1"/>
<circle cx="339.4" cy="236.1" r="3.7" fill="#2c6a0c" stroke="#000" stroke-width="1.1"/>
<circle cx="346.2" cy="239.1" r="3.7" fill="#2c6a0c" stroke="#000" stroke-width="1.1"/>
<circle cx="346.2" cy="242.0" r="3.7" fill="#2c6a0c" stroke="#000" stroke-width="1.1"/>
<circle cx="337.4" cy="246.8" r="3.7" fill="#2c6a0c" stroke="#000" stroke-width="1.1"/>
<circle cx="355.9" cy="232.3" r="3.7" fill="#2c6a0c" stroke="#000" stroke-width="1.1"/>
<circle cx="368.5" cy="225.5" r="3.7" fill="#2c6a0c" stroke="#000" stroke-width="1.1"/>
<circle cx="369.4" cy="229.4" r="3.7" fill="#2c6a0c" stroke="#000" stroke-width="1.1"/>
<circle cx="371.4" cy="237.1" r="3.7" fill="#2c6a0c" stroke="#000" stroke-width="1.1"/>
<circle cx="363.6" cy="238.1" r="3.7" fill="#2c6a0c" stroke="#000" stroke-width="1.1"/>
<circle cx="356.8" cy="243.9" r="3.7" fill="#2c6a0c" stroke="#000" stroke-width="1.1"/>
<circle cx="358.8" cy="249.7" r="3.7" fill="#2c6a0c" stroke="#000" stroke-width="1.1"/>
<circle cx="366.5" cy="248.8" r="3.7" fill="#2c6a0c" stroke="#000" stroke-width="1.1"/>
<circle cx="366.5" cy="255.6" r="3.7" fill="#2c6a0c" stroke="#000" stroke-width="1.1"/>
<circle cx="362.7" cy="259.4" r="3.7" fill="#2c6a0c" stroke="#000" stroke-width="1.1"/>
<circle cx="351.0" cy="259.4" r="3.7" fill="#2c6a0c" stroke="#000" stroke-width="1.1"/>
<circle cx="349.1" cy="264.3" r="3.7" fill="#2c6a0c" stroke="#000" stroke-width="1.1"/>
<circle cx="356.8" cy="264.3" r="3.7" fill="#2c6a0c" stroke="#000" stroke-width="1.1"/>
<circle cx="363.6" cy="265.3" r="3.7" fill="#2c6a0c" stroke="#000" stroke-width="1.1"/>
<circle cx="375.3" cy="205.1" r="3.7" fill="#2c6a0c" stroke="#000" stroke-width="1.1"/>
<circle cx="375.3" cy="211.9" r="3.7" fill="#2c6a0c" stroke="#000" stroke-width="1.1"/>
<circle cx="376.2" cy="220.6" r="3.7" fill="#2c6a0c" stroke="#000" stroke-width="1.1"/>
<circle cx="365.6" cy="214.8" r="3.7" fill="#2c6a0c" stroke="#000" stroke-width="1.1"/>
<circle cx="271.4" cy="271.1" r="3.7" fill="#2c6a0c" stroke="#000" stroke-width="1.1"/>
<circle cx="276.3" cy="265.3" r="3.7" fill="#2c6a0c" stroke="#000" stroke-width="1.1"/>
<circle cx="283.1" cy="271.1" r="3.7" fill="#2c6a0c" stroke="#000" stroke-width="1.1"/>
<circle cx="288.9" cy="276.9" r="3.7" fill="#2c6a0c" stroke="#000" stroke-width="1.1"/>
<circle cx="293.8" cy="275.0" r="3.7" fill="#2c6a0c" stroke="#000" stroke-width="1.1"/>
<circle cx="301.5" cy="271.1" r="3.7" fill="#2c6a0c" stroke="#000" stroke-width="1.1"/>
<circle cx="306.4" cy="267.2" r="3.7" fill="#2c6a0c" stroke="#000" stroke-width="1.1"/>
<circle cx="312.2" cy="276.9" r="3.7" fill="#2c6a0c" stroke="#000" stroke-width="1.1"/>
<circle cx="320.0" cy="280.8" r="3.7" fill="#2c6a0c" stroke="#000" stroke-width="1.1"/>
<circle cx="296.7" cy="280.8" r="3.7" fill="#2c6a0c" stroke="#000" stroke-width="1.1"/>
<circle cx="275.3" cy="280.8" r="3.7" fill="#2c6a0c" stroke="#000" stroke-width="1.1"/>
<circle cx="281.1" cy="284.7" r="3.7" fill="#2c6a0c" stroke="#000" stroke-width="1.1"/>
<circle cx="337.4" cy="275.9" r="3.7" fill="#2c6a0c" stroke="#000" stroke-width="1.1"/>
<circle cx="198.7" cy="285.6" r="3.7" fill="#2c6a0c" stroke="#000" stroke-width="1.1"/>
<circle cx="273.1" cy="120.7" r="3.7" fill="#2c6a0c" stroke="#000" stroke-width="1.1"/>
<circle cx="277.1" cy="119.9" r="3.7" fill="#2c6a0c" stroke="#000" stroke-width="1.1"/>
<circle cx="284.7" cy="119.9" r="3.7" fill="#2c6a0c" stroke="#000" stroke-width="1.1"/>
<circle cx="292.5" cy="119.9" r="3.7" fill="#2c6a0c" stroke="#000" stroke-width="1.1"/>
<circle cx="284.7" cy="168.4" r="3.7" fill="#2c6a0c" stroke="#000" stroke-width="1.1"/>
<circle cx="401.7" cy="154.7" r="3.7" fill="#2c6a0c" stroke="#000" stroke-width="1.1"/>
<circle cx="405.0" cy="159.5" r="3.7" fill="#2c6a0c" stroke="#000" stroke-width="1.1"/>
<circle cx="411.9" cy="160.4" r="3.7" fill="#2c6a0c" stroke="#000" stroke-width="1.1"/>
<circle cx="417.9" cy="162.8" r="3.7" fill="#2c6a0c" stroke="#000" stroke-width="1.1"/>
<circle cx="403.8" cy="166.8" r="3.7" fill="#2c6a0c" stroke="#000" stroke-width="1.1"/>
<circle cx="392.8" cy="168.4" r="3.7" fill="#2c6a0c" stroke="#000" stroke-width="1.1"/>
<circle cx="410.6" cy="173.3" r="3.7" fill="#2c6a0c" stroke="#000" stroke-width="1.1"/>
<circle cx="403.3" cy="179.8" r="3.7" fill="#2c6a0c" stroke="#000" stroke-width="1.1"/>
<circle cx="394.0" cy="180.9" r="3.7" fill="#2c6a0c" stroke="#000" stroke-width="1.1"/>
<circle cx="417.1" cy="179.8" r="3.7" fill="#2c6a0c" stroke="#000" stroke-width="1.1"/>
<circle cx="401.7" cy="188.7" r="3.7" fill="#2c6a0c" stroke="#000" stroke-width="1.1"/>
<circle cx="399.3" cy="190.3" r="3.7" fill="#2c6a0c" stroke="#000" stroke-width="1.1"/>
<circle cx="409.8" cy="194.3" r="3.7" fill="#2c6a0c" stroke="#000" stroke-width="1.1"/>
<circle cx="405.8" cy="204.9" r="3.7" fill="#2c6a0c" stroke="#000" stroke-width="1.1"/>
<circle cx="413.1" cy="202.4" r="3.7" fill="#2c6a0c" stroke="#000" stroke-width="1.1"/>
<circle cx="400.9" cy="207.3" r="3.7" fill="#2c6a0c" stroke="#000" stroke-width="1.1"/>
<circle cx="375.8" cy="205.7" r="3.7" fill="#2c6a0c" stroke="#000" stroke-width="1.1"/>
<circle cx="379.1" cy="213.8" r="3.7" fill="#2c6a0c" stroke="#000" stroke-width="1.1"/>
<circle cx="376.7" cy="220.2" r="3.7" fill="#2c6a0c" stroke="#000" stroke-width="1.1"/>
<circle cx="366.1" cy="214.6" r="3.7" fill="#2c6a0c" stroke="#000" stroke-width="1.1"/>
<circle cx="383.9" cy="225.9" r="3.7" fill="#2c6a0c" stroke="#000" stroke-width="1.1"/>
<circle cx="368.6" cy="225.9" r="3.7" fill="#2c6a0c" stroke="#000" stroke-width="1.1"/>
<circle cx="307.1" cy="207.8" r="3.7" fill="#2c6a0c" stroke="#000" stroke-width="1.1"/>
<circle cx="322.4" cy="209.4" r="3.7" fill="#2c6a0c" stroke="#000" stroke-width="1.1"/>
<circle cx="324.9" cy="212.1" r="3.7" fill="#2c6a0c" stroke="#000" stroke-width="1.1"/>
<circle cx="300.6" cy="222.7" r="3.7" fill="#2c6a0c" stroke="#000" stroke-width="1.1"/>
<circle cx="279.6" cy="230.7" r="3.7" fill="#2c6a0c" stroke="#000" stroke-width="1.1"/>
<circle cx="289.3" cy="229.9" r="3.7" fill="#2c6a0c" stroke="#000" stroke-width="1.1"/>
<circle cx="294.1" cy="229.1" r="3.7" fill="#2c6a0c" stroke="#000" stroke-width="1.1"/>
<circle cx="476.2" cy="112.3" r="3.7" fill="#2c6a0c" stroke="#000" stroke-width="1.1"/>
<circle cx="484.0" cy="115.9" r="3.7" fill="#2c6a0c" stroke="#000" stroke-width="1.1"/>
<circle cx="477.8" cy="118.8" r="3.7" fill="#2c6a0c" stroke="#000" stroke-width="1.1"/>
<circle cx="490.8" cy="120.4" r="3.7" fill="#2c6a0c" stroke="#000" stroke-width="1.1"/>
<circle cx="492.9" cy="126.9" r="3.7" fill="#2c6a0c" stroke="#000" stroke-width="1.1"/>
<circle cx="501.3" cy="113.4" r="3.7" fill="#2c6a0c" stroke="#000" stroke-width="1.1"/>
<circle cx="503.4" cy="138.5" r="3.7" fill="#2c6a0c" stroke="#000" stroke-width="1.1"/>
<circle cx="504.0" cy="148.5" r="3.7" fill="#2c6a0c" stroke="#000" stroke-width="1.1"/>
<circle cx="511.0" cy="151.8" r="3.7" fill="#2c6a0c" stroke="#000" stroke-width="1.1"/>
<circle cx="502.9" cy="156.0" r="3.7" fill="#2c6a0c" stroke="#000" stroke-width="1.1"/>
<circle cx="554.7" cy="118.8" r="3.7" fill="#2c6a0c" stroke="#000" stroke-width="1.1"/>
<circle cx="549.8" cy="128.8" r="3.7" fill="#2c6a0c" stroke="#000" stroke-width="1.1"/>
<circle cx="545.5" cy="134.9" r="3.7" fill="#2c6a0c" stroke="#000" stroke-width="1.1"/>
<circle cx="547.1" cy="142.6" r="3.7" fill="#2c6a0c" stroke="#000" stroke-width="1.1"/>
<circle cx="534.9" cy="139.8" r="3.7" fill="#2c6a0c" stroke="#000" stroke-width="1.1"/>
<circle cx="560.3" cy="153.1" r="3.7" fill="#2c6a0c" stroke="#000" stroke-width="1.1"/>
<circle cx="561.1" cy="157.9" r="3.7" fill="#2c6a0c" stroke="#000" stroke-width="1.1"/>
<circle cx="412.3" cy="160.4" r="3.7" fill="#2c6a0c" stroke="#000" stroke-width="1.1"/>
<circle cx="417.9" cy="162.8" r="3.7" fill="#2c6a0c" stroke="#000" stroke-width="1.1"/>
<circle cx="406.6" cy="159.5" r="3.7" fill="#2c6a0c" stroke="#000" stroke-width="1.1"/>
<circle cx="410.7" cy="173.3" r="3.7" fill="#2c6a0c" stroke="#000" stroke-width="1.1"/>
<circle cx="416.3" cy="179.8" r="3.7" fill="#2c6a0c" stroke="#000" stroke-width="1.1"/>
<circle cx="424.7" cy="180.9" r="3.7" fill="#2c6a0c" stroke="#000" stroke-width="1.1"/>
<circle cx="434.1" cy="166.8" r="3.7" fill="#2c6a0c" stroke="#000" stroke-width="1.1"/>
<circle cx="439.8" cy="170.1" r="3.7" fill="#2c6a0c" stroke="#000" stroke-width="1.1"/>
<circle cx="473.0" cy="170.1" r="3.7" fill="#2c6a0c" stroke="#000" stroke-width="1.1"/>
<circle cx="445.5" cy="182.2" r="3.7" fill="#2c6a0c" stroke="#000" stroke-width="1.1"/>
<circle cx="447.1" cy="184.6" r="3.7" fill="#2c6a0c" stroke="#000" stroke-width="1.1"/>
<circle cx="409.9" cy="194.8" r="3.7" fill="#2c6a0c" stroke="#000" stroke-width="1.1"/>
<circle cx="413.1" cy="202.9" r="3.7" fill="#2c6a0c" stroke="#000" stroke-width="1.1"/>
<circle cx="407.4" cy="204.9" r="3.7" fill="#2c6a0c" stroke="#000" stroke-width="1.1"/>
<circle cx="405.8" cy="177.3" r="3.7" fill="#2c6a0c" stroke="#000" stroke-width="1.1"/>
<circle cx="554.7" cy="118.8" r="3.7" fill="#2c6a0c" stroke="#000" stroke-width="1.1"/>
<circle cx="549.9" cy="128.8" r="3.7" fill="#2c6a0c" stroke="#000" stroke-width="1.1"/>
<circle cx="546.6" cy="135.3" r="3.7" fill="#2c6a0c" stroke="#000" stroke-width="1.1"/>
<circle cx="546.9" cy="142.6" r="3.7" fill="#2c6a0c" stroke="#000" stroke-width="1.1"/>
<circle cx="585.8" cy="128.0" r="3.7" fill="#2c6a0c" stroke="#000" stroke-width="1.1"/>
<circle cx="579.8" cy="136.1" r="3.7" fill="#2c6a0c" stroke="#000" stroke-width="1.1"/>
<circle cx="568.0" cy="143.8" r="3.7" fill="#2c6a0c" stroke="#000" stroke-width="1.1"/>
<circle cx="588.7" cy="151.8" r="3.7" fill="#2c6a0c" stroke="#000" stroke-width="1.1"/>
<circle cx="591.9" cy="153.9" r="3.7" fill="#2c6a0c" stroke="#000" stroke-width="1.1"/>
<circle cx="563.6" cy="151.5" r="3.7" fill="#2c6a0c" stroke="#000" stroke-width="1.1"/>
<circle cx="558.8" cy="153.9" r="3.7" fill="#2c6a0c" stroke="#000" stroke-width="1.1"/>
<circle cx="565.2" cy="156.3" r="3.7" fill="#2c6a0c" stroke="#000" stroke-width="1.1"/>
<circle cx="560.9" cy="158.2" r="3.7" fill="#2c6a0c" stroke="#000" stroke-width="1.1"/>
<circle cx="92.0" cy="312.7" r="3.7" fill="#2c6a0c" stroke="#000" stroke-width="1.1"/>
<circle cx="99.3" cy="310.6" r="3.7" fill="#2c6a0c" stroke="#000" stroke-width="1.1"/>
<circle cx="105.8" cy="309.0" r="3.7" fill="#2c6a0c" stroke="#000" stroke-width="1.1"/>
<circle cx="102.6" cy="315.5" r="3.7" fill="#2c6a0c" stroke="#000" stroke-width="1.1"/>
<circle cx="100.6" cy="320.4" r="3.7" fill="#2c6a0c" stroke="#000" stroke-width="1.1"/>
<circle cx="113.9" cy="317.9" r="3.7" fill="#2c6a0c" stroke="#000" stroke-width="1.1"/>
<circle cx="147.1" cy="289.6" r="3.7" fill="#2c6a0c" stroke="#000" stroke-width="1.1"/>
<circle cx="149.5" cy="292.0" r="3.7" fill="#2c6a0c" stroke="#000" stroke-width="1.1"/>
<circle cx="155.1" cy="287.2" r="3.7" fill="#2c6a0c" stroke="#000" stroke-width="1.1"/>
<circle cx="156.0" cy="300.1" r="3.7" fill="#2c6a0c" stroke="#000" stroke-width="1.1"/>
<circle cx="147.1" cy="305.0" r="3.7" fill="#2c6a0c" stroke="#000" stroke-width="1.1"/>
<circle cx="158.4" cy="309.8" r="3.7" fill="#2c6a0c" stroke="#000" stroke-width="1.1"/>
<circle cx="185.5" cy="224.2" r="3.7" fill="#2c6a0c" stroke="#000" stroke-width="1.1"/>
<circle cx="187.9" cy="230.7" r="3.7" fill="#2c6a0c" stroke="#000" stroke-width="1.1"/>
<circle cx="216.2" cy="229.9" r="3.7" fill="#2c6a0c" stroke="#000" stroke-width="1.1"/>
<circle cx="211.3" cy="234.8" r="3.7" fill="#2c6a0c" stroke="#000" stroke-width="1.1"/>
<circle cx="219.4" cy="237.2" r="3.7" fill="#2c6a0c" stroke="#000" stroke-width="1.1"/>
<circle cx="229.1" cy="233.9" r="3.7" fill="#2c6a0c" stroke="#000" stroke-width="1.1"/>
<circle cx="231.6" cy="234.8" r="3.7" fill="#2c6a0c" stroke="#000" stroke-width="1.1"/>
<circle cx="238.9" cy="226.7" r="3.7" fill="#2c6a0c" stroke="#000" stroke-width="1.1"/>
<circle cx="242.1" cy="221.0" r="3.7" fill="#2c6a0c" stroke="#000" stroke-width="1.1"/>
<circle cx="235.6" cy="245.3" r="3.7" fill="#2c6a0c" stroke="#000" stroke-width="1.1"/>
<circle cx="227.5" cy="246.9" r="3.7" fill="#2c6a0c" stroke="#000" stroke-width="1.1"/>
<circle cx="225.9" cy="254.2" r="3.7" fill="#2c6a0c" stroke="#000" stroke-width="1.1"/>
<circle cx="214.6" cy="255.8" r="3.7" fill="#2c6a0c" stroke="#000" stroke-width="1.1"/>
<circle cx="210.5" cy="260.6" r="3.7" fill="#2c6a0c" stroke="#000" stroke-width="1.1"/>
<circle cx="217.0" cy="249.3" r="3.7" fill="#2c6a0c" stroke="#000" stroke-width="1.1"/>
<circle cx="211.3" cy="249.3" r="3.7" fill="#2c6a0c" stroke="#000" stroke-width="1.1"/>
<circle cx="204.9" cy="255.8" r="3.7" fill="#2c6a0c" stroke="#000" stroke-width="1.1"/>
<circle cx="201.6" cy="243.7" r="3.7" fill="#2c6a0c" stroke="#000" stroke-width="1.1"/>
<circle cx="197.6" cy="242.0" r="3.7" fill="#2c6a0c" stroke="#000" stroke-width="1.1"/>
<circle cx="191.9" cy="246.1" r="3.7" fill="#2c6a0c" stroke="#000" stroke-width="1.1"/>
<circle cx="188.7" cy="242.8" r="3.7" fill="#2c6a0c" stroke="#000" stroke-width="1.1"/>
<circle cx="186.3" cy="251.7" r="3.7" fill="#2c6a0c" stroke="#000" stroke-width="1.1"/>
<circle cx="193.5" cy="254.2" r="3.7" fill="#2c6a0c" stroke="#000" stroke-width="1.1"/>
<circle cx="183.0" cy="259.8" r="3.7" fill="#2c6a0c" stroke="#000" stroke-width="1.1"/>
<circle cx="189.5" cy="262.3" r="3.7" fill="#2c6a0c" stroke="#000" stroke-width="1.1"/>
<circle cx="188.7" cy="267.9" r="3.7" fill="#2c6a0c" stroke="#000" stroke-width="1.1"/>
<circle cx="175.7" cy="276.8" r="3.7" fill="#2c6a0c" stroke="#000" stroke-width="1.1"/>
<circle cx="238.0" cy="254.2" r="3.7" fill="#2c6a0c" stroke="#000" stroke-width="1.1"/>
<circle cx="244.5" cy="258.2" r="3.7" fill="#2c6a0c" stroke="#000" stroke-width="1.1"/>
<circle cx="252.6" cy="260.6" r="3.7" fill="#2c6a0c" stroke="#000" stroke-width="1.1"/>
<circle cx="258.3" cy="259.8" r="3.7" fill="#2c6a0c" stroke="#000" stroke-width="1.1"/>
<circle cx="264.7" cy="259.8" r="3.7" fill="#2c6a0c" stroke="#000" stroke-width="1.1"/>
<circle cx="255.0" cy="267.1" r="3.7" fill="#2c6a0c" stroke="#000" stroke-width="1.1"/>
<circle cx="230.0" cy="262.3" r="3.7" fill="#2c6a0c" stroke="#000" stroke-width="1.1"/>
<circle cx="233.2" cy="267.1" r="3.7" fill="#2c6a0c" stroke="#000" stroke-width="1.1"/>
<circle cx="269.6" cy="237.2" r="3.7" fill="#2c6a0c" stroke="#000" stroke-width="1.1"/>
<circle cx="265.6" cy="242.0" r="3.7" fill="#2c6a0c" stroke="#000" stroke-width="1.1"/>
<circle cx="268.0" cy="247.7" r="3.7" fill="#2c6a0c" stroke="#000" stroke-width="1.1"/>
<circle cx="275.3" cy="233.1" r="3.7" fill="#2c6a0c" stroke="#000" stroke-width="1.1"/>
<circle cx="280.9" cy="231.5" r="3.7" fill="#2c6a0c" stroke="#000" stroke-width="1.1"/>
<circle cx="289.0" cy="230.7" r="3.7" fill="#2c6a0c" stroke="#000" stroke-width="1.1"/>
<circle cx="293.9" cy="229.1" r="3.7" fill="#2c6a0c" stroke="#000" stroke-width="1.1"/>
<circle cx="294.7" cy="235.6" r="3.7" fill="#2c6a0c" stroke="#000" stroke-width="1.1"/>
<circle cx="290.6" cy="242.0" r="3.7" fill="#2c6a0c" stroke="#000" stroke-width="1.1"/>
<circle cx="297.9" cy="246.1" r="3.7" fill="#2c6a0c" stroke="#000" stroke-width="1.1"/>
<circle cx="293.9" cy="250.1" r="3.7" fill="#2c6a0c" stroke="#000" stroke-width="1.1"/>
<circle cx="300.3" cy="241.2" r="3.7" fill="#2c6a0c" stroke="#000" stroke-width="1.1"/>
<circle cx="301.1" cy="222.6" r="3.7" fill="#2c6a0c" stroke="#000" stroke-width="1.1"/>
<circle cx="295.5" cy="260.6" r="3.7" fill="#2c6a0c" stroke="#000" stroke-width="1.1"/>
<circle cx="274.4" cy="264.7" r="3.7" fill="#2c6a0c" stroke="#000" stroke-width="1.1"/>
<circle cx="277.7" cy="265.5" r="3.7" fill="#2c6a0c" stroke="#000" stroke-width="1.1"/>
<circle cx="272.0" cy="273.6" r="3.7" fill="#2c6a0c" stroke="#000" stroke-width="1.1"/>
<circle cx="279.3" cy="271.2" r="3.7" fill="#2c6a0c" stroke="#000" stroke-width="1.1"/>
<circle cx="284.2" cy="271.2" r="3.7" fill="#2c6a0c" stroke="#000" stroke-width="1.1"/>
<circle cx="291.4" cy="274.4" r="3.7" fill="#2c6a0c" stroke="#000" stroke-width="1.1"/>
<circle cx="296.3" cy="272.8" r="3.7" fill="#2c6a0c" stroke="#000" stroke-width="1.1"/>
<circle cx="302.0" cy="270.4" r="3.7" fill="#2c6a0c" stroke="#000" stroke-width="1.1"/>
<circle cx="279.3" cy="278.4" r="3.7" fill="#2c6a0c" stroke="#000" stroke-width="1.1"/>
<circle cx="287.4" cy="279.3" r="3.7" fill="#2c6a0c" stroke="#000" stroke-width="1.1"/>
<circle cx="297.1" cy="280.9" r="3.7" fill="#2c6a0c" stroke="#000" stroke-width="1.1"/>
<circle cx="290.6" cy="285.7" r="3.7" fill="#2c6a0c" stroke="#000" stroke-width="1.1"/>
<circle cx="282.5" cy="285.7" r="3.7" fill="#2c6a0c" stroke="#000" stroke-width="1.1"/>
<circle cx="274.4" cy="284.1" r="3.7" fill="#2c6a0c" stroke="#000" stroke-width="1.1"/>
<circle cx="300.3" cy="290.6" r="3.7" fill="#2c6a0c" stroke="#000" stroke-width="1.1"/>
<circle cx="295.5" cy="293.0" r="3.7" fill="#2c6a0c" stroke="#000" stroke-width="1.1"/>
<circle cx="280.9" cy="295.4" r="3.7" fill="#2c6a0c" stroke="#000" stroke-width="1.1"/>
<circle cx="274.4" cy="300.3" r="3.7" fill="#2c6a0c" stroke="#000" stroke-width="1.1"/>
<circle cx="289.8" cy="299.5" r="3.7" fill="#2c6a0c" stroke="#000" stroke-width="1.1"/>
<circle cx="300.3" cy="300.3" r="3.7" fill="#2c6a0c" stroke="#000" stroke-width="1.1"/>
<circle cx="148.2" cy="292.2" r="3.7" fill="#2c6a0c" stroke="#000" stroke-width="1.1"/>
<circle cx="154.7" cy="287.3" r="3.7" fill="#2c6a0c" stroke="#000" stroke-width="1.1"/>
<circle cx="162.8" cy="290.6" r="3.7" fill="#2c6a0c" stroke="#000" stroke-width="1.1"/>
<circle cx="157.1" cy="300.3" r="3.7" fill="#2c6a0c" stroke="#000" stroke-width="1.1"/>
<circle cx="147.4" cy="305.1" r="3.7" fill="#2c6a0c" stroke="#000" stroke-width="1.1"/>
<circle cx="160.4" cy="305.1" r="3.7" fill="#2c6a0c" stroke="#000" stroke-width="1.1"/>
<circle cx="157.9" cy="310.0" r="3.7" fill="#2c6a0c" stroke="#000" stroke-width="1.1"/>
<circle cx="167.7" cy="297.9" r="3.7" fill="#2c6a0c" stroke="#000" stroke-width="1.1"/>
<circle cx="174.9" cy="294.6" r="3.7" fill="#2c6a0c" stroke="#000" stroke-width="1.1"/>
<circle cx="178.2" cy="298.7" r="3.7" fill="#2c6a0c" stroke="#000" stroke-width="1.1"/>
<circle cx="183.8" cy="301.9" r="3.7" fill="#2c6a0c" stroke="#000" stroke-width="1.1"/>
<circle cx="177.4" cy="306.8" r="3.7" fill="#2c6a0c" stroke="#000" stroke-width="1.1"/>
<circle cx="185.5" cy="290.6" r="3.7" fill="#2c6a0c" stroke="#000" stroke-width="1.1"/>
<circle cx="191.1" cy="295.4" r="3.7" fill="#2c6a0c" stroke="#000" stroke-width="1.1"/>
<circle cx="198.4" cy="286.5" r="3.7" fill="#2c6a0c" stroke="#000" stroke-width="1.1"/>
<circle cx="200.8" cy="292.2" r="3.7" fill="#2c6a0c" stroke="#000" stroke-width="1.1"/>
<circle cx="196.8" cy="298.7" r="3.7" fill="#2c6a0c" stroke="#000" stroke-width="1.1"/>
<circle cx="199.2" cy="301.9" r="3.7" fill="#2c6a0c" stroke="#000" stroke-width="1.1"/>
<circle cx="211.3" cy="303.5" r="3.7" fill="#2c6a0c" stroke="#000" stroke-width="1.1"/>
<circle cx="204.9" cy="309.2" r="3.7" fill="#2c6a0c" stroke="#000" stroke-width="1.1"/>
<circle cx="221.1" cy="309.2" r="3.7" fill="#2c6a0c" stroke="#000" stroke-width="1.1"/>
<circle cx="230.8" cy="306.8" r="3.7" fill="#2c6a0c" stroke="#000" stroke-width="1.1"/>
<circle cx="200.8" cy="316.5" r="3.7" fill="#2c6a0c" stroke="#000" stroke-width="1.1"/>
<circle cx="211.3" cy="314.9" r="3.7" fill="#2c6a0c" stroke="#000" stroke-width="1.1"/>
<circle cx="208.9" cy="321.3" r="3.7" fill="#2c6a0c" stroke="#000" stroke-width="1.1"/>
<circle cx="198.4" cy="318.1" r="3.7" fill="#2c6a0c" stroke="#000" stroke-width="1.1"/>
<circle cx="227.5" cy="327.0" r="3.7" fill="#2c6a0c" stroke="#000" stroke-width="1.1"/>
<circle cx="214.6" cy="333.5" r="3.7" fill="#2c6a0c" stroke="#000" stroke-width="1.1"/>
<circle cx="196.0" cy="336.7" r="3.7" fill="#2c6a0c" stroke="#000" stroke-width="1.1"/>
<circle cx="206.5" cy="337.5" r="3.7" fill="#2c6a0c" stroke="#000" stroke-width="1.1"/>
<circle cx="301.2" cy="223.4" r="3.7" fill="#2c6a0c" stroke="#000" stroke-width="1.1"/>
<circle cx="289.0" cy="230.7" r="3.7" fill="#2c6a0c" stroke="#000" stroke-width="1.1"/>
<circle cx="294.7" cy="229.1" r="3.7" fill="#2c6a0c" stroke="#000" stroke-width="1.1"/>
<circle cx="294.7" cy="236.4" r="3.7" fill="#2c6a0c" stroke="#000" stroke-width="1.1"/>
<circle cx="289.0" cy="242.0" r="3.7" fill="#2c6a0c" stroke="#000" stroke-width="1.1"/>
<circle cx="297.9" cy="245.3" r="3.7" fill="#2c6a0c" stroke="#000" stroke-width="1.1"/>
<circle cx="289.9" cy="250.1" r="3.7" fill="#2c6a0c" stroke="#000" stroke-width="1.1"/>
<circle cx="295.5" cy="259.8" r="3.7" fill="#2c6a0c" stroke="#000" stroke-width="1.1"/>
<circle cx="304.4" cy="250.9" r="3.7" fill="#2c6a0c" stroke="#000" stroke-width="1.1"/>
<circle cx="304.4" cy="255.8" r="3.7" fill="#2c6a0c" stroke="#000" stroke-width="1.1"/>
<circle cx="311.7" cy="242.0" r="3.7" fill="#2c6a0c" stroke="#000" stroke-width="1.1"/>
<circle cx="315.7" cy="235.6" r="3.7" fill="#2c6a0c" stroke="#000" stroke-width="1.1"/>
<circle cx="317.4" cy="246.9" r="3.7" fill="#2c6a0c" stroke="#000" stroke-width="1.1"/>
<circle cx="319.0" cy="252.6" r="3.7" fill="#2c6a0c" stroke="#000" stroke-width="1.1"/>
<circle cx="327.1" cy="259.8" r="3.7" fill="#2c6a0c" stroke="#000" stroke-width="1.1"/>
<circle cx="328.7" cy="252.6" r="3.7" fill="#2c6a0c" stroke="#000" stroke-width="1.1"/>
<circle cx="335.2" cy="254.2" r="3.7" fill="#2c6a0c" stroke="#000" stroke-width="1.1"/>
<circle cx="337.6" cy="246.9" r="3.7" fill="#2c6a0c" stroke="#000" stroke-width="1.1"/>
<circle cx="333.5" cy="236.4" r="3.7" fill="#2c6a0c" stroke="#000" stroke-width="1.1"/>
<circle cx="340.0" cy="237.2" r="3.7" fill="#2c6a0c" stroke="#000" stroke-width="1.1"/>
<circle cx="345.7" cy="238.8" r="3.7" fill="#2c6a0c" stroke="#000" stroke-width="1.1"/>
<circle cx="345.7" cy="242.0" r="3.7" fill="#2c6a0c" stroke="#000" stroke-width="1.1"/>
<circle cx="356.2" cy="233.1" r="3.7" fill="#2c6a0c" stroke="#000" stroke-width="1.1"/>
<circle cx="364.3" cy="237.2" r="3.7" fill="#2c6a0c" stroke="#000" stroke-width="1.1"/>
<circle cx="370.8" cy="237.2" r="3.7" fill="#2c6a0c" stroke="#000" stroke-width="1.1"/>
<circle cx="369.1" cy="227.5" r="3.7" fill="#2c6a0c" stroke="#000" stroke-width="1.1"/>
<circle cx="368.3" cy="230.7" r="3.7" fill="#2c6a0c" stroke="#000" stroke-width="1.1"/>
<circle cx="383.7" cy="225.9" r="3.7" fill="#2c6a0c" stroke="#000" stroke-width="1.1"/>
<circle cx="388.6" cy="236.4" r="3.7" fill="#2c6a0c" stroke="#000" stroke-width="1.1"/>
<circle cx="362.7" cy="242.0" r="3.7" fill="#2c6a0c" stroke="#000" stroke-width="1.1"/>
<circle cx="357.0" cy="245.3" r="3.7" fill="#2c6a0c" stroke="#000" stroke-width="1.1"/>
<circle cx="357.8" cy="250.9" r="3.7" fill="#2c6a0c" stroke="#000" stroke-width="1.1"/>
<circle cx="366.7" cy="248.5" r="3.7" fill="#2c6a0c" stroke="#000" stroke-width="1.1"/>
<circle cx="366.7" cy="256.6" r="3.7" fill="#2c6a0c" stroke="#000" stroke-width="1.1"/>
<circle cx="351.3" cy="259.8" r="3.7" fill="#2c6a0c" stroke="#000" stroke-width="1.1"/>
<circle cx="348.9" cy="264.7" r="3.7" fill="#2c6a0c" stroke="#000" stroke-width="1.1"/>
<circle cx="361.1" cy="265.5" r="3.7" fill="#2c6a0c" stroke="#000" stroke-width="1.1"/>
<circle cx="369.1" cy="261.5" r="3.7" fill="#2c6a0c" stroke="#000" stroke-width="1.1"/>
<circle cx="331.9" cy="264.7" r="3.7" fill="#2c6a0c" stroke="#000" stroke-width="1.1"/>
<circle cx="331.1" cy="269.5" r="3.7" fill="#2c6a0c" stroke="#000" stroke-width="1.1"/>
<circle cx="337.6" cy="276.0" r="3.7" fill="#2c6a0c" stroke="#000" stroke-width="1.1"/>
<circle cx="301.2" cy="270.4" r="3.7" fill="#2c6a0c" stroke="#000" stroke-width="1.1"/>
<circle cx="307.7" cy="269.5" r="3.7" fill="#2c6a0c" stroke="#000" stroke-width="1.1"/>
<circle cx="319.0" cy="269.5" r="3.7" fill="#2c6a0c" stroke="#000" stroke-width="1.1"/>
<circle cx="313.3" cy="273.6" r="3.7" fill="#2c6a0c" stroke="#000" stroke-width="1.1"/>
<circle cx="313.3" cy="284.1" r="3.7" fill="#2c6a0c" stroke="#000" stroke-width="1.1"/>
<circle cx="319.8" cy="277.6" r="3.7" fill="#2c6a0c" stroke="#000" stroke-width="1.1"/>
<circle cx="323.0" cy="284.9" r="3.7" fill="#2c6a0c" stroke="#000" stroke-width="1.1"/>
<circle cx="328.7" cy="285.7" r="3.7" fill="#2c6a0c" stroke="#000" stroke-width="1.1"/>
<circle cx="294.7" cy="276.0" r="3.7" fill="#2c6a0c" stroke="#000" stroke-width="1.1"/>
<circle cx="286.6" cy="277.6" r="3.7" fill="#2c6a0c" stroke="#000" stroke-width="1.1"/>
<circle cx="289.0" cy="285.7" r="3.7" fill="#2c6a0c" stroke="#000" stroke-width="1.1"/>
<circle cx="297.9" cy="280.9" r="3.7" fill="#2c6a0c" stroke="#000" stroke-width="1.1"/>
<circle cx="303.6" cy="290.6" r="3.7" fill="#2c6a0c" stroke="#000" stroke-width="1.1"/>
<circle cx="297.9" cy="293.8" r="3.7" fill="#2c6a0c" stroke="#000" stroke-width="1.1"/>
<circle cx="308.5" cy="290.6" r="3.7" fill="#2c6a0c" stroke="#000" stroke-width="1.1"/>
<circle cx="289.9" cy="299.5" r="3.7" fill="#2c6a0c" stroke="#000" stroke-width="1.1"/>
<circle cx="301.2" cy="300.3" r="3.7" fill="#2c6a0c" stroke="#000" stroke-width="1.1"/>
<circle cx="296.3" cy="298.7" r="3.7" fill="#2c6a0c" stroke="#000" stroke-width="1.1"/>
<circle cx="285.8" cy="269.5" r="3.7" fill="#2c6a0c" stroke="#000" stroke-width="1.1"/>
<circle cx="437.1" cy="277.6" r="3.7" fill="#2c6a0c" stroke="#000" stroke-width="1.1"/>
<circle cx="195.2" cy="336.7" r="3.7" fill="#2c6a0c" stroke="#000" stroke-width="1.1"/>
<circle cx="200.8" cy="338.3" r="3.7" fill="#2c6a0c" stroke="#000" stroke-width="1.1"/>
<circle cx="206.5" cy="338.3" r="3.7" fill="#2c6a0c" stroke="#000" stroke-width="1.1"/>
<circle cx="211.3" cy="339.9" r="3.7" fill="#2c6a0c" stroke="#000" stroke-width="1.1"/>
<circle cx="196.8" cy="343.9" r="3.7" fill="#2c6a0c" stroke="#000" stroke-width="1.1"/>
<circle cx="207.3" cy="345.6" r="3.7" fill="#2c6a0c" stroke="#000" stroke-width="1.1"/>
<circle cx="199.2" cy="351.2" r="3.7" fill="#2c6a0c" stroke="#000" stroke-width="1.1"/>
<circle cx="214.6" cy="334.2" r="3.7" fill="#2c6a0c" stroke="#000" stroke-width="1.1"/>
<circle cx="194.8" cy="400.9" r="3.7" fill="#2c6a0c" stroke="#000" stroke-width="1.1"/>
<circle cx="290.6" cy="383.6" r="3.7" fill="#2c6a0c" stroke="#000" stroke-width="1.1"/>
<circle cx="298.7" cy="381.2" r="3.7" fill="#2c6a0c" stroke="#000" stroke-width="1.1"/>
<circle cx="284.2" cy="387.6" r="3.7" fill="#2c6a0c" stroke="#000" stroke-width="1.1"/>
<circle cx="290.6" cy="395.7" r="3.7" fill="#2c6a0c" stroke="#000" stroke-width="1.1"/>
<circle cx="296.3" cy="411.9" r="3.7" fill="#2c6a0c" stroke="#000" stroke-width="1.1"/>
<circle cx="290.6" cy="416.0" r="3.7" fill="#2c6a0c" stroke="#000" stroke-width="1.1"/>
<circle cx="285.8" cy="420.8" r="3.7" fill="#2c6a0c" stroke="#000" stroke-width="1.1"/>
<circle cx="293.9" cy="424.9" r="3.7" fill="#2c6a0c" stroke="#000" stroke-width="1.1"/>
<circle cx="296.3" cy="428.1" r="3.7" fill="#2c6a0c" stroke="#000" stroke-width="1.1"/>
<circle cx="296.3" cy="432.1" r="3.7" fill="#2c6a0c" stroke="#000" stroke-width="1.1"/>
<circle cx="285.0" cy="432.9" r="3.7" fill="#2c6a0c" stroke="#000" stroke-width="1.1"/>
<circle cx="300.3" cy="437.8" r="3.7" fill="#2c6a0c" stroke="#000" stroke-width="1.1"/>
<circle cx="297.1" cy="449.9" r="3.7" fill="#2c6a0c" stroke="#000" stroke-width="1.1"/>
<circle cx="274.4" cy="451.1" r="3.7" fill="#2c6a0c" stroke="#000" stroke-width="1.1"/>
<circle cx="350.5" cy="408.7" r="3.7" fill="#2c6a0c" stroke="#000" stroke-width="1.1"/>
<circle cx="357.0" cy="411.9" r="3.7" fill="#2c6a0c" stroke="#000" stroke-width="1.1"/>
<circle cx="336.8" cy="424.0" r="3.7" fill="#2c6a0c" stroke="#000" stroke-width="1.1"/>
<circle cx="359.8" cy="429.7" r="3.7" fill="#2c6a0c" stroke="#000" stroke-width="1.1"/>
<circle cx="291.5" cy="382.8" r="3.7" fill="#2c6a0c" stroke="#000" stroke-width="1.1"/>
<circle cx="298.8" cy="381.2" r="3.7" fill="#2c6a0c" stroke="#000" stroke-width="1.1"/>
<circle cx="285.8" cy="387.6" r="3.7" fill="#2c6a0c" stroke="#000" stroke-width="1.1"/>
<circle cx="290.7" cy="395.7" r="3.7" fill="#2c6a0c" stroke="#000" stroke-width="1.1"/>
<circle cx="296.3" cy="411.1" r="3.7" fill="#2c6a0c" stroke="#000" stroke-width="1.1"/>
<circle cx="290.7" cy="416.0" r="3.7" fill="#2c6a0c" stroke="#000" stroke-width="1.1"/>
<circle cx="285.8" cy="420.8" r="3.7" fill="#2c6a0c" stroke="#000" stroke-width="1.1"/>
<circle cx="292.3" cy="426.5" r="3.7" fill="#2c6a0c" stroke="#000" stroke-width="1.1"/>
<circle cx="295.5" cy="426.5" r="3.7" fill="#2c6a0c" stroke="#000" stroke-width="1.1"/>
<circle cx="285.8" cy="432.9" r="3.7" fill="#2c6a0c" stroke="#000" stroke-width="1.1"/>
<circle cx="296.3" cy="432.9" r="3.7" fill="#2c6a0c" stroke="#000" stroke-width="1.1"/>
<circle cx="300.4" cy="437.8" r="3.7" fill="#2c6a0c" stroke="#000" stroke-width="1.1"/>
<circle cx="319.8" cy="442.7" r="3.7" fill="#2c6a0c" stroke="#000" stroke-width="1.1"/>
<circle cx="327.9" cy="447.5" r="3.7" fill="#2c6a0c" stroke="#000" stroke-width="1.1"/>
<circle cx="296.3" cy="449.9" r="3.7" fill="#2c6a0c" stroke="#000" stroke-width="1.1"/>
<circle cx="240.7" cy="467.6" r="3.7" fill="#2c6a0c" stroke="#000" stroke-width="1.1"/>
<circle cx="241.7" cy="474.9" r="3.7" fill="#2c6a0c" stroke="#000" stroke-width="1.1"/>
<circle cx="244.4" cy="500.6" r="3.7" fill="#2c6a0c" stroke="#000" stroke-width="1.1"/>
<circle cx="252.7" cy="517.6" r="3.7" fill="#2c6a0c" stroke="#000" stroke-width="1.1"/>
<circle cx="265.5" cy="453.8" r="3.7" fill="#2c6a0c" stroke="#000" stroke-width="1.1"/>
<circle cx="274.6" cy="452.9" r="3.7" fill="#2c6a0c" stroke="#000" stroke-width="1.1"/>
<circle cx="270.1" cy="459.3" r="3.7" fill="#2c6a0c" stroke="#000" stroke-width="1.1"/>
<circle cx="278.3" cy="458.4" r="3.7" fill="#2c6a0c" stroke="#000" stroke-width="1.1"/>
<circle cx="282.0" cy="461.2" r="3.7" fill="#2c6a0c" stroke="#000" stroke-width="1.1"/>
<circle cx="273.7" cy="465.7" r="3.7" fill="#2c6a0c" stroke="#000" stroke-width="1.1"/>
<circle cx="280.1" cy="468.5" r="3.7" fill="#2c6a0c" stroke="#000" stroke-width="1.1"/>
<circle cx="285.6" cy="466.7" r="3.7" fill="#2c6a0c" stroke="#000" stroke-width="1.1"/>
<circle cx="291.1" cy="466.7" r="3.7" fill="#2c6a0c" stroke="#000" stroke-width="1.1"/>
<circle cx="293.9" cy="462.1" r="3.7" fill="#2c6a0c" stroke="#000" stroke-width="1.1"/>
<circle cx="296.6" cy="450.2" r="3.7" fill="#2c6a0c" stroke="#000" stroke-width="1.1"/>
<circle cx="319.6" cy="442.8" r="3.7" fill="#2c6a0c" stroke="#000" stroke-width="1.1"/>
<circle cx="327.8" cy="447.4" r="3.7" fill="#2c6a0c" stroke="#000" stroke-width="1.1"/>
<circle cx="322.3" cy="459.3" r="3.7" fill="#2c6a0c" stroke="#000" stroke-width="1.1"/>
<circle cx="344.3" cy="471.2" r="3.7" fill="#2c6a0c" stroke="#000" stroke-width="1.1"/>
<circle cx="359.5" cy="430.0" r="3.7" fill="#2c6a0c" stroke="#000" stroke-width="1.1"/>
<circle cx="371.8" cy="466.9" r="3.7" fill="#2c6a0c" stroke="#000" stroke-width="1.1"/>
<circle cx="388.1" cy="462.0" r="3.7" fill="#2c6a0c" stroke="#000" stroke-width="1.1"/>
<circle cx="357.2" cy="413.2" r="3.7" fill="#2c6a0c" stroke="#000" stroke-width="1.1"/>
<circle cx="454.3" cy="271.1" r="3.7" fill="#2c6a0c" stroke="#000" stroke-width="1.1"/>
<circle cx="455.3" cy="276.6" r="3.7" fill="#2c6a0c" stroke="#000" stroke-width="1.1"/>
<circle cx="450.3" cy="281.6" r="3.7" fill="#2c6a0c" stroke="#000" stroke-width="1.1"/>
<circle cx="458.3" cy="281.2" r="3.7" fill="#2c6a0c" stroke="#000" stroke-width="1.1"/>
<circle cx="436.7" cy="278.0" r="3.7" fill="#2c6a0c" stroke="#000" stroke-width="1.1"/>
<circle cx="453.3" cy="302.8" r="3.7" fill="#2c6a0c" stroke="#000" stroke-width="1.1"/>
<circle cx="236.2" cy="244.6" r="3.7" fill="#2c6a0c" stroke="#000" stroke-width="1.1"/>
<circle cx="238.0" cy="254.3" r="3.7" fill="#2c6a0c" stroke="#000" stroke-width="1.1"/>
<circle cx="244.7" cy="258.6" r="3.7" fill="#2c6a0c" stroke="#000" stroke-width="1.1"/>
<circle cx="253.2" cy="260.4" r="3.7" fill="#2c6a0c" stroke="#000" stroke-width="1.1"/>
<circle cx="259.3" cy="260.4" r="3.7" fill="#2c6a0c" stroke="#000" stroke-width="1.1"/>
<circle cx="264.7" cy="259.8" r="3.7" fill="#2c6a0c" stroke="#000" stroke-width="1.1"/>
<circle cx="252.6" cy="267.7" r="3.7" fill="#2c6a0c" stroke="#000" stroke-width="1.1"/>
<circle cx="256.8" cy="267.1" r="3.7" fill="#2c6a0c" stroke="#000" stroke-width="1.1"/>
<circle cx="265.3" cy="244.0" r="3.7" fill="#2c6a0c" stroke="#000" stroke-width="1.1"/>
<circle cx="269.0" cy="248.3" r="3.7" fill="#2c6a0c" stroke="#000" stroke-width="1.1"/>
<circle cx="271.4" cy="244.6" r="3.7" fill="#2c6a0c" stroke="#000" stroke-width="1.1"/>
<circle cx="275.0" cy="265.3" r="3.7" fill="#2c6a0c" stroke="#000" stroke-width="1.1"/>
<circle cx="271.4" cy="273.8" r="3.7" fill="#2c6a0c" stroke="#000" stroke-width="1.1"/>
<circle cx="276.9" cy="278.6" r="3.7" fill="#2c6a0c" stroke="#000" stroke-width="1.1"/>
<circle cx="281.1" cy="278.0" r="3.7" fill="#2c6a0c" stroke="#000" stroke-width="1.1"/>
<circle cx="283.5" cy="271.9" r="3.7" fill="#2c6a0c" stroke="#000" stroke-width="1.1"/>
<circle cx="275.0" cy="285.9" r="3.7" fill="#2c6a0c" stroke="#000" stroke-width="1.1"/>
<circle cx="281.1" cy="284.7" r="3.7" fill="#2c6a0c" stroke="#000" stroke-width="1.1"/>
<circle cx="288.4" cy="285.9" r="3.7" fill="#2c6a0c" stroke="#000" stroke-width="1.1"/>
<circle cx="287.2" cy="277.4" r="3.7" fill="#2c6a0c" stroke="#000" stroke-width="1.1"/>
<circle cx="292.0" cy="282.3" r="3.7" fill="#2c6a0c" stroke="#000" stroke-width="1.1"/>
<circle cx="294.5" cy="277.4" r="3.7" fill="#2c6a0c" stroke="#000" stroke-width="1.1"/>
<circle cx="298.1" cy="281.0" r="3.7" fill="#2c6a0c" stroke="#000" stroke-width="1.1"/>
<circle cx="296.9" cy="275.0" r="3.7" fill="#2c6a0c" stroke="#000" stroke-width="1.1"/>
<circle cx="301.7" cy="270.7" r="3.7" fill="#2c6a0c" stroke="#000" stroke-width="1.1"/>
<circle cx="306.6" cy="267.7" r="3.7" fill="#2c6a0c" stroke="#000" stroke-width="1.1"/>
<circle cx="310.2" cy="273.8" r="3.7" fill="#2c6a0c" stroke="#000" stroke-width="1.1"/>
<circle cx="315.1" cy="268.9" r="3.7" fill="#2c6a0c" stroke="#000" stroke-width="1.1"/>
<circle cx="318.7" cy="269.5" r="3.7" fill="#2c6a0c" stroke="#000" stroke-width="1.1"/>
<circle cx="320.0" cy="277.4" r="3.7" fill="#2c6a0c" stroke="#000" stroke-width="1.1"/>
<circle cx="313.9" cy="283.5" r="3.7" fill="#2c6a0c" stroke="#000" stroke-width="1.1"/>
<circle cx="307.8" cy="279.8" r="3.7" fill="#2c6a0c" stroke="#000" stroke-width="1.1"/>
<circle cx="303.0" cy="277.4" r="3.7" fill="#2c6a0c" stroke="#000" stroke-width="1.1"/>
<circle cx="298.1" cy="290.8" r="3.7" fill="#2c6a0c" stroke="#000" stroke-width="1.1"/>
<circle cx="304.2" cy="290.8" r="3.7" fill="#2c6a0c" stroke="#000" stroke-width="1.1"/>
<circle cx="307.8" cy="289.5" r="3.7" fill="#2c6a0c" stroke="#000" stroke-width="1.1"/>
<circle cx="299.3" cy="296.8" r="3.7" fill="#2c6a0c" stroke="#000" stroke-width="1.1"/>
<circle cx="293.3" cy="299.3" r="3.7" fill="#2c6a0c" stroke="#000" stroke-width="1.1"/>
<circle cx="289.6" cy="300.5" r="3.7" fill="#2c6a0c" stroke="#000" stroke-width="1.1"/>
<circle cx="281.1" cy="295.6" r="3.7" fill="#2c6a0c" stroke="#000" stroke-width="1.1"/>
<circle cx="275.7" cy="299.9" r="3.7" fill="#2c6a0c" stroke="#000" stroke-width="1.1"/>
<circle cx="303.0" cy="300.5" r="3.7" fill="#2c6a0c" stroke="#000" stroke-width="1.1"/>
<circle cx="322.4" cy="284.7" r="3.7" fill="#2c6a0c" stroke="#000" stroke-width="1.1"/>
<circle cx="328.4" cy="284.7" r="3.7" fill="#2c6a0c" stroke="#000" stroke-width="1.1"/>
<circle cx="289.6" cy="242.2" r="3.7" fill="#2c6a0c" stroke="#000" stroke-width="1.1"/>
<circle cx="292.0" cy="250.7" r="3.7" fill="#2c6a0c" stroke="#000" stroke-width="1.1"/>
<circle cx="298.1" cy="245.9" r="3.7" fill="#2c6a0c" stroke="#000" stroke-width="1.1"/>
<circle cx="304.8" cy="250.7" r="3.7" fill="#2c6a0c" stroke="#000" stroke-width="1.1"/>
<circle cx="305.4" cy="256.2" r="3.7" fill="#2c6a0c" stroke="#000" stroke-width="1.1"/>
<circle cx="295.7" cy="260.4" r="3.7" fill="#2c6a0c" stroke="#000" stroke-width="1.1"/>
<circle cx="311.5" cy="242.2" r="3.7" fill="#2c6a0c" stroke="#000" stroke-width="1.1"/>
<circle cx="317.5" cy="247.1" r="3.7" fill="#2c6a0c" stroke="#000" stroke-width="1.1"/>
<circle cx="318.7" cy="253.1" r="3.7" fill="#2c6a0c" stroke="#000" stroke-width="1.1"/>
<circle cx="318.7" cy="259.2" r="3.7" fill="#2c6a0c" stroke="#000" stroke-width="1.1"/>
<circle cx="327.2" cy="252.5" r="3.7" fill="#2c6a0c" stroke="#000" stroke-width="1.1"/>
<circle cx="327.2" cy="259.8" r="3.7" fill="#2c6a0c" stroke="#000" stroke-width="1.1"/>
<circle cx="334.5" cy="253.1" r="3.7" fill="#2c6a0c" stroke="#000" stroke-width="1.1"/>
<circle cx="338.2" cy="246.5" r="3.7" fill="#2c6a0c" stroke="#000" stroke-width="1.1"/>
<circle cx="330.9" cy="264.7" r="3.7" fill="#2c6a0c" stroke="#000" stroke-width="1.1"/>
<circle cx="330.9" cy="268.9" r="3.7" fill="#2c6a0c" stroke="#000" stroke-width="1.1"/>
<circle cx="338.2" cy="275.6" r="3.7" fill="#2c6a0c" stroke="#000" stroke-width="1.1"/>
<circle cx="346.7" cy="242.2" r="3.7" fill="#2c6a0c" stroke="#000" stroke-width="1.1"/>
<circle cx="349.1" cy="265.3" r="3.7" fill="#2c6a0c" stroke="#000" stroke-width="1.1"/>
<circle cx="352.1" cy="259.8" r="3.7" fill="#2c6a0c" stroke="#000" stroke-width="1.1"/>
<circle cx="353.9" cy="253.1" r="3.7" fill="#2c6a0c" stroke="#000" stroke-width="1.1"/>
</svg><!--/MAP--></div>
<div class="t" style="left:1099px;top:131px;">Processing Toolbox</div>
<svg class="i" style="left:1335px;top:133px" width="11" height="12" viewBox="0 0 11 12"><rect x="0.5" y="0.5" width="10" height="11" rx="2" fill="none" stroke="#666"/><rect x="4" y="2.5" width="4.5" height="4.5" fill="none" stroke="#666" stroke-width="1.1"/><rect x="2.5" y="4.5" width="4.5" height="4.5" fill="#edecea" stroke="#666" stroke-width="1.1"/></svg>
<svg class="i" style="left:1352px;top:133px" width="11" height="12" viewBox="0 0 11 12"><rect x="0.5" y="0.5" width="10" height="11" rx="2" fill="none" stroke="#666"/><path d="M3,3.5 L8,8.5 M8,3.5 L3,8.5" stroke="#555" stroke-width="2"/></svg>
<div class="a" style="left:1097px;top:152px;width:270px;height:24px;background:#fff;border:1px solid #b4b3ad;border-top:2px solid #a6a59f"></div>
<div class="t" style="left:1101px;top:155px;color:#8c8c8c">Search...</div>
<div class="a" style="left:1097px;top:175px;width:270px;height:532px;background:#fff;border:1px solid #a9a8a2;border-top:2px solid #a6a59f;border-right:none"></div>
<div class="a" style="left:1350px;top:176px;width:15px;height:530px;background:linear-gradient(90deg,#c9c8c4,#e6e5e2 50%,#d8d7d3);border-left:1px solid #a8a7a1"></div>
<div class="a" style="left:1351px;top:177px;width:14px;height:13px;background:linear-gradient(#f8f8f6,#e2e1de);border:1px solid #b5b4ae"></div>
<svg class="i" style="left:1354px;top:181px" width="8" height="5" viewBox="0 0 8 5"><path d="M0,5 L4,0 L8,5 Z" fill="#111"/></svg>
<div class="a" style="left:1351px;top:262px;width:14px;height:429px;background:linear-gradient(90deg,#f2f2f0,#e4e3e0 40%,#c8c7c3);border:1px solid #a8a7a1"></div>
<div class="a" style="left:1355px;top:472px;width:7px;height:10px;background:repeating-linear-gradient(#999 0 1px,transparent 1px 2px)"></div>
<div class="a" style="left:1351px;top:691px;width:14px;height:15px;background:linear-gradient(#f8f8f6,#e2e1de);border:1px solid #b5b4ae"></div>
<svg class="i" style="left:1354px;top:697px" width="8" height="5" viewBox="0 0 8 5"><path d="M0,0 L4,5 L8,0 Z" fill="#999"/></svg>
<div class="a" style="left:1099px;top:490px;width:250px;height:18px;background:#d6d6d5"></div>
<svg class="i" style="left:1142px;top:178px" width="17" height="16" viewBox="0 0 17 16"><rect x="1" y="5" width="10" height="10" fill="#7a9ec0" stroke="#4a6a88"/><circle cx="11" cy="5.5" r="5" fill="#7a9ec0" stroke="#4a6a88"/></svg>
<div class="t" style="left:1164px;top:178px;">Union</div>
<svg class="i" style="left:1143px;top:197px" width="14" height="15" viewBox="0 0 14 15"><path d="M5,6 C2,7 1,11 3,13 C5,15 7,12 6,9 M9,3 C6,3 7,7 9,9 C11,11 12,14 9,14" fill="none" stroke="#e4e04a" stroke-width="2.2"/><path d="M2,14 L11.5,2" stroke="#2f7a1a" stroke-width="1.8"/><path d="M9,1.5 L13,0.5 L12,4.5 Z" fill="#2f7a1a"/></svg>
<div class="t" style="left:1162px;top:196px;">Extract by location</div>
<svg class="i" style="left:1107px;top:217px" width="6" height="10" viewBox="0 0 6 10"><path d="M0.7,0.7 L5,5 L0.7,9.3 Z" fill="#fff" stroke="#111" stroke-width="1.1"/></svg>
<svg class="i" style="left:1120px;top:214px" width="17" height="16" viewBox="0 0 17 16"><circle cx="9" cy="9" r="6.5" fill="#5a9ad8"/><path d="M4,8 C6,6 9,10 13,7 M5,12 C8,11 10,13 14,11" stroke="#6ab04a" stroke-width="2" fill="none"/><rect x="2" y="10" width="13" height="5" fill="#f0f0f0" opacity="0.8"/><text x="8.5" y="14.5" font-size="4.5" font-weight="bold" text-anchor="middle" fill="#222">GDAL</text><path d="M6,1 L9,3" stroke="#555"/></svg>
<div class="t" style="left:1142px;top:214px;">GDAL/OGR [48 geoalgorithms]</div>
<svg class="i" style="left:1107px;top:235px" width="6" height="10" viewBox="0 0 6 10"><path d="M0.7,0.7 L5,5 L0.7,9.3 Z" fill="#fff" stroke="#111" stroke-width="1.1"/></svg>
<svg class="i" style="left:1120px;top:232px" width="17" height="16" viewBox="0 0 17 16"><path d="M8,15 C4,10 2,6 2,2 C5,5 7,8 8,11 C9,7 11,3 14,1 C13,5 11,10 8,15 Z" fill="#7ac04a" stroke="#3a7a2a" stroke-width="0.7"/><path d="M8,15 L8,6" stroke="#3a7a2a"/></svg>
<div class="t" style="left:1142px;top:232px;">GRASS GIS 7 commands [31...</div>
<svg class="i" style="left:1107px;top:253px" width="6" height="10" viewBox="0 0 6 10"><path d="M0.7,0.7 L5,5 L0.7,9.3 Z" fill="#fff" stroke="#111" stroke-width="1.1"/></svg>
<svg class="i" style="left:1120px;top:250px" width="18" height="16" viewBox="0 0 18 16"><circle cx="5" cy="9" r="3.5" fill="#555"/><circle cx="11" cy="4" r="3.5" fill="#4a70c0"/><circle cx="13" cy="12" r="3.5" fill="#d02020"/><path d="M5,9 L11,4 L13,12" stroke="#555" stroke-width="1.2" fill="none"/></svg>
<div class="t" style="left:1143px;top:250px;">Models [0 geoalgorithms]</div>
<svg class="i" style="left:1105px;top:273px" width="10" height="6" viewBox="0 0 10 6"><path d="M0.7,0.7 L9.3,0.7 L5,5 Z" fill="#fff" stroke="#111" stroke-width="1.1"/></svg>
<svg class="i" style="left:1122px;top:269px" width="14" height="15" viewBox="0 0 14 15"><path d="M5,6 C2,7 1,11 3,13 C5,15 7,12 6,9 M9,3 C6,3 7,7 9,9 C11,11 12,14 9,14" fill="none" stroke="#e4e04a" stroke-width="2.2"/><path d="M2,14 L11.5,2" stroke="#2f7a1a" stroke-width="1.8"/><path d="M9,1.5 L13,0.5 L12,4.5 Z" fill="#2f7a1a"/></svg>
<div class="t" style="left:1142px;top:268px;">QGIS geoalgorithms [116 geo...</div>
<svg class="i" style="left:1127px;top:288px" width="6" height="10" viewBox="0 0 6 10"><path d="M0.7,0.7 L5,5 L0.7,9.3 Z" fill="#fff" stroke="#111" stroke-width="1.1"/></svg>
<div class="t" style="left:1142px;top:285px;">Database</div>
<svg class="i" style="left:1127px;top:305px" width="6" height="10" viewBox="0 0 6 10"><path d="M0.7,0.7 L5,5 L0.7,9.3 Z" fill="#fff" stroke="#111" stroke-width="1.1"/></svg>
<div class="t" style="left:1142px;top:302px;">Graphics</div>
<svg class="i" style="left:1127px;top:322px" width="6" height="10" viewBox="0 0 6 10"><path d="M0.7,0.7 L5,5 L0.7,9.3 Z" fill="#fff" stroke="#111" stroke-width="1.1"/></svg>
<div class="t" style="left:1142px;top:319px;">Raster general tools</div>
<svg class="i" style="left:1127px;top:339px" width="6" height="10" viewBox="0 0 6 10"><path d="M0.7,0.7 L5,5 L0.7,9.3 Z" fill="#fff" stroke="#111" stroke-width="1.1"/></svg>
<div class="t" style="left:1142px;top:336px;">Raster tools</div>
<svg class="i" style="left:1127px;top:356px" width="6" height="10" viewBox="0 0 6 10"><path d="M0.7,0.7 L5,5 L0.7,9.3 Z" fill="#fff" stroke="#111" stroke-width="1.1"/></svg>
<div class="t" style="left:1142px;top:353px;">Table</div>
<svg class="i" style="left:1127px;top:373px" width="6" height="10" viewBox="0 0 6 10"><path d="M0.7,0.7 L5,5 L0.7,9.3 Z" fill="#fff" stroke="#111" stroke-width="1.1"/></svg>
<div class="t" style="left:1142px;top:370px;">Vector analysis tools</div>
<svg class="i" style="left:1127px;top:390px" width="6" height="10" viewBox="0 0 6 10"><path d="M0.7,0.7 L5,5 L0.7,9.3 Z" fill="#fff" stroke="#111" stroke-width="1.1"/></svg>
<div class="t" style="left:1142px;top:387px;">Vector creation tools</div>
<svg class="i" style="left:1127px;top:407px" width="6" height="10" viewBox="0 0 6 10"><path d="M0.7,0.7 L5,5 L0.7,9.3 Z" fill="#fff" stroke="#111" stroke-width="1.1"/></svg>
<div class="t" style="left:1142px;top:404px;">Vector general tools</div>
<svg class="i" style="left:1127px;top:424px" width="6" height="10" viewBox="0 0 6 10"><path d="M0.7,0.7 L5,5 L0.7,9.3 Z" fill="#fff" stroke="#111" stroke-width="1.1"/></svg>
<div class="t" style="left:1142px;top:421px;">Vector geometry tools</div>
<svg class="i" style="left:1127px;top:441px" width="6" height="10" viewBox="0 0 6 10"><path d="M0.7,0.7 L5,5 L0.7,9.3 Z" fill="#fff" stroke="#111" stroke-width="1.1"/></svg>
<div class="t" style="left:1142px;top:438px;">Vector overlay tools</div>
<svg class="i" style="left:1126px;top:460px" width="10" height="6" viewBox="0 0 10 6"><path d="M0.7,0.7 L9.3,0.7 L5,5 Z" fill="#fff" stroke="#111" stroke-width="1.1"/></svg>
<div class="t" style="left:1142px;top:455px;">Vector selection tools</div>
<svg class="i" style="left:1163px;top:474px" width="14" height="15" viewBox="0 0 14 15"><path d="M5,6 C2,7 1,11 3,13 C5,15 7,12 6,9 M9,3 C6,3 7,7 9,9 C11,11 12,14 9,14" fill="none" stroke="#e4e04a" stroke-width="2.2"/><path d="M2,14 L11.5,2" stroke="#2f7a1a" stroke-width="1.8"/><path d="M9,1.5 L13,0.5 L12,4.5 Z" fill="#2f7a1a"/></svg>
<div class="t" style="left:1182px;top:473px;">Extract by attribute</div>
<svg class="i" style="left:1163px;top:492px" width="14" height="15" viewBox="0 0 14 15"><path d="M5,6 C2,7 1,11 3,13 C5,15 7,12 6,9 M9,3 C6,3 7,7 9,9 C11,11 12,14 9,14" fill="none" stroke="#e4e04a" stroke-width="2.2"/><path d="M2,14 L11.5,2" stroke="#2f7a1a" stroke-width="1.8"/><path d="M9,1.5 L13,0.5 L12,4.5 Z" fill="#2f7a1a"/></svg>
<div class="t" style="left:1182px;top:491px;">Extract by location</div>
<svg class="i" style="left:1163px;top:510px" width="14" height="15" viewBox="0 0 14 15"><path d="M5,6 C2,7 1,11 3,13 C5,15 7,12 6,9 M9,3 C6,3 7,7 9,9 C11,11 12,14 9,14" fill="none" stroke="#e4e04a" stroke-width="2.2"/><path d="M2,14 L11.5,2" stroke="#2f7a1a" stroke-width="1.8"/><path d="M9,1.5 L13,0.5 L12,4.5 Z" fill="#2f7a1a"/></svg>
<div class="t" style="left:1182px;top:509px;">Random extract</div>
<svg class="i" style="left:1163px;top:528px" width="14" height="15" viewBox="0 0 14 15"><path d="M5,6 C2,7 1,11 3,13 C5,15 7,12 6,9 M9,3 C6,3 7,7 9,9 C11,11 12,14 9,14" fill="none" stroke="#e4e04a" stroke-width="2.2"/><path d="M2,14 L11.5,2" stroke="#2f7a1a" stroke-width="1.8"/><path d="M9,1.5 L13,0.5 L12,4.5 Z" fill="#2f7a1a"/></svg>
<div class="t" style="left:1182px;top:527px;">Random extract within ...</div>
<svg class="i" style="left:1163px;top:544px" width="17" height="18" viewBox="0 0 17 18"><rect x="0.5" y="0.5" width="11" height="11" fill="#f8e060" stroke="#b09a30" stroke-width="0.8"/><rect x="9" y="9" width="8" height="8" rx="1" fill="#2a5a9a"/><text x="13" y="15.5" font-size="6" text-anchor="middle" fill="#fff" font-weight="bold">?</text></svg>
<div class="t" style="left:1184px;top:545px;">Random selection</div>
<svg class="i" style="left:1163px;top:562px" width="19" height="18" viewBox="0 0 19 18"><rect x="0.5" y="0.5" width="9" height="9" fill="#f8e060" stroke="#b09a30" stroke-width="0.8"/><rect x="4" y="4" width="9" height="9" fill="#f8e060" stroke="#b09a30" stroke-width="0.8"/><rect x="11" y="10" width="7" height="7" rx="1" fill="#2a5a9a"/><text x="14.5" y="16" font-size="6" text-anchor="middle" fill="#fff" font-weight="bold">?</text></svg>
<div class="t" style="left:1184px;top:563px;">Random selection withi...</div>
<svg class="i" style="left:1163px;top:582px" width="14" height="15" viewBox="0 0 14 15"><path d="M5,6 C2,7 1,11 3,13 C5,15 7,12 6,9 M9,3 C6,3 7,7 9,9 C11,11 12,14 9,14" fill="none" stroke="#e4e04a" stroke-width="2.2"/><path d="M2,14 L11.5,2" stroke="#2f7a1a" stroke-width="1.8"/><path d="M9,1.5 L13,0.5 L12,4.5 Z" fill="#2f7a1a"/></svg>
<div class="t" style="left:1182px;top:581px;">Remove null geometries</div>
<svg class="i" style="left:1163px;top:600px" width="14" height="15" viewBox="0 0 14 15"><path d="M5,6 C2,7 1,11 3,13 C5,15 7,12 6,9 M9,3 C6,3 7,7 9,9 C11,11 12,14 9,14" fill="none" stroke="#e4e04a" stroke-width="2.2"/><path d="M2,14 L11.5,2" stroke="#2f7a1a" stroke-width="1.8"/><path d="M9,1.5 L13,0.5 L12,4.5 Z" fill="#2f7a1a"/></svg>
<div class="t" style="left:1182px;top:599px;">Select by attribute</div>
<svg class="i" style="left:1163px;top:618px" width="14" height="15" viewBox="0 0 14 15"><path d="M5,6 C2,7 1,11 3,13 C5,15 7,12 6,9 M9,3 C6,3 7,7 9,9 C11,11 12,14 9,14" fill="none" stroke="#e4e04a" stroke-width="2.2"/><path d="M2,14 L11.5,2" stroke="#2f7a1a" stroke-width="1.8"/><path d="M9,1.5 L13,0.5 L12,4.5 Z" fill="#2f7a1a"/></svg>
<div class="t" style="left:1182px;top:617px;">Select by attribute sum</div>
<svg class="i" style="left:1163px;top:636px" width="14" height="15" viewBox="0 0 14 15"><path d="M5,6 C2,7 1,11 3,13 C5,15 7,12 6,9 M9,3 C6,3 7,7 9,9 C11,11 12,14 9,14" fill="none" stroke="#e4e04a" stroke-width="2.2"/><path d="M2,14 L11.5,2" stroke="#2f7a1a" stroke-width="1.8"/><path d="M9,1.5 L13,0.5 L12,4.5 Z" fill="#2f7a1a"/></svg>
<div class="t" style="left:1182px;top:635px;">Select by expression</div>
<svg class="i" style="left:1163px;top:652px" width="18" height="18" viewBox="0 0 18 18"><rect x="0.5" y="0.5" width="10" height="10" fill="#f8e060" stroke="#b09a30" stroke-width="0.8"/><path d="M3,8 L10,16 L17,8" stroke="#8aa8c8" stroke-width="1.2" fill="none"/></svg>
<div class="t" style="left:1184px;top:653px;">Select by location</div>
<svg class="i" style="left:1127px;top:673px" width="6" height="10" viewBox="0 0 6 10"><path d="M0.7,0.7 L5,5 L0.7,9.3 Z" fill="#fff" stroke="#111" stroke-width="1.1"/></svg>
<div class="t" style="left:1142px;top:670px;">Vector table tools</div>
<svg class="i" style="left:1107px;top:691px" width="6" height="10" viewBox="0 0 6 10"><path d="M0.7,0.7 L5,5 L0.7,9.3 Z" fill="#fff" stroke="#111" stroke-width="1.1"/></svg>
<svg class="i" style="left:1122px;top:688px" width="16" height="16" viewBox="0 0 16 16"><rect x="0.5" y="0.5" width="15" height="14" rx="1.5" fill="#2a3a2a" stroke="#888"/><rect x="2" y="3" width="12" height="10" fill="#0a140a"/><path d="M3.5,5.5 L6,7.5 L3.5,9.5" stroke="#cfe" stroke-width="1" fill="none"/><path d="M7,10 H10" stroke="#cfe"/></svg>
<div class="t" style="left:1144px;top:688px;">Scripts [0 geoalgorithms]</div>
<div class="a" style="left:0;top:706px;width:1365px;height:1px;background:#b9b8b1"></div>
<div class="a" style="left:0;top:741px;width:1365px;height:1px;background:#c9c8c2"></div>
<div class="t" style="left:363px;top:716px;">Coordinate</div>
<div class="a" style="left:436px;top:713px;width:127px;height:23px;background:#fff;border:1px solid #a9a8a2;border-top-color:#9a9994"></div>
<div class="t" style="left:453px;top:716px;">593757,78763</div>
<svg class="i" style="left:565px;top:712px" width="22" height="24" viewBox="0 0 22 24"><path d="M4,6 C6,1 12,1 14,4 L17,12 C18,17 14,21 9,21 C4,21 1,17 2,12 Z" fill="#222" stroke="#111"/><path d="M5,6 C6,3 10,3 12,5 L8,10 Z" fill="#f4f4f4"/><circle cx="11" cy="15" r="2.5" fill="#f4f4f4" stroke="#111"/><circle cx="18" cy="4" r="0.8" fill="#333"/><circle cx="20" cy="2" r="0.8" fill="#333"/><circle cx="19" cy="9" r="0.8" fill="#333"/><path d="M15,18 L18,21" stroke="#cc8888" stroke-width="2"/></svg>
<div class="t" style="left:600px;top:716px;">Scale</div>
<div class="a" style="left:638px;top:713px;width:110px;height:23px;background:#fff;border:1px solid #a9a8a2;border-top-color:#9a9994"></div>
<div class="a" style="left:728px;top:714px;width:19px;height:21px;background:linear-gradient(#f6f6f4,#e0dfdc);border-left:1px solid #b5b4ae"></div>
<svg class="i" style="left:733px;top:722px" width="9" height="5" viewBox="0 0 9 5"><path d="M0,0 H9 L4.5,5 Z" fill="#111"/></svg>
<div class="t" style="left:645px;top:716px;">1:119,655</div>
<svg class="i" style="left:754px;top:712px" width="20" height="24" viewBox="0 0 20 24"><path d="M5,11 V7 C5,2 15,2 15,7 V11" stroke="#666" stroke-width="2.6" fill="none"/><rect x="3" y="11" width="14" height="12" rx="1.5" fill="#666"/></svg>
<div class="t" style="left:787px;top:716px;">Magnifier</div>
<div class="a" style="left:848px;top:713px;width:82px;height:23px;background:#fff;border:1px solid #a9a8a2;border-top-color:#9a9994"></div>
<div class="t" style="left:853px;top:716px;">100%</div>
<svg class="i" style="left:918px;top:716px" width="7" height="16" viewBox="0 0 7 16"><path d="M0.5,4 L3.5,0.5 L6.5,4 Z M0.5,11.5 L3.5,15 L6.5,11.5 Z" fill="#111"/></svg>
<div class="t" style="left:938px;top:716px;">Rotation</div>
<div class="a" style="left:1000px;top:713px;width:80px;height:23px;background:#fff;border:1px solid #a9a8a2;border-top-color:#9a9994"></div>
<div class="t" style="left:1005px;top:716px;">0.0</div>
<svg class="i" style="left:1069px;top:716px" width="7" height="16" viewBox="0 0 7 16"><path d="M0.5,4 L3.5,0.5 L6.5,4 Z M0.5,11.5 L3.5,15 L6.5,11.5 Z" fill="#111"/></svg>
<div class="a" style="left:1088px;top:718px;width:12px;height:12px;background:#fff;border:1px solid #8a8a86"></div>
<svg class="i" style="left:1089px;top:719px" width="10" height="10" viewBox="0 0 10 10"><path d="M2,5 L4,8.5 L8.5,1.5" stroke="#111" stroke-width="2.2" fill="none"/></svg>
<div class="t" style="left:1107px;top:716px;">Render</div>
<svg class="i" style="left:1167px;top:714px" width="20" height="20" viewBox="0 0 20 20"><circle cx="10" cy="10" r="8.5" fill="#aaa" stroke="#222" stroke-width="1.6"/><path d="M1.5,10 H18.5 M10,1.5 V18.5" stroke="#222" stroke-width="1.4"/><ellipse cx="10" cy="10" rx="4" ry="8.5" fill="none" stroke="#222" stroke-width="1.2"/><path d="M3,5.5 H17 M3,14.5 H17" stroke="#222" stroke-width="1"/></svg>
<div class="t" style="left:1193px;top:716px;">EPSG:23700 (OTF)</div>
<svg class="i" style="left:1331px;top:714px" width="22" height="22" viewBox="0 0 22 22"><ellipse cx="10.5" cy="9" rx="10" ry="8.5" fill="#666"/><path d="M12,15 L20,20 L16,13 Z" fill="#666"/><circle cx="5.5" cy="9" r="1.6" fill="#fff"/><circle cx="10.5" cy="9" r="1.6" fill="#fff"/><circle cx="15.5" cy="9" r="1.6" fill="#fff"/></svg>
</body></html>
